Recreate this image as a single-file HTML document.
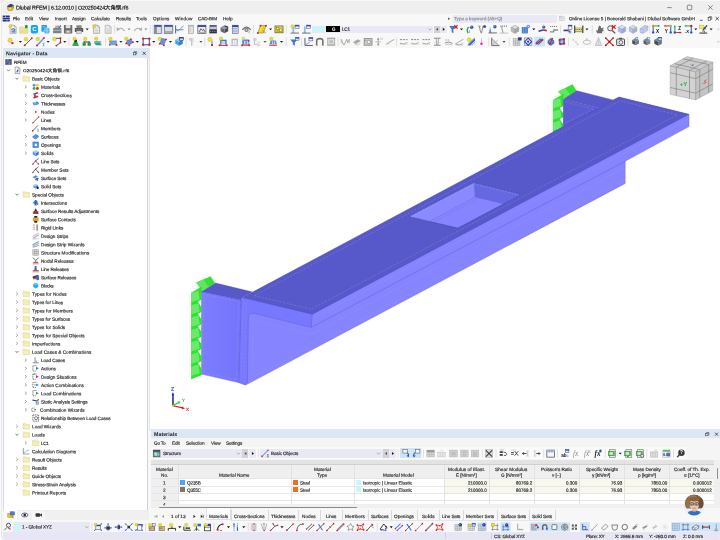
<!DOCTYPE html>
<html><head><meta charset="utf-8"><title>Dlubal RFEM</title>
<style>
html,body{margin:0;padding:0;}
body{width:720px;height:540px;overflow:hidden;position:relative;background:#fcfcfc;font-family:"Liberation Sans","Noto Sans CJK SC",sans-serif;color:#2a2a2a;}
.t{position:absolute;white-space:nowrap;line-height:6px;height:6px;-webkit-text-stroke:0.16px currentColor;}
.b{position:absolute;}
svg{position:absolute;left:0;top:0;}
svg text{font-family:"Liberation Sans","Noto Sans CJK SC",sans-serif;}
</style></head><body>
<div id="tx" style="position:absolute;left:0;top:0;width:720px;height:540px;will-change:transform;">
<div class="b" style="left:2.3px;top:0.3px;width:717.7px;height:538.6px;background:#f8f8f8;border-radius:3.5px 0 0 3.5px;box-shadow:0 0 1.5px #9a9a9a;"></div>
<div class="b" style="left:2.6px;top:0.5px;width:717.4px;height:13.2px;background:#efefef;border-radius:3.5px 0 0 0;"></div>
<span class="t" style="left:16.00px;top:4.10px;font-size:5.4px;letter-spacing:-0.111px;color:#111;transform:translateY(0.54px) rotate(0.03deg);">Dlubal RFEM | 6.12.0010 | O20250424大角钢.rf6</span>
<span class="t" style="left:12.50px;top:15.60px;font-size:4.7px;letter-spacing:-0.268px;transform:translateY(0.30px) rotate(0.03deg);">File</span>
<span class="t" style="left:25.00px;top:15.60px;font-size:4.7px;letter-spacing:-0.025px;transform:translateY(0.30px) rotate(0.03deg);">Edit</span>
<span class="t" style="left:39.00px;top:15.60px;font-size:4.7px;letter-spacing:-0.109px;transform:translateY(0.30px) rotate(0.03deg);">View</span>
<span class="t" style="left:54.50px;top:15.60px;font-size:4.7px;letter-spacing:-0.001px;transform:translateY(0.30px) rotate(0.03deg);">Insert</span>
<span class="t" style="left:72.00px;top:15.60px;font-size:4.7px;letter-spacing:-0.101px;transform:translateY(0.30px) rotate(0.03deg);">Assign</span>
<span class="t" style="left:91.25px;top:15.60px;font-size:4.7px;letter-spacing:-0.094px;transform:translateY(0.30px) rotate(0.03deg);">Calculate</span>
<span class="t" style="left:115.50px;top:15.60px;font-size:4.7px;letter-spacing:-0.096px;transform:translateY(0.30px) rotate(0.03deg);">Results</span>
<span class="t" style="left:136.25px;top:15.60px;font-size:4.7px;letter-spacing:-0.049px;transform:translateY(0.30px) rotate(0.03deg);">Tools</span>
<span class="t" style="left:153.00px;top:15.60px;font-size:4.7px;letter-spacing:0.043px;transform:translateY(0.30px) rotate(0.03deg);">Options</span>
<span class="t" style="left:175.00px;top:15.60px;font-size:4.7px;letter-spacing:0.131px;transform:translateY(0.30px) rotate(0.03deg);">Window</span>
<span class="t" style="left:198.00px;top:15.60px;font-size:4.7px;letter-spacing:-0.121px;transform:translateY(0.30px) rotate(0.03deg);">CAD-BIM</span>
<span class="t" style="left:223.00px;top:15.60px;font-size:4.7px;letter-spacing:-0.042px;transform:translateY(0.30px) rotate(0.03deg);">Help</span>
<div class="b" style="left:452.5px;top:14.6px;width:104px;height:8.2px;background:#e9e9f6;"></div>
<span class="t" style="left:453.80px;top:15.60px;font-size:4.7px;letter-spacing:-0.036px;color:#8a8a98;transform:translateY(0.30px) rotate(0.03deg);">Type a keyword (Alt+Q)</span>
<span class="t" style="left:568.80px;top:15.60px;font-size:4.7px;letter-spacing:-0.033px;transform:translateY(0.30px) rotate(0.03deg);">Online License 5 | Benerald Shabani | Dlubal Software GmbH</span>
<div class="b" style="left:312.3px;top:25.6px;width:121px;height:7.0px;background:#e9e9f6;"></div>
<div class="b" style="left:312.6px;top:26.3px;width:5.9px;height:5.7px;background:#c6f7fb;"></div>
<div class="b" style="left:319.2px;top:26.3px;width:5.9px;height:5.7px;background:#c6f7fb;"></div>
<div class="b" style="left:326.4px;top:26.0px;width:13.5px;height:6.2px;background:#000;"></div>
<span class="t" style="left:332.09px;top:25.60px;font-size:4.4px;color:#fff;transform:translateY(0.80px) rotate(0.03deg);">G</span>
<span class="t" style="left:342.00px;top:25.60px;font-size:4.6px;letter-spacing:-0.213px;transform:translateY(0.86px) rotate(0.03deg);">LC1</span>
<div class="b" style="left:434px;top:25.6px;width:5.8px;height:7.0px;background:#d2d2d6;"></div>
<div class="b" style="left:440.2px;top:25.6px;width:7.3px;height:7.0px;background:#e9e9f6;"></div>
<div class="b" style="left:3px;top:48px;width:145.6px;height:10px;background:#dbe7f5;"></div>
<span class="t" style="left:5.50px;top:50.10px;font-size:5.3px;letter-spacing:0.054px;color:#1a1a1a;font-weight:bold;-webkit-text-stroke:0;transform:translateY(0.20px) rotate(0.03deg);">Navigator - Data</span>
<div class="b" style="left:3px;top:58px;width:145.2px;height:452px;background:#fff;border-left:0.6px solid #d9d9ea;border-right:0.6px solid #d0d0e0;box-sizing:border-box;"></div>
<div class="b" style="left:3px;top:510px;width:145.6px;height:10.3px;background:#f0f0f0;"></div>
<div class="b" style="left:3.5px;top:510px;width:13.6px;height:9.6px;background:#fff;"></div>
<div class="b" style="left:18.2px;top:510.6px;width:12.2px;height:9.2px;background:#f6f6f6;"></div>
<div class="b" style="left:32px;top:510.6px;width:12.6px;height:9.2px;background:#f6f6f6;"></div>
<div class="b" style="left:13px;top:522.2px;width:77px;height:9.4px;background:#e9e9f6;"></div>
<div class="b" style="left:14.5px;top:524.4px;width:5.6px;height:5.4px;background:#c6f7fb;"></div>
<span class="t" style="left:22.30px;top:523.60px;font-size:4.7px;letter-spacing:-0.059px;transform:translateY(0.60px) rotate(0.03deg);">1 - Global XYZ</span>
<div class="b" style="left:148.6px;top:47.8px;width:1.6px;height:381px;background:#e4e4f2;"></div>
<div class="b" style="left:150.2px;top:47.8px;width:569.8px;height:380.8px;background:#fff;"></div>
<div class="b" style="left:148.6px;top:428.6px;width:571.4px;height:1.6px;background:#e6e6f3;"></div>
<div class="b" style="left:2.6px;top:532.2px;width:717.4px;height:6.6px;background:#e6e6f4;border-radius:0 0 0 3.5px;"></div>
<div class="b" style="left:444.7px;top:532.6px;width:0.5px;height:6px;background:#cfcfe0;"></div>
<div class="b" style="left:491.2px;top:532.6px;width:0.5px;height:6px;background:#cfcfe0;"></div>
<span class="t" style="left:493.50px;top:532.60px;font-size:4.7px;letter-spacing:-0.162px;transform:translateY(0.90px) rotate(0.03deg);">CS: Global XYZ</span>
<span class="t" style="left:586.00px;top:532.60px;font-size:4.7px;letter-spacing:-0.278px;transform:translateY(0.90px) rotate(0.03deg);">Plane: XY</span>
<span class="t" style="left:615.00px;top:532.60px;font-size:4.7px;letter-spacing:-0.097px;transform:translateY(0.90px) rotate(0.03deg);">X: 2968.8 mm</span>
<span class="t" style="left:648.70px;top:532.60px;font-size:4.7px;letter-spacing:-0.117px;transform:translateY(0.90px) rotate(0.03deg);">Y: -280.0 mm</span>
<span class="t" style="left:682.80px;top:532.60px;font-size:4.7px;letter-spacing:-0.128px;transform:translateY(0.90px) rotate(0.03deg);">Z: 0.0 mm</span>
<span class="t" style="left:171.11px;top:385.10px;font-size:5.2px;color:#3a3aa0;transform:translateY(0.67px) rotate(0.03deg);">Z</span>
<span class="t" style="left:186.45px;top:405.10px;font-size:5.8px;color:#e02020;transform:translateY(0.97px) rotate(0.03deg);">x</span>
<span class="t" style="left:181.50px;top:396.60px;font-size:4.2px;color:#20b820;transform:translateY(0.63px) rotate(0.03deg);">Y</span>
<span class="t" style="left:13.75px;top:58.60px;font-size:4.7px;letter-spacing:-0.216px;transform:translateY(1.00px) rotate(0.03deg);">RFEM</span>
<span class="t" style="left:23.00px;top:67.60px;font-size:4.7px;letter-spacing:0.032px;color:#111;font-weight:bold;-webkit-text-stroke:0;transform:translateY(0.28px) rotate(0.03deg);">O20250424大角钢.rf6</span>
<span class="t" style="left:32.00px;top:75.60px;font-size:4.7px;letter-spacing:-0.095px;transform:translateY(0.56px) rotate(0.03deg);">Basic Objects</span>
<span class="t" style="left:41.25px;top:83.60px;font-size:4.7px;letter-spacing:0.020px;transform:translateY(0.84px) rotate(0.03deg);">Materials</span>
<span class="t" style="left:41.25px;top:92.60px;font-size:4.7px;letter-spacing:-0.080px;transform:translateY(0.12px) rotate(0.03deg);">Cross-Sections</span>
<span class="t" style="left:41.25px;top:100.60px;font-size:4.7px;letter-spacing:-0.170px;transform:translateY(0.40px) rotate(0.03deg);">Thicknesses</span>
<span class="t" style="left:41.25px;top:108.60px;font-size:4.7px;letter-spacing:0.033px;transform:translateY(0.68px) rotate(0.03deg);">Nodes</span>
<span class="t" style="left:41.25px;top:116.60px;font-size:4.7px;letter-spacing:-0.197px;transform:translateY(0.96px) rotate(0.03deg);">Lines</span>
<span class="t" style="left:41.25px;top:125.60px;font-size:4.7px;letter-spacing:0.023px;transform:translateY(0.24px) rotate(0.03deg);">Members</span>
<span class="t" style="left:41.25px;top:133.60px;font-size:4.7px;letter-spacing:-0.131px;transform:translateY(0.52px) rotate(0.03deg);">Surfaces</span>
<span class="t" style="left:41.25px;top:141.60px;font-size:4.7px;letter-spacing:-0.046px;transform:translateY(0.80px) rotate(0.03deg);">Openings</span>
<span class="t" style="left:41.25px;top:150.60px;font-size:4.7px;letter-spacing:-0.050px;transform:translateY(0.08px) rotate(0.03deg);">Solids</span>
<span class="t" style="left:41.25px;top:158.60px;font-size:4.7px;letter-spacing:-0.150px;transform:translateY(0.36px) rotate(0.03deg);">Line Sets</span>
<span class="t" style="left:41.25px;top:166.60px;font-size:4.7px;letter-spacing:-0.018px;transform:translateY(0.64px) rotate(0.03deg);">Member Sets</span>
<span class="t" style="left:41.25px;top:174.60px;font-size:4.7px;letter-spacing:-0.138px;transform:translateY(0.92px) rotate(0.03deg);">Surface Sets</span>
<span class="t" style="left:41.25px;top:183.60px;font-size:4.7px;letter-spacing:-0.091px;transform:translateY(0.20px) rotate(0.03deg);">Solid Sets</span>
<span class="t" style="left:32.00px;top:191.60px;font-size:4.7px;letter-spacing:-0.044px;transform:translateY(0.48px) rotate(0.03deg);">Special Objects</span>
<span class="t" style="left:41.25px;top:199.60px;font-size:4.7px;letter-spacing:-0.050px;transform:translateY(0.76px) rotate(0.03deg);">Intersections</span>
<span class="t" style="left:41.25px;top:208.60px;font-size:4.7px;letter-spacing:-0.059px;transform:translateY(0.04px) rotate(0.03deg);">Surface Results Adjustments</span>
<span class="t" style="left:41.25px;top:216.60px;font-size:4.7px;letter-spacing:-0.081px;transform:translateY(0.32px) rotate(0.03deg);">Surface Contacts</span>
<span class="t" style="left:41.25px;top:224.60px;font-size:4.7px;letter-spacing:-0.067px;transform:translateY(0.60px) rotate(0.03deg);">Rigid Links</span>
<span class="t" style="left:41.25px;top:232.60px;font-size:4.7px;letter-spacing:-0.035px;transform:translateY(0.88px) rotate(0.03deg);">Design Strips</span>
<span class="t" style="left:41.25px;top:241.60px;font-size:4.7px;letter-spacing:-0.006px;transform:translateY(0.16px) rotate(0.03deg);">Design Strip Wizards</span>
<span class="t" style="left:41.25px;top:249.60px;font-size:4.7px;letter-spacing:0.030px;transform:translateY(0.44px) rotate(0.03deg);">Structure Modifications</span>
<span class="t" style="left:41.25px;top:257.60px;font-size:4.7px;letter-spacing:-0.031px;transform:translateY(0.72px) rotate(0.03deg);">Nodal Releases</span>
<span class="t" style="left:41.25px;top:265.60px;font-size:4.7px;letter-spacing:-0.157px;transform:translateY(1.00px) rotate(0.03deg);">Line Releases</span>
<span class="t" style="left:41.25px;top:274.60px;font-size:4.7px;letter-spacing:-0.115px;transform:translateY(0.28px) rotate(0.03deg);">Surface Releases</span>
<span class="t" style="left:41.25px;top:282.60px;font-size:4.7px;letter-spacing:-0.224px;transform:translateY(0.56px) rotate(0.03deg);">Blocks</span>
<span class="t" style="left:32.00px;top:290.60px;font-size:4.7px;letter-spacing:0.035px;transform:translateY(0.84px) rotate(0.03deg);">Types for Nodes</span>
<span class="t" style="left:32.00px;top:299.60px;font-size:4.7px;letter-spacing:-0.042px;transform:translateY(0.12px) rotate(0.03deg);">Types for Lines</span>
<span class="t" style="left:32.00px;top:307.60px;font-size:4.7px;letter-spacing:0.045px;transform:translateY(0.40px) rotate(0.03deg);">Types for Members</span>
<span class="t" style="left:32.00px;top:315.60px;font-size:4.7px;letter-spacing:-0.052px;transform:translateY(0.68px) rotate(0.03deg);">Types for Surfaces</span>
<span class="t" style="left:32.00px;top:323.60px;font-size:4.7px;letter-spacing:-0.012px;transform:translateY(0.96px) rotate(0.03deg);">Types for Solids</span>
<span class="t" style="left:32.00px;top:332.60px;font-size:4.7px;letter-spacing:-0.022px;transform:translateY(0.24px) rotate(0.03deg);">Types for Special Objects</span>
<span class="t" style="left:32.00px;top:340.60px;font-size:4.7px;letter-spacing:0.022px;transform:translateY(0.52px) rotate(0.03deg);">Imperfections</span>
<span class="t" style="left:32.00px;top:348.60px;font-size:4.7px;letter-spacing:-0.003px;transform:translateY(0.80px) rotate(0.03deg);">Load Cases &amp; Combinations</span>
<span class="t" style="left:41.25px;top:357.60px;font-size:4.7px;letter-spacing:-0.108px;transform:translateY(0.08px) rotate(0.03deg);">Load Cases</span>
<span class="t" style="left:41.25px;top:365.60px;font-size:4.7px;letter-spacing:-0.095px;transform:translateY(0.36px) rotate(0.03deg);">Actions</span>
<span class="t" style="left:41.25px;top:373.60px;font-size:4.7px;letter-spacing:-0.049px;transform:translateY(0.64px) rotate(0.03deg);">Design Situations</span>
<span class="t" style="left:41.25px;top:381.60px;font-size:4.7px;letter-spacing:-0.006px;transform:translateY(0.92px) rotate(0.03deg);">Action Combinations</span>
<span class="t" style="left:41.25px;top:390.60px;font-size:4.7px;letter-spacing:0.000px;transform:translateY(0.20px) rotate(0.03deg);">Load Combinations</span>
<span class="t" style="left:41.25px;top:398.60px;font-size:4.7px;letter-spacing:-0.077px;transform:translateY(0.48px) rotate(0.03deg);">Static Analysis Settings</span>
<span class="t" style="left:40.00px;top:406.60px;font-size:4.7px;letter-spacing:0.004px;transform:translateY(0.76px) rotate(0.03deg);">Combination Wizards</span>
<span class="t" style="left:41.25px;top:415.60px;font-size:4.7px;letter-spacing:-0.068px;transform:translateY(0.04px) rotate(0.03deg);">Relationship Between Load Cases</span>
<span class="t" style="left:32.00px;top:423.60px;font-size:4.7px;letter-spacing:0.022px;transform:translateY(0.32px) rotate(0.03deg);">Load Wizards</span>
<span class="t" style="left:32.00px;top:431.60px;font-size:4.7px;letter-spacing:-0.011px;transform:translateY(0.60px) rotate(0.03deg);">Loads</span>
<span class="t" style="left:41.25px;top:439.60px;font-size:4.7px;letter-spacing:-0.350px;transform:translateY(0.88px) rotate(0.03deg);">LC1</span>
<span class="t" style="left:32.00px;top:448.60px;font-size:4.7px;letter-spacing:-0.021px;transform:translateY(0.16px) rotate(0.03deg);">Calculation Diagrams</span>
<span class="t" style="left:32.00px;top:456.60px;font-size:4.7px;letter-spacing:-0.040px;transform:translateY(0.44px) rotate(0.03deg);">Result Objects</span>
<span class="t" style="left:32.00px;top:464.60px;font-size:4.7px;letter-spacing:-0.132px;transform:translateY(0.72px) rotate(0.03deg);">Results</span>
<span class="t" style="left:32.00px;top:472.60px;font-size:4.7px;letter-spacing:-0.041px;transform:translateY(1.00px) rotate(0.03deg);">Guide Objects</span>
<span class="t" style="left:32.00px;top:481.60px;font-size:4.7px;letter-spacing:-0.078px;transform:translateY(0.28px) rotate(0.03deg);">Stress-Strain Analysis</span>
<span class="t" style="left:32.00px;top:489.60px;font-size:4.7px;letter-spacing:0.018px;transform:translateY(0.56px) rotate(0.03deg);">Printout Reports</span>
<div class="b" style="left:150.6px;top:430.2px;width:569.4px;height:8.1px;background:#dbe7f5;"></div>
<span class="t" style="left:153.80px;top:431.10px;font-size:5.3px;letter-spacing:0.014px;color:#1a1a1a;font-weight:bold;-webkit-text-stroke:0;transform:translateY(0.10px) rotate(0.03deg);">Materials</span>
<div class="b" style="left:150.6px;top:438.3px;width:569.4px;height:21.5px;background:#f5f5f5;"></div>
<div class="b" style="left:150.6px;top:447.0px;width:536.1px;height:12.2px;background:#fafafa;"></div>
<span class="t" style="left:154.25px;top:439.60px;font-size:4.7px;letter-spacing:-0.202px;transform:translateY(0.80px) rotate(0.03deg);">Go To</span>
<span class="t" style="left:172.30px;top:439.60px;font-size:4.7px;letter-spacing:-0.100px;transform:translateY(0.80px) rotate(0.03deg);">Edit</span>
<span class="t" style="left:186.20px;top:439.60px;font-size:4.7px;letter-spacing:-0.093px;transform:translateY(0.80px) rotate(0.03deg);">Selection</span>
<span class="t" style="left:210.50px;top:439.60px;font-size:4.7px;letter-spacing:-0.172px;transform:translateY(0.80px) rotate(0.03deg);">View</span>
<span class="t" style="left:226.00px;top:439.60px;font-size:4.7px;letter-spacing:-0.098px;transform:translateY(0.80px) rotate(0.03deg);">Settings</span>
<div class="b" style="left:152.9px;top:449.0px;width:88.7px;height:8.6px;background:#e9e9f6;"></div>
<div class="b" style="left:242.3px;top:449.0px;width:6.2px;height:8.6px;background:#d2d2d6;"></div>
<div class="b" style="left:248.5px;top:449.0px;width:7.5px;height:8.6px;background:#e9e9f6;"></div>
<div class="b" style="left:260.0px;top:449.0px;width:122.6px;height:8.6px;background:#e9e9f6;"></div>
<div class="b" style="left:382.8px;top:449.0px;width:6.0px;height:8.6px;background:#d2d2d6;"></div>
<div class="b" style="left:388.8px;top:449.0px;width:7.5px;height:8.6px;background:#e9e9f6;"></div>
<span class="t" style="left:162.60px;top:449.60px;font-size:4.7px;letter-spacing:-0.119px;transform:translateY(1.00px) rotate(0.03deg);">Structure</span>
<span class="t" style="left:271.00px;top:449.60px;font-size:4.7px;letter-spacing:-0.114px;transform:translateY(1.00px) rotate(0.03deg);">Basic Objects</span>
<div class="b" style="left:150.6px;top:459.7px;width:569.4px;height:45px;background:#fff;"></div>
<div class="b" style="left:150.6px;top:459.7px;width:563.6px;height:4.400000000000034px;background:#e3e3e3;"></div>
<div class="b" style="left:150.6px;top:464.1px;width:563.6px;height:14.5px;background:#efefef;"></div>
<div class="b" style="left:150.6px;top:478.6px;width:27.200000000000017px;height:25.8px;background:#efefef;"></div>
<div class="b" style="left:444px;top:478.6px;width:270px;height:7.25px;background:#f8f8ef;"></div>
<div class="b" style="left:444px;top:485.85px;width:270px;height:7.25px;background:#f8f8ef;"></div>
<div class="b" style="left:177.55px;top:459.7px;width:0.5px;height:45px;background:#e2e2e2;"></div>
<div class="b" style="left:290.75px;top:459.7px;width:0.5px;height:45px;background:#e2e2e2;"></div>
<div class="b" style="left:353.55px;top:459.7px;width:0.5px;height:45px;background:#e2e2e2;"></div>
<div class="b" style="left:443.75px;top:459.7px;width:0.5px;height:45px;background:#e2e2e2;"></div>
<div class="b" style="left:488.75px;top:459.7px;width:0.5px;height:45px;background:#e2e2e2;"></div>
<div class="b" style="left:533.75px;top:459.7px;width:0.5px;height:45px;background:#e2e2e2;"></div>
<div class="b" style="left:578.75px;top:459.7px;width:0.5px;height:45px;background:#e2e2e2;"></div>
<div class="b" style="left:623.75px;top:459.7px;width:0.5px;height:45px;background:#e2e2e2;"></div>
<div class="b" style="left:668.75px;top:459.7px;width:0.5px;height:45px;background:#e2e2e2;"></div>
<div class="b" style="left:713.75px;top:459.7px;width:0.5px;height:45px;background:#e2e2e2;"></div>
<div class="b" style="left:150.6px;top:478.35px;width:563.6px;height:0.5px;background:#e6e6e6;"></div>
<div class="b" style="left:150.6px;top:485.6px;width:563.6px;height:0.5px;background:#e6e6e6;"></div>
<div class="b" style="left:150.6px;top:492.85px;width:563.6px;height:0.5px;background:#e6e6e6;"></div>
<div class="b" style="left:150.6px;top:500.1px;width:563.6px;height:0.5px;background:#e6e6e6;"></div>
<div class="b" style="left:150.6px;top:463.90000000000003px;width:563.6px;height:0.4px;background:#d0d0d0;"></div>
<div class="b" style="left:714.3px;top:459.7px;width:5.7px;height:45px;background:#f0f0f0;"></div>
<div class="b" style="left:717.2px;top:467.6px;width:1.3px;height:11px;background:#8e8e8e;border-radius:0.6px;"></div>
<div class="b" style="left:150.6px;top:504.4px;width:569.4px;height:3.8px;background:#f0f0f0;"></div>
<div class="b" style="left:158.9px;top:506.8px;width:198.6px;height:0.9px;background:#8a8a8a;border-radius:0.4px;"></div>
<span class="t" style="left:156.04px;top:465.60px;font-size:4.7px;transform:translateY(0.90px) rotate(0.03deg);">Material</span>
<span class="t" style="left:160.74px;top:471.60px;font-size:4.7px;transform:translateY(0.80px) rotate(0.03deg);">No.</span>
<span class="t" style="left:219.12px;top:471.60px;font-size:4.7px;transform:translateY(0.80px) rotate(0.03deg);">Material Name</span>
<span class="t" style="left:314.04px;top:465.60px;font-size:4.7px;transform:translateY(0.90px) rotate(0.03deg);">Material</span>
<span class="t" style="left:317.18px;top:471.60px;font-size:4.7px;transform:translateY(0.80px) rotate(0.03deg);">Type</span>
<span class="t" style="left:383.49px;top:471.60px;font-size:4.7px;transform:translateY(0.80px) rotate(0.03deg);">Material Model</span>
<span class="t" style="left:447.85px;top:465.60px;font-size:4.7px;letter-spacing:0.073px;transform:translateY(0.90px) rotate(0.03deg);">Modulus of Elast.</span>
<span class="t" style="left:456.15px;top:471.60px;font-size:4.6px;transform:translateY(0.76px) rotate(0.03deg);">E [N/mm²]</span>
<span class="t" style="left:495.25px;top:465.60px;font-size:4.7px;letter-spacing:0.068px;transform:translateY(0.90px) rotate(0.03deg);">Shear Modulus</span>
<span class="t" style="left:500.90px;top:471.60px;font-size:4.6px;transform:translateY(0.76px) rotate(0.03deg);">G [N/mm²]</span>
<span class="t" style="left:540.90px;top:465.60px;font-size:4.7px;letter-spacing:-0.070px;transform:translateY(0.90px) rotate(0.03deg);">Poisson's Ratio</span>
<span class="t" style="left:552.15px;top:471.60px;font-size:4.6px;transform:translateY(0.76px) rotate(0.03deg);">ν [–]</span>
<span class="t" style="left:585.50px;top:465.60px;font-size:4.7px;letter-spacing:-0.026px;transform:translateY(0.90px) rotate(0.03deg);">Specific Weight</span>
<span class="t" style="left:592.30px;top:471.60px;font-size:4.6px;transform:translateY(0.76px) rotate(0.03deg);">γ [kN/m³]</span>
<span class="t" style="left:632.50px;top:465.60px;font-size:4.7px;letter-spacing:-0.017px;transform:translateY(0.90px) rotate(0.03deg);">Mass Density</span>
<span class="t" style="left:637.52px;top:471.60px;font-size:4.6px;transform:translateY(0.76px) rotate(0.03deg);">ρ [kg/m³]</span>
<span class="t" style="left:673.50px;top:465.60px;font-size:4.7px;letter-spacing:-0.032px;transform:translateY(0.90px) rotate(0.03deg);">Coeff. of Th. Exp.</span>
<span class="t" style="left:683.75px;top:471.60px;font-size:4.6px;transform:translateY(0.76px) rotate(0.03deg);">α [1/°C]</span>
<span class="t" style="left:163.09px;top:479.60px;font-size:4.7px;transform:translateY(0.50px) rotate(0.03deg);">1</span>
<div class="b" style="left:180.1px;top:480.20000000000005px;width:4.9px;height:4.8px;background:#4aa5ff;"></div>
<span class="t" style="left:187.00px;top:479.60px;font-size:4.7px;letter-spacing:-0.166px;transform:translateY(0.50px) rotate(0.03deg);">Q235B</span>
<div class="b" style="left:292.9px;top:480.20000000000005px;width:4.7px;height:4.8px;background:#ee6f1f;"></div>
<span class="t" style="left:300.00px;top:479.60px;font-size:4.7px;letter-spacing:-0.143px;transform:translateY(0.50px) rotate(0.03deg);">Steel</span>
<div class="b" style="left:356.4px;top:480.20000000000005px;width:4.7px;height:4.8px;background:#c6f7fb;"></div>
<span class="t" style="left:362.70px;top:479.60px;font-size:4.7px;letter-spacing:-0.020px;transform:translateY(0.50px) rotate(0.03deg);">Isotropic | Linear Elastic</span>
<span class="t" style="left:468.33px;top:479.60px;font-size:4.5px;transform:translateY(0.43px) rotate(0.03deg);">210000.0</span>
<span class="t" style="left:515.83px;top:479.60px;font-size:4.5px;transform:translateY(0.43px) rotate(0.03deg);">80769.2</span>
<span class="t" style="left:565.84px;top:479.60px;font-size:4.5px;transform:translateY(0.43px) rotate(0.03deg);">0.300</span>
<span class="t" style="left:610.84px;top:479.60px;font-size:4.5px;transform:translateY(0.43px) rotate(0.03deg);">76.93</span>
<span class="t" style="left:650.83px;top:479.60px;font-size:4.5px;transform:translateY(0.43px) rotate(0.03deg);">7850.00</span>
<span class="t" style="left:693.33px;top:479.60px;font-size:4.5px;transform:translateY(0.43px) rotate(0.03deg);">0.000012</span>
<span class="t" style="left:163.09px;top:486.60px;font-size:4.7px;transform:translateY(0.75px) rotate(0.03deg);">2</span>
<div class="b" style="left:180.1px;top:487.45000000000005px;width:4.9px;height:4.8px;background:#8a7358;"></div>
<span class="t" style="left:187.00px;top:486.60px;font-size:4.7px;letter-spacing:-0.218px;transform:translateY(0.75px) rotate(0.03deg);">Q355C</span>
<div class="b" style="left:292.9px;top:487.45000000000005px;width:4.7px;height:4.8px;background:#ee6f1f;"></div>
<span class="t" style="left:300.00px;top:486.60px;font-size:4.7px;letter-spacing:-0.143px;transform:translateY(0.75px) rotate(0.03deg);">Steel</span>
<div class="b" style="left:356.4px;top:487.45000000000005px;width:4.7px;height:4.8px;background:#c6f7fb;"></div>
<span class="t" style="left:362.70px;top:486.60px;font-size:4.7px;letter-spacing:-0.020px;transform:translateY(0.75px) rotate(0.03deg);">Isotropic | Linear Elastic</span>
<span class="t" style="left:468.33px;top:486.60px;font-size:4.5px;transform:translateY(0.68px) rotate(0.03deg);">210000.0</span>
<span class="t" style="left:515.83px;top:486.60px;font-size:4.5px;transform:translateY(0.68px) rotate(0.03deg);">80769.2</span>
<span class="t" style="left:565.84px;top:486.60px;font-size:4.5px;transform:translateY(0.68px) rotate(0.03deg);">0.300</span>
<span class="t" style="left:610.84px;top:486.60px;font-size:4.5px;transform:translateY(0.68px) rotate(0.03deg);">76.93</span>
<span class="t" style="left:650.83px;top:486.60px;font-size:4.5px;transform:translateY(0.68px) rotate(0.03deg);">7850.00</span>
<span class="t" style="left:693.33px;top:486.60px;font-size:4.5px;transform:translateY(0.68px) rotate(0.03deg);">0.000012</span>
<span class="t" style="left:163.09px;top:493.60px;font-size:4.7px;transform:translateY(1.00px) rotate(0.03deg);">3</span>
<span class="t" style="left:163.09px;top:501.60px;font-size:4.7px;transform:translateY(0.25px) rotate(0.03deg);clip-path:inset(0 0 2.9px 0);">4</span>
<div class="b" style="left:150.6px;top:508.2px;width:569.4px;height:12.6px;background:#f7f7f7;"></div>
<div class="b" style="left:206.3px;top:508.2px;width:24.9px;height:12.2px;background:#fff;border:0.4px solid #e0e0e0;border-top:none;box-sizing:border-box;"></div>
<span class="t" style="left:170.60px;top:512.60px;font-size:4.7px;letter-spacing:0.047px;transform:translateY(1.00px) rotate(0.03deg);">1 of 13</span>
<span class="t" style="left:209.00px;top:512.60px;font-size:4.7px;letter-spacing:0.004px;transform:translateY(1.00px) rotate(0.03deg);">Materials</span>
<span class="t" style="left:234.40px;top:512.60px;font-size:4.7px;letter-spacing:-0.090px;transform:translateY(1.00px) rotate(0.03deg);">Cross-Sections</span>
<span class="t" style="left:271.00px;top:512.60px;font-size:4.7px;letter-spacing:-0.170px;transform:translateY(1.00px) rotate(0.03deg);">Thicknesses</span>
<span class="t" style="left:302.25px;top:512.60px;font-size:4.7px;letter-spacing:0.033px;transform:translateY(1.00px) rotate(0.03deg);">Nodes</span>
<span class="t" style="left:326.00px;top:512.60px;font-size:4.7px;letter-spacing:-0.197px;transform:translateY(1.00px) rotate(0.03deg);">Lines</span>
<span class="t" style="left:345.00px;top:512.60px;font-size:4.7px;letter-spacing:0.059px;transform:translateY(1.00px) rotate(0.03deg);">Members</span>
<span class="t" style="left:371.25px;top:512.60px;font-size:4.7px;letter-spacing:-0.131px;transform:translateY(1.00px) rotate(0.03deg);">Surfaces</span>
<span class="t" style="left:394.40px;top:512.60px;font-size:4.7px;letter-spacing:-0.015px;transform:translateY(1.00px) rotate(0.03deg);">Openings</span>
<span class="t" style="left:422.25px;top:512.60px;font-size:4.7px;letter-spacing:-0.050px;transform:translateY(1.00px) rotate(0.03deg);">Solids</span>
<span class="t" style="left:441.90px;top:512.60px;font-size:4.7px;letter-spacing:-0.138px;transform:translateY(1.00px) rotate(0.03deg);">Line Sets</span>
<span class="t" style="left:466.25px;top:512.60px;font-size:4.7px;letter-spacing:0.018px;transform:translateY(1.00px) rotate(0.03deg);">Member Sets</span>
<span class="t" style="left:500.60px;top:512.60px;font-size:4.7px;letter-spacing:-0.159px;transform:translateY(1.00px) rotate(0.03deg);">Surface Sets</span>
<span class="t" style="left:531.90px;top:512.60px;font-size:4.7px;letter-spacing:-0.116px;transform:translateY(1.00px) rotate(0.03deg);">Solid Sets</span>
<div class="b" style="left:231.0px;top:509.6px;width:0.4px;height:10.2px;background:#d9d9e4;"></div>
<div class="b" style="left:267.8px;top:509.6px;width:0.4px;height:10.2px;background:#d9d9e4;"></div>
<div class="b" style="left:298.3px;top:509.6px;width:0.4px;height:10.2px;background:#d9d9e4;"></div>
<div class="b" style="left:319.8px;top:509.6px;width:0.4px;height:10.2px;background:#d9d9e4;"></div>
<div class="b" style="left:341.8px;top:509.6px;width:0.4px;height:10.2px;background:#d9d9e4;"></div>
<div class="b" style="left:368.3px;top:509.6px;width:0.4px;height:10.2px;background:#d9d9e4;"></div>
<div class="b" style="left:391.05px;top:509.6px;width:0.4px;height:10.2px;background:#d9d9e4;"></div>
<div class="b" style="left:417.3px;top:509.6px;width:0.4px;height:10.2px;background:#d9d9e4;"></div>
<div class="b" style="left:438.8px;top:509.6px;width:0.4px;height:10.2px;background:#d9d9e4;"></div>
<div class="b" style="left:462.90000000000003px;top:509.6px;width:0.4px;height:10.2px;background:#d9d9e4;"></div>
<div class="b" style="left:497.3px;top:509.6px;width:0.4px;height:10.2px;background:#d9d9e4;"></div>
<div class="b" style="left:528.55px;top:509.6px;width:0.4px;height:10.2px;background:#d9d9e4;"></div>
<div class="b" style="left:554.8px;top:509.6px;width:0.4px;height:10.2px;background:#d9d9e4;"></div>
<div class="b" style="left:231.4px;top:519.6px;width:323.6px;height:0.4px;background:#e4e4ec;"></div>
</div>
<svg width="720" height="540" viewBox="0 0 720 540">
<line x1="667.2" y1="7.6" x2="671.7" y2="7.6" stroke="#222" stroke-width="0.5" />
<rect x="687.3" y="5.2" width="4.5" height="4.5" fill="none" stroke="#222" stroke-width="0.5" rx="0.9"/>
<line x1="708.1" y1="5.2" x2="712.6" y2="9.8" stroke="#222" stroke-width="0.5" /><line x1="712.6" y1="5.2" x2="708.1" y2="9.8" stroke="#222" stroke-width="0.5" />
<polygon points="448.3,17.5 448.3,19.9 449.9,18.7" fill="#222" />
<line x1="699.9" y1="20.3" x2="702.7" y2="20.3" stroke="#222" stroke-width="0.7" />
<line x1="715.6" y1="17.0" x2="718.8" y2="20.2" stroke="#111" stroke-width="0.7" /><line x1="718.8" y1="17.0" x2="715.6" y2="20.2" stroke="#111" stroke-width="0.7" />
<line x1="142.7" y1="51.8" x2="145.7" y2="54.8" stroke="#111" stroke-width="0.65" /><line x1="145.7" y1="51.8" x2="142.7" y2="54.8" stroke="#111" stroke-width="0.65" />
<polygon points="558,91.5 572.6,84.3 576.6,90.9 564.3,98.6" fill="#35e135" />
<polygon points="558,91.5 565.3,87.9 570.45,94.75 564.3,98.6" fill="#5fe85f" />
<polygon points="552.9,100.0 563.6,93.8 563.6,129.9 552.9,134.20000000000002" fill="#2fe02f" />
<polygon points="552.9,100.3 560.3000000000001,98.2 561.4,105.8 552.9,108.5" fill="#6be96b" />
<polygon points="552.9,111.5 560.3000000000001,109.4 561.4,117.0 552.9,119.7" fill="#6be96b" />
<polygon points="559.7,107.8 563.3000000000001,106.0 562.9,112.9" fill="#fff" />
<polygon points="552.9,122.7 560.3000000000001,120.60000000000001 561.4,128.20000000000002 552.9,130.9" fill="#6be96b" />
<polygon points="559.7,119.0 563.3000000000001,117.2 562.9,124.10000000000001" fill="#fff" />
<polygon points="196.2,282.6 210.6,276.2 215.2,283.2 201.9,290.8" fill="#35e135" />
<polygon points="196.2,282.6 203.39999999999998,279.4 208.55,287.0 201.9,290.8" fill="#5fe85f" />
<polygon points="191.1,292.7 201.8,286.5 201.8,375.0 191.1,379.3" fill="#2fe02f" />
<polygon points="191.1,293.0 198.5,290.9 199.60000000000002,299.5857142857143 191.1,302.2857142857143" fill="#6be96b" />
<polygon points="191.1,305.2857142857143 198.5,303.18571428571425 199.60000000000002,311.87142857142857 191.1,314.57142857142856" fill="#6be96b" />
<polygon points="197.9,301.5857142857143 201.5,299.7857142857143 201.10000000000002,306.68571428571425" fill="#fff" />
<polygon points="191.1,317.57142857142856 198.5,315.47142857142853 199.60000000000002,324.15714285714284 191.1,326.85714285714283" fill="#6be96b" />
<polygon points="197.9,313.87142857142857 201.5,312.07142857142856 201.10000000000002,318.97142857142853" fill="#fff" />
<polygon points="191.1,329.8571428571429 198.5,327.75714285714287 199.60000000000002,336.4428571428572 191.1,339.14285714285717" fill="#6be96b" />
<polygon points="197.9,326.1571428571429 201.5,324.3571428571429 201.10000000000002,331.25714285714287" fill="#fff" />
<polygon points="191.1,342.14285714285717 198.5,340.04285714285714 199.60000000000002,348.72857142857146 191.1,351.42857142857144" fill="#6be96b" />
<polygon points="197.9,338.4428571428572 201.5,336.64285714285717 201.10000000000002,343.54285714285714" fill="#fff" />
<polygon points="191.1,354.42857142857144 198.5,352.3285714285714 199.60000000000002,361.01428571428573 191.1,363.7142857142857" fill="#6be96b" />
<polygon points="197.9,350.72857142857146 201.5,348.92857142857144 201.10000000000002,355.8285714285714" fill="#fff" />
<polygon points="191.1,366.7142857142857 198.5,364.6142857142857 199.60000000000002,373.3 191.1,376.0" fill="#6be96b" />
<polygon points="197.9,363.01428571428573 201.5,361.2142857142857 201.10000000000002,368.1142857142857" fill="#fff" />
<polygon points="241,300 238.6,382.6 245.5,385.1 625.2,183.4 625.2,161.2 689,126.5 689,114.3 619,97 300,270" fill="#8685ff" />
<path d="M241.2,300 L242.3,297.6 L312.3,314.2 L311.2,327.4 L254,313.3 Q248.6,312.4 248.4,318.5 L247.4,383 L245.5,385.1 L238.6,382.6 Z" fill="#7778ff" stroke="none" stroke-width="0.7" />
<defs><linearGradient id="gf" x1="0" x2="1" y1="0" y2="0"><stop offset="0" stop-color="#7c7dff"/><stop offset="1" stop-color="#7374fb"/></linearGradient></defs>
<polygon points="201.4,291.7 241.2,300 238.6,382.6 201.6,374.1" fill="url(#gf)" />
<polygon points="563.3,99.3 576.8,90.8 612.9,99.9 606,108 598.3,107.7" fill="#5758ca" />
<polygon points="563.3,99.3 598.3,107.7 603,112 563.3,130" fill="#5b5cd0" />
<polygon points="201.4,291.7 215.7,283.1 252.6,292 242.3,297.6 241.2,300" fill="#5758ca" />
<polygon points="242.3,297.6 613,100.1 619,97 689,114.3 312.3,314.2" fill="#5758ca" />
<polygon points="409,216.6 474,182.6 521.3,194.4 457.8,228.1" fill="#8685ff" />
<polygon points="474,182.6 521.3,194.4 504.3,203.9 474.9,197.1" fill="#6667e2" />
<polygon points="409,216.6 474,182.6 474.9,197.1 429.8,221.4" fill="#8a89ff" />
<polyline points="429.8,221.4 474.9,197.1 504.3,203.9" fill="none" stroke="#6a6ad0" stroke-width="0.4" />
<polyline points="433.5,222.3 477.5,198.6" fill="none" stroke="#7272d8" stroke-width="0.35" />
<polyline points="474,182.6 474.9,197.1" fill="none" stroke="#6a6ad0" stroke-width="0.4" />
<polyline points="409,216.6 474,182.6 521.3,194.4 457.8,228.1 409,216.6" fill="none" stroke="#2c4a9c" stroke-width="0.6" stroke-dasharray="1.3 0.6"/>
<polyline points="411.5,216.5 474.2,183.9 518.6,194.9" fill="none" stroke="#b4b4ea" stroke-width="0.35" stroke-dasharray="2 1.2"/>
<polyline points="201.4,291.7 241.2,300 238.6,382.6" fill="none" stroke="#4b4cba" stroke-width="0.45" />
<polyline points="201.4,291.7 215.7,283.1 252.6,292" fill="none" stroke="#4b4cba" stroke-width="0.4" />
<polyline points="242.3,297.6 312.3,314.2 689,114.3 619,97 613,100.1 242.3,297.6" fill="none" stroke="#4b4cba" stroke-width="0.4" />
<polyline points="312.3,314.2 311.2,327.4 625.2,161.2" fill="none" stroke="#5f60d2" stroke-width="0.5" />
<polyline points="689,114.3 689,126.5 625.2,161.2 625.2,183.4" fill="none" stroke="#6a6be0" stroke-width="0.45" />
<polyline points="311.2,327.4 254,313.3" fill="none" stroke="#6061d8" stroke-width="0.45" />
<path d="M254,313.3 Q248.6,312.4 248.4,318.5 L247.4,383" fill="none" stroke="#6061d8" stroke-width="0.45" />
<polyline points="245.5,385.1 625.2,183.4" fill="none" stroke="#6a6be0" stroke-width="0.5" />
<polyline points="201.6,374.1 238.6,382.6 245.5,385.1" fill="none" stroke="#6a6be0" stroke-width="0.5" />
<polyline points="563.3,99.3 576.8,90.8 612.9,99.9" fill="none" stroke="#4b4cba" stroke-width="0.4" />
<polyline points="563.3,99.3 598.3,107.7" fill="none" stroke="#4b4cba" stroke-width="0.4" />
<polyline points="563.3,99.3 563.3,125.8" fill="none" stroke="#4b4cba" stroke-width="0.4" />
<path d="M256,323 Q253,322.5 252.8,326 L252.2,377.5 L625,179.5" fill="none" stroke="#a9a9dc" stroke-width="0.4" stroke-dasharray="2.4 1.3" stroke-opacity="0.62"/>
<polyline points="258,321 311,334.5 624,168.5" fill="none" stroke="#a9a9dc" stroke-width="0.4" stroke-dasharray="2.4 1.3" stroke-opacity="0.62"/>
<polyline points="314.5,317.6 687.5,119.6" fill="none" stroke="#a9a9dc" stroke-width="0.4" stroke-dasharray="2.4 1.3" stroke-opacity="0.62"/>
<polyline points="254.3,295.6 311.2,309.1 677.2,114.9 620.2,100.8 254.3,295.6" fill="none" stroke="#a9a9dc" stroke-width="0.45" stroke-dasharray="2.4 1.3" stroke-opacity="0.62"/>
<polyline points="203.5,294.2 238.8,301.8 236.6,380 203.6,372.4 203.5,294.2" fill="none" stroke="#a9a9dc" stroke-width="0.45" stroke-dasharray="2.4 1.3" stroke-opacity="0.62"/>
<polyline points="243.2,301 241,381.5" fill="none" stroke="#a9a9dc" stroke-width="0.4" stroke-dasharray="2.4 1.3" stroke-opacity="0.62"/>
<polyline points="246,302 244.2,382.5" fill="none" stroke="#a9a9dc" stroke-width="0.4" stroke-dasharray="2.4 1.3" stroke-opacity="0.62"/>
<polyline points="565.3,102 594,109 565.3,123" fill="none" stroke="#a9a9dc" stroke-width="0.4" stroke-dasharray="2.4 1.3" stroke-opacity="0.62"/>
<line x1="172.96" y1="405.8" x2="172.96" y2="394.6" stroke="#20209a" stroke-width="1.5" />
<polygon points="171.6,395.2 174.3,395.2 172.96,392.2" fill="#20209a" />
<line x1="172.96" y1="405.8" x2="182.8" y2="407.9" stroke="#e01515" stroke-width="1.1" />
<polygon points="182.2,406.5 185.0,408.5 181.8,409.3" fill="#e01515" />
<line x1="172.96" y1="405.8" x2="178.6" y2="402.6" stroke="#18c818" stroke-width="1.1" />
<polygon points="177.8,401.5 180.6,401.5 179.0,403.9" fill="#18c818" />
<circle cx="172.96" cy="405.8" r="0.95" fill="#e0d020" />
<polygon points="670.2,65.8 695.6,71.9 695.6,99.9 670.2,94.3" fill="#d2d2d2" />
<polygon points="695.6,71.9 713,62.2 712.7,90.7 695.6,99.9" fill="#c4c4c4" />
<polygon points="670.2,65.8 687,56.6 713,62.2 695.6,71.9" fill="#cbcbcb" />
<polyline points="676.296,67.264 676.296,95.644" fill="none" stroke="#787878" stroke-width="0.6" />
<polyline points="670.2,72.64 695.6,78.62" fill="none" stroke="#787878" stroke-width="0.6" />
<polyline points="689.504,70.436 689.504,98.556" fill="none" stroke="#787878" stroke-width="0.6" />
<polyline points="670.2,87.46 695.6,93.18" fill="none" stroke="#787878" stroke-width="0.6" />
<polyline points="670.2,65.8 695.6,71.9 695.6,99.9 670.2,94.3 670.2,65.8" fill="none" stroke="#9a9a9a" stroke-width="0.45" />
<polyline points="699.7760000000001,69.572 699.7040000000001,97.69200000000001" fill="none" stroke="#787878" stroke-width="0.6" />
<polyline points="695.6,78.62 712.928,69.04" fill="none" stroke="#787878" stroke-width="0.6" />
<polyline points="708.824,64.528 708.596,92.908" fill="none" stroke="#787878" stroke-width="0.6" />
<polyline points="695.6,93.18 712.772,83.86" fill="none" stroke="#787878" stroke-width="0.6" />
<polyline points="695.6,71.9 713,62.2 712.7,90.7 695.6,99.9 695.6,71.9" fill="none" stroke="#9a9a9a" stroke-width="0.45" />
<polyline points="674.2320000000001,63.592 699.7760000000001,69.572" fill="none" stroke="#787878" stroke-width="0.6" />
<polyline points="676.296,67.264 693.24,57.944" fill="none" stroke="#787878" stroke-width="0.6" />
<polyline points="682.968,58.808 708.824,64.528" fill="none" stroke="#787878" stroke-width="0.6" />
<polyline points="689.504,70.436 706.76,60.856" fill="none" stroke="#787878" stroke-width="0.6" />
<polyline points="670.2,65.8 687,56.6 713,62.2 695.6,71.9 670.2,65.8" fill="none" stroke="#9a9a9a" stroke-width="0.45" />
<text x="683.6" y="85.8" font-size="6.2" font-weight="bold" fill="#22b14c" text-anchor="middle">+Y</text>
<text x="0" y="0" font-size="5.6" font-weight="bold" fill="#e04848" text-anchor="middle" transform="translate(704.5,84.0) skewY(-29) scale(0.8,1)">-X</text>
<text x="0" y="0" font-size="4.2" font-weight="bold" fill="#4a4aa8" text-anchor="middle" transform="translate(691.8,65.8) rotate(14) scale(1,0.55)">-Z</text>
<g transform="translate(13.1,29.3) scale(1.4)" ><polygon points="-2.1,-2.9 0.9,-2.9 2.2,-1.6 2.2,2.9 -2.1,2.9" fill="#fbfbfb" stroke="#8c8c8c" stroke-width="0.45"/><polyline points="0.9,-2.9 0.9,-1.6 2.2,-1.6" fill="none" stroke="#8c8c8c" stroke-width="0.35" /><line x1="-1.2" y1="-0.3" x2="1.4" y2="-0.3" stroke="#9ab" stroke-width="0.4" /><path d="M-1.2,0.6 Q0,-1.2 1.3,0.4 Q0,2.2 -1.0,1.2" fill="none" stroke="#3f74c8" stroke-width="0.8" /><rect x="-0.9" y="1.0" width="2.6" height="1.4" fill="#6d8fc8" /><polygon points="-1.90,-3.60 -1.63,-2.85 -0.91,-3.19 -1.25,-2.47 -0.50,-2.20 -1.25,-1.93 -0.91,-1.21 -1.63,-1.55 -1.90,-0.80 -2.17,-1.55 -2.89,-1.21 -2.55,-1.93 -3.30,-2.20 -2.55,-2.47 -2.89,-3.19 -2.17,-2.85" fill="#f6ea1e" stroke="#b8a820" stroke-width="0.25"/></g>
<g transform="translate(23.75,29.3) scale(1.4)" ><polygon points="-2.9,-1.6 -0.6,-1.6 0,-0.9 2.9,-0.9 2.9,2.8 -2.9,2.8" fill="#eee6a6" stroke="#cfc47a" stroke-width="0.4"/><polygon points="-2.9,0.2 2.9,0.2 2.9,2.8 -2.9,2.8" fill="#e9dd8e" /><rect x="0.9" y="-3.0" width="1.9" height="2.2" fill="#16a04c" rx="0.5"/></g>
<g transform="translate(34.4,29.3) scale(1.4)" ><rect x="-2.6" y="-3" width="5.2" height="6" fill="#1aa5e6" rx="1.3"/><text x="0" y="1.55" font-size="4.4" font-weight="bold" fill="#fff" text-anchor="middle">C</text></g>
<g transform="translate(45.6,29.3) scale(1.4)" ><rect x="-3" y="-3" width="4" height="4.8" fill="#1e9ee2" rx="0.7"/><circle cx="0.9" cy="1.0" r="2.2" fill="#3bb0ea" /><circle cx="0.9" cy="1.0" r="2.2" fill="none" stroke="#d8f0ff" stroke-width="0.3"/><line x1="-1.2" y1="1" x2="3" y2="1" stroke="#d8f0ff" stroke-width="0.3" /><path d="M0.9,-1.2 Q-0.4,1 0.9,3.2 Q2.2,1 0.9,-1.2" fill="none" stroke="#d8f0ff" stroke-width="0.3" /><line x1="-2.2" y1="-1.8" x2="-0.2" y2="-1.8" stroke="#d8f0ff" stroke-width="0.4" /></g>
<g transform="translate(57.25,29.3) scale(1.4)" ><rect x="-3" y="-1.0" width="6" height="3.9" fill="#78838e" rx="0.4"/><rect x="-3" y="0.4" width="6" height="0.5" fill="#c8ccd2" /><polygon points="-1.8,-1 -1.2,-2.6 1.4,-2.9 2.2,-1" fill="#c9a47e" /><polygon points="0.8,-1.2 2.4,-3 2.9,-2.2 1.8,-1" fill="#3a74c8" /></g>
<g transform="translate(68.1,29.3) scale(1.4)" ><rect x="-3" y="-3" width="6" height="6" fill="#6b6b6b" rx="0.5"/><rect x="-1.7" y="-3" width="3.4" height="2.2" fill="#e2e2e2" /><rect x="-1.9" y="0.5" width="3.8" height="2.5" fill="#9e9e9e" /><rect x="-0.9" y="1.3" width="1.8" height="0.9" fill="#e8e8e8" /></g>
<g transform="translate(79,29.3) scale(1.4)" ><rect x="-1.9" y="-2.9" width="3.8" height="2.2" fill="#8a8a8a" /><rect x="-3" y="-1.0" width="6" height="3.0" fill="#555" rx="0.5"/><rect x="-1.9" y="1.1" width="3.8" height="1.9" fill="#dadada" stroke="#777" stroke-width="0.3"/><rect x="-2.4" y="-0.3" width="4.8" height="0.5" fill="#888" /></g>
<g transform="translate(87.2,29.3) scale(1.15)" ><polygon points="-1.35,-0.7 1.35,-0.7 0,0.9" fill="#1a1a1a" /></g>
<g transform="translate(96.5,29.3) scale(1.4)" ><polygon points="-2.1,-2.9 0.9,-2.9 2.2,-1.6 2.2,2.9 -2.1,2.9" fill="#f3f3f3" stroke="#8c8c8c" stroke-width="0.45"/><polyline points="0.9,-2.9 0.9,-1.6 2.2,-1.6" fill="none" stroke="#8c8c8c" stroke-width="0.35" /><line x1="-1.2" y1="-0.2" x2="1.4" y2="-0.2" stroke="#aaa" stroke-width="0.35" /><line x1="-1.2" y1="0.9" x2="1.4" y2="0.9" stroke="#aaa" stroke-width="0.35" /><line x1="-1.2" y1="2.0" x2="1.4" y2="2.0" stroke="#aaa" stroke-width="0.35" /><polygon points="-1.60,-3.70 -1.31,-2.89 -0.54,-3.26 -0.91,-2.49 -0.10,-2.20 -0.91,-1.91 -0.54,-1.14 -1.31,-1.51 -1.60,-0.70 -1.89,-1.51 -2.66,-1.14 -2.29,-1.91 -3.10,-2.20 -2.29,-2.49 -2.66,-3.26 -1.89,-2.89" fill="#f6ea1e" stroke="#b8a820" stroke-width="0.25"/></g>
<g transform="translate(108.1,29.3) scale(1.4)" ><polygon points="-2.1,-2.9 0.9,-2.9 2.2,-1.6 2.2,2.9 -2.1,2.9" fill="#e9e9e9" stroke="#a9a9a9" stroke-width="0.45"/><polyline points="0.9,-2.9 0.9,-1.6 2.2,-1.6" fill="none" stroke="#a9a9a9" stroke-width="0.35" /><line x1="-1.2" y1="-0.2" x2="1.4" y2="-0.2" stroke="#bbb" stroke-width="0.35" /><line x1="-1.2" y1="0.9" x2="1.4" y2="0.9" stroke="#bbb" stroke-width="0.35" /><line x1="-1.2" y1="2.0" x2="1.4" y2="2.0" stroke="#bbb" stroke-width="0.35" /></g>
<line x1="114.6" y1="25.1" x2="114.6" y2="33.5" stroke="#c9c9c9" stroke-width="0.55" />
<g transform="translate(120.9,29.3) scale(1.4)" ><path d="M-2.3,0.2 Q0.2,-2.2 2.6,1.2" fill="none" stroke="#a9a9a9" stroke-width="0.8" /><polygon points="-3,-1.4 -2.9,1.2 -0.8,0.3" fill="#a9a9a9" /></g>
<g transform="translate(129,29.3) scale(1.15)" ><polygon points="-1.35,-0.7 1.35,-0.7 0,0.9" fill="#8a8a8a" /></g>
<g transform="translate(137.75,29.3) scale(1.4)" ><path d="M2.3,0.2 Q-0.2,-2.2 -2.6,1.2" fill="none" stroke="#a9a9a9" stroke-width="0.8" /><polygon points="3,-1.4 2.9,1.2 0.8,0.3" fill="#a9a9a9" /></g>
<g transform="translate(145.9,29.3) scale(1.15)" ><polygon points="-1.35,-0.7 1.35,-0.7 0,0.9" fill="#8a8a8a" /></g>
<line x1="150.25" y1="25.1" x2="150.25" y2="33.5" stroke="#c9c9c9" stroke-width="0.55" />
<rect x="152.5" y="24.4" width="10.599999999999994" height="9.8" fill="#cce4fa" rx="0.8"/>
<rect x="163.5" y="24.4" width="10.5" height="9.8" fill="#cce4fa" rx="0.8"/>
<g transform="translate(157.9,29.3) scale(1.4)" ><rect x="-2.4" y="-2.9" width="4.8" height="5.8" fill="#dedede" stroke="#666" stroke-width="0.45"/><rect x="-2.4" y="-2.9" width="4.8" height="1.1" fill="#2d3f9e" /><rect x="-2.2" y="-1.7" width="1.5" height="4.4" fill="#8e8e8e" /></g>
<g transform="translate(168.5,29.3) scale(1.4)" ><rect x="-2.9" y="-2.9" width="5.8" height="5.8" fill="#dedede" stroke="#666" stroke-width="0.45"/><rect x="-2.9" y="-2.9" width="5.8" height="1.1" fill="#2d3f9e" /><rect x="-2.7" y="1.2" width="5.4" height="1.4" fill="#aaa" /></g>
<g transform="translate(179.4,29.3) scale(1.4)" ><line x1="-2.7" y1="-2.9" x2="-2.7" y2="2.9" stroke="#444" stroke-width="0.6" /><line x1="-2.7" y1="0.3" x2="2.9" y2="0.3" stroke="#555" stroke-width="0.5" /><polyline points="-2.7,0.3 -0.8,1.2 0.9,-0.6 2.9,-2.4" fill="none" stroke="#4a90e2" stroke-width="0.6" /></g>
<g transform="translate(191,29.3) scale(1.4)" ><rect x="-1.9" y="-2.9" width="3.8" height="5.8" fill="#e4e4e4" stroke="#9c9c9c" stroke-width="0.45"/><rect x="-1.9" y="-2.9" width="3.8" height="1" fill="#b4b4b4" /><rect x="-1.3" y="-1.2" width="1.2" height="3.4" fill="#cfcfcf" /></g>
<g transform="translate(201.9,29.3) scale(1.4)" ><rect x="-2.9" y="-2.9" width="5.8" height="5.8" fill="#ececec" stroke="#555" stroke-width="0.5"/><rect x="-2.9" y="-2.9" width="5.8" height="1.2" fill="#2d3f9e" /><polyline points="-2,1.8 -0.6,-0.4 0.4,0.8 1.2,0 2.2,1.8" fill="none" stroke="#444" stroke-width="0.6" /><line x1="-2" y1="2.2" x2="2.2" y2="2.2" stroke="#666" stroke-width="0.4" /></g>
<g transform="translate(213.1,29.3) scale(1.4)" ><rect x="-2.3" y="-2.9" width="4.6" height="3" fill="#c2c6d6" stroke="#667" stroke-width="0.35"/><rect x="-2.3" y="-2.9" width="4.6" height="1.0" fill="#2d3f9e" /><rect x="-2.7" y="0.1" width="5.4" height="2.8" fill="#333" /><line x1="-2.2" y1="1.5" x2="2.2" y2="1.5" stroke="#ccc" stroke-width="0.4" stroke-dasharray="0.8 0.5"/></g>
<g transform="translate(224.4,29.3) scale(1.4)" ><polygon points="0,-2.9 2.7,-1.4 0,0.1 -2.7,-1.4" fill="#9a9a9a" /><polygon points="-2.7,-1.4 0,0.1 0,2.9 -2.7,1.4" fill="#666" /><polygon points="0,0.1 2.7,-1.4 2.7,1.4 0,2.9" fill="#4e4e4e" /><polygon points="0.2,-2.9 2.7,-2.0 2.7,-1.0 0.2,-1.9" fill="#2d3f9e" /></g>
<g transform="translate(235.25,29.3) scale(1.4)" ><rect x="-2.1" y="-2.9" width="4.2" height="5.8" fill="#e8ecf4" stroke="#666" stroke-width="0.45"/><rect x="-2.1" y="-2.9" width="4.2" height="1.3" fill="#2d3f9e" /><line x1="-1.6" y1="-0.6" x2="1.6" y2="-0.6" stroke="#5a8edc" stroke-width="0.5" /><line x1="-1.6" y1="0.6" x2="1.6" y2="0.6" stroke="#5a8edc" stroke-width="0.5" /><line x1="-1.6" y1="1.8" x2="1.6" y2="1.8" stroke="#5a8edc" stroke-width="0.5" /></g>
<g transform="translate(246.5,29.3) scale(1.4)" ><path d="M-3,0.4 Q0,-3.6 3,0.4" fill="none" stroke="#6e6e6e" stroke-width="0.9" /><circle cx="0" cy="0.5" r="1.5" fill="#7a7a7a" /><circle cx="0" cy="0.5" r="0.6" fill="#eee" /><polygon points="0.6,1.6 2.4,1.2 1.8,2.9" fill="#fff" stroke="#888" stroke-width="0.3"/></g>
<line x1="253.6" y1="25.1" x2="253.6" y2="33.5" stroke="#c9c9c9" stroke-width="0.55" />
<g transform="translate(261.9,29.3) scale(1.4)" ><polygon points="-1.0,-2.6 2.9,-2.6 1.0,2.6 -2.9,2.6" fill="#f4e41a" stroke="#666" stroke-width="0.4"/><line x1="-0.4" y1="2.4" x2="1.6" y2="-2.4" stroke="#c8b810" stroke-width="0.5" /><circle cx="-1.0" cy="-2.6" r="0.7" fill="#e21d1d" /><circle cx="2.9" cy="-2.6" r="0.7" fill="#e21d1d" /><circle cx="-2.9" cy="2.6" r="0.7" fill="#e21d1d" /><polygon points="1.2,0.8 2.6,2.4 1.2,2.6" fill="#fff" stroke="#555" stroke-width="0.3"/></g>
<g transform="translate(270.6,29.3) scale(1.15)" ><polygon points="-1.35,-0.7 1.35,-0.7 0,0.9" fill="#1a1a1a" /></g>
<g transform="translate(279,29.3) scale(1.4)" ><rect x="-2.9" y="-2.4" width="5.8" height="4.9" fill="#ead924" stroke="#5a5a30" stroke-width="0.5"/><rect x="-1.9" y="-1.3" width="1.8" height="1.3" fill="#fff7a0" stroke="#555" stroke-width="0.3"/><rect x="0.5" y="-0.3" width="1.6" height="1.7" fill="#fff7a0" stroke="#555" stroke-width="0.3"/><line x1="-1.9" y1="1.2" x2="0" y2="1.2" stroke="#555" stroke-width="0.4" /></g>
<line x1="286.25" y1="25.1" x2="286.25" y2="33.5" stroke="#c9c9c9" stroke-width="0.55" />
<g transform="translate(294.75,29.3) scale(1.4)" ><rect x="-1.7" y="-1.6" width="1.3" height="4.2" fill="#8ebcf2" /><line x1="-3" y1="2.7" x2="3" y2="2.7" stroke="#555" stroke-width="0.6" /><rect x="0.2" y="-3" width="2.9" height="2.4" fill="#eef0f8" stroke="#3a4a8a" stroke-width="0.35"/><rect x="0.2" y="-3" width="2.9" height="0.9" fill="#2d3f9e" /><polygon points="-1.40,-3.50 -1.11,-2.69 -0.34,-3.06 -0.71,-2.29 0.10,-2.00 -0.71,-1.71 -0.34,-0.94 -1.11,-1.31 -1.40,-0.50 -1.69,-1.31 -2.46,-0.94 -2.09,-1.71 -2.90,-2.00 -2.09,-2.29 -2.46,-3.06 -1.69,-2.69" fill="#f6ea1e" stroke="#b8a820" stroke-width="0.25"/></g>
<g transform="translate(306.25,29.3) scale(1.4)" ><rect x="-1.7" y="-1.6" width="1.3" height="4.2" fill="#8ebcf2" /><polygon points="-1.7,-1.6 -1.0,-2.6 -0.4,-1.6" fill="#8ebcf2" /><line x1="-3" y1="2.7" x2="3" y2="2.7" stroke="#555" stroke-width="0.6" /><rect x="0.2" y="-3" width="2.9" height="2.4" fill="#eef0f8" stroke="#3a4a8a" stroke-width="0.35"/><rect x="0.2" y="-3" width="2.9" height="0.9" fill="#2d3f9e" /></g>
<g transform="translate(429.8,29.3) scale(1.1)" ><polyline points="-1.3,-0.6 0,0.7 1.3,-0.6" fill="none" stroke="#666" stroke-width="0.45" /></g>
<g transform="translate(437,29.3) scale(1.35)" ><polygon points="0.7,-1.1 0.7,1.1 -0.7,0" fill="#444" /></g>
<g transform="translate(443.75,29.3) scale(1.35)" ><polygon points="-0.7,-1.2 -0.7,1.2 0.8,0" fill="#111" /></g>
<g transform="translate(453.5,29.3) scale(1.4)" ><polygon points="-3,-2.3 1.7,-2.3 -0.1,0.1 -0.1,2.9 -1.3,2.1 -1.3,0.1" fill="#3b78d2" /><line x1="0.6" y1="-2.9" x2="2.9" y2="-0.5" stroke="#e21d1d" stroke-width="0.9" /><line x1="2.9" y1="-2.9" x2="0.6" y2="-0.5" stroke="#e21d1d" stroke-width="0.9" /></g>
<g transform="translate(461.5,29.3) scale(1.15)" ><polygon points="-1.35,-0.7 1.35,-0.7 0,0.9" fill="#1a1a1a" /></g>
<g transform="translate(470.25,29.3) scale(1.4)" ><path d="M-1.4,2.8 Q-3,0.4 -1.2,-1.6" fill="none" stroke="#2aa464" stroke-width="1.0" /><line x1="-0.6" y1="0.6" x2="-0.6" y2="2.6" stroke="#888" stroke-width="0.5" /><circle cx="1.0" cy="-1.5" r="1.3" fill="#4556a4" /><circle cx="0.6" cy="-1.9" r="0.5" fill="#8fa0e0" /></g>
<g transform="translate(481.9,29.3) scale(1.4)" ><line x1="-2.8" y1="-2.3" x2="-0.4" y2="-2.3" stroke="#666" stroke-width="0.5" stroke-dasharray="0.7 0.5"/><path d="M-1.8,-2.3 Q-1.4,1.2 -0.4,2.8" fill="none" stroke="#777" stroke-width="0.6" /><path d="M0.8,-2.3 Q0.2,1.2 -0.4,2.8" fill="none" stroke="#777" stroke-width="0.6" /><circle cx="1.9" cy="-2.0" r="1.15" fill="#4556a4" /></g>
<g transform="translate(492.75,29.3) scale(1.4)" ><polygon points="-2.6,2.4 -1.9,-1.8 -1.0,2.4" fill="#4b92e4" /><line x1="-3" y1="2.6" x2="3" y2="2.6" stroke="#555" stroke-width="0.6" /><circle cx="1.5" cy="-1.8" r="1.25" fill="#4556a4" /><circle cx="1.1" cy="-2.2" r="0.5" fill="#8fa0e0" /></g>
<g transform="translate(504,29.3) scale(1.4)" ><line x1="-2.8" y1="-2.3" x2="2.8" y2="-2.3" stroke="#555" stroke-width="0.6" stroke-dasharray="0.8 0.6"/><path d="M-1.6,-2.3 Q-1.4,1 -0.6,2.6" fill="none" stroke="#888" stroke-width="0.6" /><line x1="-3" y1="2.7" x2="3" y2="2.7" stroke="#aaa" stroke-width="0.5" /></g>
<g transform="translate(515,29.3) scale(1.4)" ><polygon points="0,-2.9 2.7,-1.4 0,0.1 -2.7,-1.4" fill="#dedede" stroke="#8c8c8c" stroke-width="0.3"/><polygon points="-2.7,-1.4 0,0.1 0,2.9 -2.7,1.4" fill="#c0c0c0" stroke="#8c8c8c" stroke-width="0.3"/><polygon points="0,0.1 2.7,-1.4 2.7,1.4 0,2.9" fill="#a8a8a8" stroke="#8c8c8c" stroke-width="0.3"/><line x1="-1.2" y1="-0.6" x2="-1.2" y2="2.2" stroke="#999" stroke-width="0.3" /></g>
<g transform="translate(525.6,29.3) scale(1.4)" ><rect x="-2.7" y="-1.6" width="4.4" height="4.5" fill="#3d78c6" /><line x1="-1.6" y1="-1.6" x2="-1.6" y2="2.9" stroke="#7fb0ee" stroke-width="0.5" /><line x1="-0.3" y1="-1.6" x2="-0.3" y2="2.9" stroke="#7fb0ee" stroke-width="0.5" /><line x1="0.9" y1="-1.6" x2="0.9" y2="2.9" stroke="#7fb0ee" stroke-width="0.5" /><circle cx="1.9" cy="-2.0" r="1.3" fill="#5f93e4" /><circle cx="1.9" cy="-2.0" r="0.5" fill="#dfe9fb" /></g>
<g transform="translate(533.75,29.3) scale(1.15)" ><polygon points="-1.35,-0.7 1.35,-0.7 0,0.9" fill="#1a1a1a" /></g>
<g transform="translate(542.75,29.3) scale(1.4)" ><line x1="-3" y1="1.4" x2="0.2" y2="0.5" stroke="#2849a8" stroke-width="1.2" /><line x1="0.2" y1="0.5" x2="2.9" y2="1.0" stroke="#d42020" stroke-width="1.2" /><circle cx="0.7" cy="-1.6" r="1.2" fill="#4556a4" /><circle cx="0.3" cy="-2.0" r="0.45" fill="#8fa0e0" /></g>
<g transform="translate(554,29.3) scale(1.4)" ><line x1="-2.8" y1="-2.0" x2="2.8" y2="-2.0" stroke="#666" stroke-width="0.6" stroke-dasharray="0.8 0.6"/><polyline points="-2.9,1.8 -0.2,1.8 -0.2,0.5 2.9,0.5" fill="none" stroke="#8a8a8a" stroke-width="0.9" /></g>
<line x1="560.6" y1="25.1" x2="560.6" y2="33.5" stroke="#c9c9c9" stroke-width="0.55" />
<g transform="translate(567.75,29.3) scale(1.4)" ><line x1="-3" y1="0.8" x2="0.6" y2="0.8" stroke="#2849a8" stroke-width="1.2" /><rect x="0.3" y="-3" width="2.7" height="3.0" fill="#eef0f8" stroke="#3a4a8a" stroke-width="0.35"/><rect x="0.3" y="-3" width="2.7" height="0.9" fill="#2d3f9e" /><circle cx="1.6" cy="1.9" r="1.1" fill="#79a3ec" /><circle cx="1.0" cy="1.3" r="0.6" fill="#e21d1d" /></g>
<g transform="translate(578.75,29.3) scale(1.4)" ><rect x="-2.7" y="-1.6" width="5.4" height="3.2" fill="#eadb5a" /><line x1="-2.9" y1="-2.7" x2="-2.9" y2="2.7" stroke="#333" stroke-width="0.8" /><line x1="2.9" y1="-2.7" x2="2.9" y2="2.7" stroke="#333" stroke-width="0.8" /><line x1="-2.4" y1="0" x2="2.4" y2="0" stroke="#3a60c0" stroke-width="0.7" stroke-dasharray="0.8 0.5"/><line x1="-2.9" y1="1.7" x2="2.9" y2="1.7" stroke="#555" stroke-width="0.4" /></g>
<g transform="translate(586.9,29.3) scale(1.15)" ><polygon points="-1.35,-0.7 1.35,-0.7 0,0.9" fill="#1a1a1a" /></g>
<line x1="592.25" y1="25.1" x2="592.25" y2="33.5" stroke="#c9c9c9" stroke-width="0.55" />
<g transform="translate(600,29.3) scale(1.4)" ><polygon points="-0.6,-2.8 0.4,-2.4 1.0,-0.6 2.6,-1.4 2.2,0.4 2.8,1.2 1.4,1.6 1.6,2.9 -2.0,2.8 -2.9,0.6 -1.6,0.8 -1.2,-1.2" fill="#6d6d6d" /></g>
<g transform="translate(611.5,29.3) scale(1.4)" ><circle cx="-0.9" cy="-0.7" r="1.8" fill="#f4f4f4" stroke="#555" stroke-width="0.7"/><line x1="0.5" y1="0.8" x2="2.7" y2="2.9" stroke="#555" stroke-width="0.9" /><line x1="0.2" y1="-2.9" x2="2.9" y2="-0.4" stroke="#e21d1d" stroke-width="0.9" /><line x1="2.9" y1="-2.9" x2="0.2" y2="-0.4" stroke="#e21d1d" stroke-width="0.9" /></g>
<g transform="translate(621.9,29.3) scale(1.4)" ><polygon points="0,-2.9 2.7,-1.4 0,0.1 -2.7,-1.4" fill="#d6dcf6" stroke="#8896cc" stroke-width="0.3"/><polygon points="-2.7,-1.4 0,0.1 0,2.9 -2.7,1.4" fill="#b6c2ee" stroke="#8896cc" stroke-width="0.3"/><polygon points="0,0.1 2.7,-1.4 2.7,1.4 0,2.9" fill="#9eaee6" stroke="#8896cc" stroke-width="0.3"/><line x1="-1.3" y1="-0.6" x2="-1.3" y2="2.2" stroke="#8896cc" stroke-width="0.3" /><line x1="1.3" y1="-0.6" x2="1.3" y2="2.2" stroke="#8896cc" stroke-width="0.3" /></g>
<g transform="translate(633.1,29.3) scale(1.4)" ><polygon points="0,-2.9 2.7,-1.4 0,0.1 -2.7,-1.4" fill="#d6dcf6" stroke="#8896cc" stroke-width="0.3"/><polygon points="-2.7,-1.4 0,0.1 0,2.9 -2.7,1.4" fill="#b6c2ee" stroke="#8896cc" stroke-width="0.3"/><polygon points="0,0.1 2.7,-1.4 2.7,1.4 0,2.9" fill="#9eaee6" stroke="#8896cc" stroke-width="0.3"/><polygon points="0.2,-1.2 1.6,-2.4 2.2,-1.6 0.8,-0.2" fill="#f0d040" /></g>
<g transform="translate(644,29.3) scale(1.4)" ><polygon points="-2.9,-0.4 0.6,-2.8 2.9,-2.2 2.6,0.8 -0.8,2.9 -2.8,2.2" fill="#c4cdf0" stroke="#8896cc" stroke-width="0.35"/><polyline points="-2.9,-0.4 -0.6,0.2 2.9,-2.2" fill="none" stroke="#8896cc" stroke-width="0.3" /><line x1="-0.6" y1="0.2" x2="-0.8" y2="2.9" stroke="#8896cc" stroke-width="0.3" /></g>
<line x1="649.8" y1="25.1" x2="649.8" y2="33.5" stroke="#c9c9c9" stroke-width="0.55" />
<g transform="translate(656.1,29.3) scale(1.4)" ><line x1="-1.4" y1="-2.4" x2="1.8" y2="-2.4" stroke="#16a83a" stroke-width="0.7" /><polygon points="1.4,-3.2 2.9,-2.4 1.4,-1.6" fill="#16a83a" /><line x1="-2.1" y1="-1.6" x2="-2.1" y2="1.8" stroke="#1f4fe0" stroke-width="0.7" /><circle cx="-2.1" cy="2.2" r="0.85" fill="#1f4fe0" /><circle cx="-2.1" cy="-2.4" r="0.9" fill="#f08a1c" /><text x="1.0" y="2.6" font-size="3.3" font-weight="bold" fill="#111" text-anchor="middle">X</text></g>
<g transform="translate(667.8,29.3) scale(1.4)" ><line x1="-1.8" y1="-2.4" x2="1.4" y2="-2.4" stroke="#e21d1d" stroke-width="0.7" /><polygon points="-1.6,-3.2 -3.0,-2.4 -1.6,-1.6" fill="#e21d1d" /><line x1="2.1" y1="-1.6" x2="2.1" y2="1.8" stroke="#1f4fe0" stroke-width="0.7" /><circle cx="2.1" cy="2.2" r="0.85" fill="#1f4fe0" /><circle cx="2.1" cy="-2.4" r="0.9" fill="#8bc34a" /><text x="-1.0" y="2.6" font-size="3.3" font-weight="bold" fill="#111" text-anchor="middle">Y</text></g>
<g transform="translate(677.8,29.3) scale(1.4)" ><line x1="-2.1" y1="-1.6" x2="-2.1" y2="1.6" stroke="#16a83a" stroke-width="0.7" /><polygon points="-2.9,-1.4 -2.1,-3.0 -1.3,-1.4" fill="#16a83a" /><line x1="-1.2" y1="2.3" x2="1.8" y2="2.3" stroke="#e21d1d" stroke-width="0.7" /><polygon points="1.4,1.5 2.9,2.3 1.4,3.1" fill="#e21d1d" /><circle cx="-2.1" cy="2.3" r="0.9" fill="#1f4fe0" /><text x="1.4" y="0.2" font-size="3.3" font-weight="bold" fill="#111" text-anchor="middle">Z</text></g>
<g transform="translate(688.3,29.3) scale(1.4)" ><line x1="-1.4" y1="-2.4" x2="1.4" y2="-2.4" stroke="#16a83a" stroke-width="0.7" /><polygon points="-1.4,-3.2 -2.9,-2.4 -1.4,-1.6" fill="#16a83a" /><line x1="2.1" y1="-1.6" x2="2.1" y2="1.8" stroke="#1f4fe0" stroke-width="0.7" /><circle cx="2.1" cy="2.2" r="0.85" fill="#1f4fe0" /><circle cx="2.1" cy="-2.4" r="0.9" fill="#e21d1d" /><text x="-1.0" y="2.6" font-size="3.0" font-weight="bold" fill="#111" text-anchor="middle">-X</text></g>
<g transform="translate(695.8,29.3) scale(1.15)" ><polygon points="-1.35,-0.7 1.35,-0.7 0,0.9" fill="#1a1a1a" /></g>
<g transform="translate(703.3,29.3) scale(1.4)" ><rect x="-2.9" y="-3" width="3.4" height="2.6" fill="#f2ec66" stroke="#a8a860" stroke-width="0.3"/><line x1="2.7" y1="-2.8" x2="-0.2" y2="0.6" stroke="#444" stroke-width="1.0" /><line x1="0.4" y1="-1.6" x2="1.8" y2="0.2" stroke="#444" stroke-width="0.6" /><polyline points="-0.8,1.2 0.8,1.2 0.8,2.4" fill="none" stroke="#555" stroke-width="0.6" /><line x1="-2.8" y1="2.7" x2="2.8" y2="2.7" stroke="#444" stroke-width="0.8" /></g>
<g transform="translate(711.1,29.3) scale(1.15)" ><polygon points="-1.35,-0.7 1.35,-0.7 0,0.9" fill="#1a1a1a" /></g>
<g transform="translate(718.4,29.3) scale(1.0)" ><line x1="-1.2" y1="-0.6" x2="1.2" y2="-0.6" stroke="#b4b4b4" stroke-width="0.4" /><line x1="-1.2" y1="0.4" x2="1.2" y2="0.4" stroke="#b4b4b4" stroke-width="0.4" /></g>
<g transform="translate(718.4,41.900000000000006) scale(1.0)" ><line x1="-1.2" y1="-0.6" x2="1.2" y2="-0.6" stroke="#b4b4b4" stroke-width="0.4" /><line x1="-1.2" y1="0.4" x2="1.2" y2="0.4" stroke="#b4b4b4" stroke-width="0.4" /></g>
<g transform="translate(562,18.6) scale(1.0)" ><rect x="-2.4" y="-1.8" width="4.8" height="3.6" fill="#ededed" stroke="#a8a8a8" stroke-width="0.4"/><line x1="-1.4" y1="-0.6" x2="1.4" y2="-0.6" stroke="#aaa" stroke-width="0.4" /><line x1="-1.4" y1="0.6" x2="0.6" y2="0.6" stroke="#aaa" stroke-width="0.4" /><rect x="-2.9" y="-2.6" width="2" height="1.6" fill="#ddd" stroke="#aaa" stroke-width="0.3"/></g>
<g transform="translate(709.8,18.6) scale(1.0)" ><rect x="-1.7" y="-0.9" width="2.6" height="2.6" fill="none" stroke="#222" stroke-width="0.55"/><polyline points="-0.7,-0.9 -0.7,-1.9 1.9,-1.9 1.9,0.7 0.9,0.7" fill="none" stroke="#222" stroke-width="0.55" /></g>
<g transform="translate(135,53.3) scale(1.0)" ><rect x="-1.6" y="-0.8" width="2.4" height="2.4" fill="none" stroke="#333" stroke-width="0.5"/><polyline points="-0.7,-0.8 -0.7,-1.7 1.7,-1.7 1.7,0.7 0.8,0.7" fill="none" stroke="#333" stroke-width="0.5" /></g>
<g transform="translate(10.3,7.4) scale(1.15)" ><circle cx="0" cy="0.2" r="2.9" fill="#d9a520" /><polygon points="-3,-0.8 0.4,-3.2 3.2,-1.8 0,0.4" fill="#2c3f86" /><circle cx="-0.2" cy="1.0" r="1.2" fill="#f3d66a" /><line x1="2.6" y1="-1.6" x2="2.8" y2="0.8" stroke="#2c3f86" stroke-width="0.4" /></g>
<g transform="translate(6.2,18.5) scale(1.1)" ><rect x="-3.2" y="-2.7" width="6.4" height="5.4" fill="#20307e" /><line x1="-3.2" y1="-0.9" x2="3.2" y2="-0.9" stroke="#fff" stroke-width="0.45" /><line x1="-3.2" y1="0.9" x2="3.2" y2="0.9" stroke="#fff" stroke-width="0.45" /><line x1="-0.6" y1="-2.7" x2="-0.6" y2="-0.9" stroke="#fff" stroke-width="0.45" /><line x1="0.8" y1="0.9" x2="0.8" y2="2.7" stroke="#fff" stroke-width="0.45" /></g>
<g transform="translate(11,41.7) scale(1.4)" ><polygon points="-0.70,-2.90 -0.34,-1.88 0.64,-2.34 0.18,-1.36 1.20,-1.00 0.18,-0.64 0.64,0.34 -0.34,-0.12 -0.70,0.90 -1.06,-0.12 -2.04,0.34 -1.58,-0.64 -2.60,-1.00 -1.58,-1.36 -2.04,-2.34 -1.06,-1.88" fill="#f6ea1e" stroke="#b8a820" stroke-width="0.25"/><circle cx="1.0" cy="1.1" r="0.8" fill="#e21d1d" /></g>
<g transform="translate(20.4,41.7) scale(1.15)" ><polygon points="-1.35,-0.7 1.35,-0.7 0,0.9" fill="#1a1a1a" /></g>
<g transform="translate(28.1,41.7) scale(1.4)" ><line x1="-2.4" y1="2.6" x2="2.6" y2="-2.4" stroke="#333" stroke-width="0.6" /><circle cx="-2.4" cy="2.6" r="0.7" fill="#e21d1d" /><circle cx="2.6" cy="-2.4" r="0.7" fill="#e21d1d" /><polygon points="-1.50,-3.40 -1.19,-2.54 -0.37,-2.93 -0.76,-2.11 0.10,-1.80 -0.76,-1.49 -0.37,-0.67 -1.19,-1.06 -1.50,-0.20 -1.81,-1.06 -2.63,-0.67 -2.24,-1.49 -3.10,-1.80 -2.24,-2.11 -2.63,-2.93 -1.81,-2.54" fill="#f6ea1e" stroke="#b8a820" stroke-width="0.25"/></g>
<g transform="translate(40.6,41.7) scale(1.4)" ><line x1="-2.6" y1="2.8" x2="2.2" y2="-2.4" stroke="#6a9fe8" stroke-width="1.1" /><circle cx="-2.6" cy="2.8" r="0.7" fill="#e21d1d" /><circle cx="2.4" cy="-2.6" r="0.7" fill="#e21d1d" /><polygon points="-2.00,-3.50 -1.69,-2.64 -0.87,-3.03 -1.26,-2.21 -0.40,-1.90 -1.26,-1.59 -0.87,-0.77 -1.69,-1.16 -2.00,-0.30 -2.31,-1.16 -3.13,-0.77 -2.74,-1.59 -3.60,-1.90 -2.74,-2.21 -3.13,-3.03 -2.31,-2.64" fill="#f6ea1e" stroke="#b8a820" stroke-width="0.25"/><line x1="1.4" y1="1.2" x2="2.8" y2="1.2" stroke="#3b78d2" stroke-width="0.4" /><line x1="2.1" y1="1.2" x2="2.1" y2="2.9" stroke="#3b78d2" stroke-width="0.4" /><line x1="1.4" y1="2.9" x2="2.8" y2="2.9" stroke="#3b78d2" stroke-width="0.4" /></g>
<g transform="translate(48.1,41.7) scale(1.15)" ><polygon points="-1.35,-0.7 1.35,-0.7 0,0.9" fill="#1a1a1a" /></g>
<g transform="translate(57.25,41.7) scale(1.4)" ><polyline points="-1.0,-2.4 2.3,-2.4 2.3,0.6 -0.6,2.8" fill="none" stroke="#333" stroke-width="0.6" /><circle cx="2.3" cy="-2.4" r="0.7" fill="#e21d1d" /><circle cx="2.3" cy="0.6" r="0.7" fill="#e21d1d" /><circle cx="-0.6" cy="2.8" r="0.7" fill="#e21d1d" /><polygon points="-2.00,-3.50 -1.69,-2.64 -0.87,-3.03 -1.26,-2.21 -0.40,-1.90 -1.26,-1.59 -0.87,-0.77 -1.69,-1.16 -2.00,-0.30 -2.31,-1.16 -3.13,-0.77 -2.74,-1.59 -3.60,-1.90 -2.74,-2.21 -3.13,-3.03 -2.31,-2.64" fill="#f6ea1e" stroke="#b8a820" stroke-width="0.25"/></g>
<g transform="translate(64.75,41.7) scale(1.15)" ><polygon points="-1.35,-0.7 1.35,-0.7 0,0.9" fill="#1a1a1a" /></g>
<line x1="69" y1="37.5" x2="69" y2="45.900000000000006" stroke="#c9c9c9" stroke-width="0.55" />
<g transform="translate(75.6,41.7) scale(1.4)" ><polygon points="-1.0,-0.4 1.0,-0.4 1.9,2.0 -1.9,2.0" fill="#1f9e40" /><rect x="-2.2" y="2.0" width="4.4" height="0.9" fill="#1a7a34" /><circle cx="0" cy="-0.6" r="1.0" fill="#222" /><polygon points="-0.80,-3.50 -0.53,-2.75 0.19,-3.09 -0.15,-2.37 0.60,-2.10 -0.15,-1.83 0.19,-1.11 -0.53,-1.45 -0.80,-0.70 -1.07,-1.45 -1.79,-1.11 -1.45,-1.83 -2.20,-2.10 -1.45,-2.37 -1.79,-3.09 -1.07,-2.75" fill="#f6ea1e" stroke="#b8a820" stroke-width="0.25"/></g>
<g transform="translate(86.6,41.7) scale(1.4)" ><rect x="-2.9" y="0.6" width="2.3" height="2.3" fill="#1f9e40" /><rect x="0.7" y="0.6" width="2.3" height="2.3" fill="#1f9e40" /><line x1="-1.8" y1="0.2" x2="1.9" y2="0.2" stroke="#222" stroke-width="0.6" /><line x1="-1.8" y1="-0.4" x2="-1.8" y2="0.8" stroke="#222" stroke-width="0.5" /><line x1="1.9" y1="-0.4" x2="1.9" y2="0.8" stroke="#222" stroke-width="0.5" /><polygon points="-0.90,-3.50 -0.61,-2.69 0.16,-3.06 -0.21,-2.29 0.60,-2.00 -0.21,-1.71 0.16,-0.94 -0.61,-1.31 -0.90,-0.50 -1.19,-1.31 -1.96,-0.94 -1.59,-1.71 -2.40,-2.00 -1.59,-2.29 -1.96,-3.06 -1.19,-2.69" fill="#f6ea1e" stroke="#b8a820" stroke-width="0.25"/></g>
<g transform="translate(97.9,41.7) scale(1.4)" ><polygon points="-2.9,0.6 1.4,0.6 2.9,2.6 -1.4,2.6" fill="#2ea860" /><polygon points="-2.3,-0.5 2.0,-0.5 2.6,0.7 -2.9,0.7" fill="#6ea4e4" /><polygon points="-1.20,-3.60 -0.91,-2.79 -0.14,-3.16 -0.51,-2.39 0.30,-2.10 -0.51,-1.81 -0.14,-1.04 -0.91,-1.41 -1.20,-0.60 -1.49,-1.41 -2.26,-1.04 -1.89,-1.81 -2.70,-2.10 -1.89,-2.39 -2.26,-3.16 -1.49,-2.79" fill="#f6ea1e" stroke="#b8a820" stroke-width="0.25"/></g>
<line x1="105.6" y1="37.5" x2="105.6" y2="45.900000000000006" stroke="#c9c9c9" stroke-width="0.55" />
<g transform="translate(112.75,41.7) scale(1.4)" ><polygon points="-2.2,-0.6 2.7,-0.6 2.7,2.2 -2.2,2.2" fill="#6ea4e4" stroke="#3b6ab8" stroke-width="0.3"/><circle cx="2.7" cy="2.4" r="0.7" fill="#e21d1d" /><circle cx="-2.2" cy="2.4" r="0.55" fill="#e21d1d" /><polygon points="-1.70,-3.50 -1.39,-2.64 -0.57,-3.03 -0.96,-2.21 -0.10,-1.90 -0.96,-1.59 -0.57,-0.77 -1.39,-1.16 -1.70,-0.30 -2.01,-1.16 -2.83,-0.77 -2.44,-1.59 -3.30,-1.90 -2.44,-2.21 -2.83,-3.03 -2.01,-2.64" fill="#f6ea1e" stroke="#b8a820" stroke-width="0.25"/></g>
<g transform="translate(120.9,41.7) scale(1.15)" ><polygon points="-1.35,-0.7 1.35,-0.7 0,0.9" fill="#1a1a1a" /></g>
<g transform="translate(129,41.7) scale(1.4)" ><polygon points="-1.4,-1.0 1.4,-1.8 2.8,0.4 0.2,2.6 -2.0,1.2" fill="#5d93dc" stroke="#3b6ab8" stroke-width="0.3"/><circle cx="1.4" cy="-1.8" r="0.65" fill="#e21d1d" /><circle cx="2.8" cy="0.4" r="0.65" fill="#e21d1d" /><circle cx="0.2" cy="2.6" r="0.65" fill="#e21d1d" /><circle cx="-2.0" cy="1.2" r="0.65" fill="#e21d1d" /><polygon points="-2.00,-3.60 -1.71,-2.79 -0.94,-3.16 -1.31,-2.39 -0.50,-2.10 -1.31,-1.81 -0.94,-1.04 -1.71,-1.41 -2.00,-0.60 -2.29,-1.41 -3.06,-1.04 -2.69,-1.81 -3.50,-2.10 -2.69,-2.39 -3.06,-3.16 -2.29,-2.79" fill="#f6ea1e" stroke="#b8a820" stroke-width="0.25"/></g>
<g transform="translate(137.25,41.7) scale(1.15)" ><polygon points="-1.35,-0.7 1.35,-0.7 0,0.9" fill="#1a1a1a" /></g>
<g transform="translate(146.25,41.7) scale(1.4)" ><rect x="-2.2" y="-2.2" width="4.4" height="4.4" fill="#fff" stroke="#3b6ab8" stroke-width="0.8"/><circle cx="-2.2" cy="-2.2" r="0.85" fill="#e21d1d" /><circle cx="2.2" cy="-2.2" r="0.85" fill="#e21d1d" /><circle cx="-2.2" cy="2.2" r="0.85" fill="#e21d1d" /><circle cx="2.2" cy="2.2" r="0.85" fill="#e21d1d" /></g>
<g transform="translate(153.75,41.7) scale(1.15)" ><polygon points="-1.35,-0.7 1.35,-0.7 0,0.9" fill="#1a1a1a" /></g>
<g transform="translate(162.25,41.7) scale(1.4)" ><polygon points="-0.4,-2.6 2.7,-1.6 1.2,2.6 -1.8,1.4" fill="#5d93dc" stroke="#3b6ab8" stroke-width="0.3"/><circle cx="2.7" cy="-1.6" r="0.65" fill="#e21d1d" /><circle cx="1.2" cy="2.6" r="0.65" fill="#e21d1d" /><circle cx="-1.8" cy="1.4" r="0.65" fill="#e21d1d" /><polygon points="-1.90,-3.50 -1.61,-2.69 -0.84,-3.06 -1.21,-2.29 -0.40,-2.00 -1.21,-1.71 -0.84,-0.94 -1.61,-1.31 -1.90,-0.50 -2.19,-1.31 -2.96,-0.94 -2.59,-1.71 -3.40,-2.00 -2.59,-2.29 -2.96,-3.06 -2.19,-2.69" fill="#f6ea1e" stroke="#b8a820" stroke-width="0.25"/></g>
<g transform="translate(170.5,41.7) scale(1.15)" ><polygon points="-1.35,-0.7 1.35,-0.7 0,0.9" fill="#1a1a1a" /></g>
<g transform="translate(179,41.7) scale(1.4)" ><polygon points="0,-2.9 2.7,-1.4 0,0.1 -2.7,-1.4" fill="#8cc8f6" /><polygon points="-2.7,-1.4 0,0.1 0,2.9 -2.7,1.4" fill="#4aa2ea" /><polygon points="0,0.1 2.7,-1.4 2.7,1.4 0,2.9" fill="#2c84d4" /><rect x="0.4" y="-3.1" width="2.7" height="2.0" fill="#f4f4fa" stroke="#223" stroke-width="0.4"/><rect x="0.4" y="-3.1" width="2.7" height="0.8" fill="#1d2a6e" /></g>
<line x1="186" y1="37.5" x2="186" y2="45.900000000000006" stroke="#c9c9c9" stroke-width="0.55" />
<g transform="translate(191.9,41.7) scale(1.4)" ><line x1="-0.1" y1="-2.7" x2="-0.1" y2="2.9" stroke="#b9b9b9" stroke-width="0.8" /><circle cx="-1.0" cy="-1.7" r="1.1" fill="#cdcdcd" /><line x1="0.9" y1="-2.7" x2="0.9" y2="0.4" stroke="#d0d0d0" stroke-width="0.5" /></g>
<g transform="translate(200.9,41.7) scale(1.15)" ><polygon points="-1.35,-0.7 1.35,-0.7 0,0.9" fill="#4a4a4a" /></g>
<line x1="204.75" y1="37.5" x2="204.75" y2="45.900000000000006" stroke="#c9c9c9" stroke-width="0.55" />
<g transform="translate(210.6,41.7) scale(1.4)" ><line x1="1.0" y1="-0.6" x2="1.0" y2="2.0" stroke="#5d93e4" stroke-width="0.8" /><rect x="0.3" y="1.7" width="1.4" height="1.4" fill="#e21d1d" /><polygon points="-0.50,-3.50 -0.14,-2.48 0.84,-2.94 0.38,-1.96 1.40,-1.60 0.38,-1.24 0.84,-0.26 -0.14,-0.72 -0.50,0.30 -0.86,-0.72 -1.84,-0.26 -1.38,-1.24 -2.40,-1.60 -1.38,-1.96 -1.84,-2.94 -0.86,-2.48" fill="#f6ea1e" stroke="#b8a820" stroke-width="0.25"/></g>
<g transform="translate(223.1,41.7) scale(1.4)" ><polyline points="-1.6,2.0 -1.6,-0.9 2.0,-0.9 2.0,2.0" fill="none" stroke="#3a78d2" stroke-width="1.0" /><rect x="-0.9" y="-0.3" width="2.2" height="2.0" fill="#b9d4f6" /><line x1="-2.9" y1="2.6" x2="2.9" y2="2.6" stroke="#e21d1d" stroke-width="0.7" /><circle cx="-2.5" cy="2.6" r="0.7" fill="#e21d1d" /><circle cx="2.6" cy="2.6" r="0.7" fill="#e21d1d" /><polygon points="-1.50,-3.60 -1.21,-2.79 -0.44,-3.16 -0.81,-2.39 0.00,-2.10 -0.81,-1.81 -0.44,-1.04 -1.21,-1.41 -1.50,-0.60 -1.79,-1.41 -2.56,-1.04 -2.19,-1.81 -3.00,-2.10 -2.19,-2.39 -2.56,-3.16 -1.79,-2.79" fill="#f6ea1e" stroke="#b8a820" stroke-width="0.25"/></g>
<g transform="translate(234.4,41.7) scale(1.4)" ><polyline points="-1.6,2.0 -1.6,-1.6 2.0,-1.6 2.0,2.0" fill="none" stroke="#b4b4b4" stroke-width="0.9" /><line x1="0.2" y1="-1.6" x2="0.2" y2="2.0" stroke="#c8c8c8" stroke-width="0.6" /><line x1="-2.9" y1="2.6" x2="2.9" y2="2.6" stroke="#b0b0b0" stroke-width="0.7" /></g>
<g transform="translate(245.6,41.7) scale(1.4)" ><rect x="-2.4" y="-1.6" width="5.0" height="3.6" fill="#4a8ada" /><rect x="-1.2" y="-0.6" width="1.2" height="2.6" fill="#bcd6f6" /><rect x="0.8" y="-0.6" width="1.2" height="2.6" fill="#bcd6f6" /><line x1="-2.9" y1="2.5" x2="2.9" y2="2.5" stroke="#e21d1d" stroke-width="0.7" /><circle cx="-2.4" cy="2.5" r="0.7" fill="#e21d1d" /><circle cx="2.6" cy="2.5" r="0.7" fill="#e21d1d" /><circle cx="2.2" cy="-0.6" r="0.6" fill="#e21d1d" /><polygon points="-1.60,-3.50 -1.35,-2.80 -0.68,-3.12 -1.00,-2.45 -0.30,-2.20 -1.00,-1.95 -0.68,-1.28 -1.35,-1.60 -1.60,-0.90 -1.85,-1.60 -2.52,-1.28 -2.20,-1.95 -2.90,-2.20 -2.20,-2.45 -2.52,-3.12 -1.85,-2.80" fill="#e8e8a0" stroke="#b0b080" stroke-width="0.25"/></g>
<g transform="translate(256.6,41.7) scale(1.4)" ><polyline points="-1.6,-2.6 -1.6,1.8 0.4,1.8" fill="none" stroke="#b4b4b4" stroke-width="0.7" /><circle cx="-1.2" cy="-1.6" r="1.3" fill="#d0d0d0" /><line x1="0.6" y1="0.4" x2="2.2" y2="0.4" stroke="#b4b4b4" stroke-width="0.5" /><line x1="0.6" y1="1.8" x2="2.2" y2="1.8" stroke="#b4b4b4" stroke-width="0.5" /><line x1="0.6" y1="2.8" x2="2.2" y2="2.8" stroke="#b4b4b4" stroke-width="0.5" /></g>
<g transform="translate(265,41.7) scale(1.15)" ><polygon points="-1.35,-0.7 1.35,-0.7 0,0.9" fill="#555" /></g>
<g transform="translate(273.1,41.7) scale(1.4)" ><polygon points="-1.7,-0.9 1.9,-0.9 2.7,1.7 -2.5,1.7" fill="#4a8ada" /><rect x="-0.9" y="-0.2" width="0.9" height="1.9" fill="#bcd6f6" /><rect x="0.6" y="-0.2" width="0.9" height="1.9" fill="#bcd6f6" /><line x1="-2.7" y1="2.5" x2="2.7" y2="2.5" stroke="#e21d1d" stroke-width="0.8" /><polygon points="-1.30,-3.50 -1.01,-2.69 -0.24,-3.06 -0.61,-2.29 0.20,-2.00 -0.61,-1.71 -0.24,-0.94 -1.01,-1.31 -1.30,-0.50 -1.59,-1.31 -2.36,-0.94 -1.99,-1.71 -2.80,-2.00 -1.99,-2.29 -2.36,-3.06 -1.59,-2.69" fill="#f6ea1e" stroke="#b8a820" stroke-width="0.25"/></g>
<g transform="translate(281.5,41.7) scale(1.15)" ><polygon points="-1.35,-0.7 1.35,-0.7 0,0.9" fill="#1a1a1a" /></g>
<line x1="286.25" y1="37.5" x2="286.25" y2="45.900000000000006" stroke="#c9c9c9" stroke-width="0.55" />
<g transform="translate(294.4,41.7) scale(1.4)" ><polygon points="-3,-1.6 2.2,-1.6 0.3,0.6 0.3,2.9 -1.1,2.0 -1.1,0.6" fill="#3b78d2" /><rect x="0.8" y="-3.1" width="2.5" height="2.0" fill="#eef0f8" stroke="#3a4a8a" stroke-width="0.35"/><rect x="0.8" y="-3.1" width="2.5" height="0.9" fill="#2d3f9e" /></g>
<line x1="301.5" y1="37.5" x2="301.5" y2="45.900000000000006" stroke="#c9c9c9" stroke-width="0.55" />
<g transform="translate(308.75,41.7) scale(1.4)" ><line x1="-2.7" y1="-2.7" x2="-2.7" y2="2.7" stroke="#444" stroke-width="0.6" /><line x1="-2.7" y1="2.7" x2="2.9" y2="2.7" stroke="#444" stroke-width="0.6" /><line x1="-2.7" y1="2.7" x2="0.8" y2="0.2" stroke="#5d93e4" stroke-width="0.6" /><line x1="-1.4" y1="0.8" x2="-1.4" y2="2.7" stroke="#9bbcf0" stroke-width="0.4" /><rect x="0.1" y="-3" width="2.8" height="2.4" fill="#eef0f8" stroke="#3a4a8a" stroke-width="0.35"/><rect x="0.1" y="-3" width="2.8" height="0.9" fill="#2d3f9e" /></g>
<g transform="translate(319.75,41.7) scale(1.4)" ><path d="M-2.2,2.4 L-2.2,-0.6 Q-2.2,-2.2 0,-2.2 Q2.2,-2.2 2.2,-0.6 L2.2,2.4" fill="none" stroke="#6e6e6e" stroke-width="1.1" /><line x1="-2.9" y1="2.6" x2="-1.4" y2="2.6" stroke="#888" stroke-width="0.5" /><line x1="1.4" y1="2.6" x2="2.9" y2="2.6" stroke="#888" stroke-width="0.5" /></g>
<g transform="translate(331.25,41.7) scale(1.4)" ><rect x="-2.5" y="-2.3" width="5.0" height="4.6" fill="#dcdcdc" stroke="#a0a0a0" stroke-width="0.5"/><rect x="-1.2" y="-1.0" width="2.4" height="2.0" fill="#bdbdbd" /><line x1="-2.9" y1="-2.6" x2="2.9" y2="-2.6" stroke="#999" stroke-width="0.5" /><line x1="-2.9" y1="2.6" x2="2.9" y2="2.6" stroke="#999" stroke-width="0.5" /></g>
<line x1="338" y1="37.5" x2="338" y2="45.900000000000006" stroke="#c9c9c9" stroke-width="0.55" />
<g transform="translate(345.25,41.7) scale(1.4)" ><polyline points="-2.9,-1.8 -2.0,0.6 -0.9,2.4 0.2,0.4 1.0,-1.8 1.9,0.8 2.9,-1.8" fill="none" stroke="#9a9a9a" stroke-width="0.6" /><line x1="-2.9" y1="-1.8" x2="-2.9" y2="1.2" stroke="#aaa" stroke-width="0.4" /><line x1="2.9" y1="-1.8" x2="2.9" y2="1.2" stroke="#aaa" stroke-width="0.4" /></g>
<g transform="translate(356.9,41.7) scale(1.4)" ><polygon points="-2.9,0.4 0.6,-1.7 2.9,-0.5 -0.6,1.7" fill="#a9a9a9" /><polyline points="-2.0,1.4 0.6,2.4 2.6,1.0" fill="none" stroke="#bbb" stroke-width="0.5" /></g>
<g transform="translate(368.1,41.7) scale(1.4)" ><rect x="-2.8" y="-2.2" width="5.6" height="4.7" fill="#cfcfcf" stroke="#858585" stroke-width="0.6"/><circle cx="0.5" cy="0.2" r="1.3" fill="#f0f0f0" stroke="#8a8a8a" stroke-width="0.5"/><line x1="-2.8" y1="-0.9" x2="-1.2" y2="-0.9" stroke="#858585" stroke-width="0.4" /></g>
<g transform="translate(378.75,41.7) scale(1.4)" ><line x1="-0.4" y1="-2.8" x2="-0.4" y2="2.9" stroke="#9a9a9a" stroke-width="0.6" /><polygon points="-1.3,-1.2 -0.4,-2.9 0.5,-1.2" fill="#9a9a9a" /><polygon points="-1.3,1.4 -0.4,2.9 0.5,1.4" fill="#9a9a9a" /><line x1="-2.4" y1="0.1" x2="1.6" y2="0.1" stroke="#aaa" stroke-width="0.5" /><line x1="1.2" y1="-2.4" x2="2.8" y2="-2.4" stroke="#aaa" stroke-width="0.4" /><line x1="1.2" y1="-1.6" x2="2.8" y2="-1.6" stroke="#bbb" stroke-width="0.4" /></g>
<g transform="translate(390.25,41.7) scale(1.4)" ><line x1="-2.9" y1="1.7" x2="2.9" y2="-1.7" stroke="#a4a4a4" stroke-width="0.7" /><line x1="-2.9" y1="2.4" x2="0" y2="0.8" stroke="#c4c4c4" stroke-width="0.4" /></g>
<line x1="396.5" y1="37.5" x2="396.5" y2="45.900000000000006" stroke="#c9c9c9" stroke-width="0.55" />
<g transform="translate(403.75,41.7) scale(1.4)" ><line x1="-2.7" y1="-1.5" x2="2.7" y2="-1.5" stroke="#858585" stroke-width="0.7" stroke-dasharray="1.4 0.7"/><path d="M-2.7,1.0 Q0,2.6 2.7,0.6" fill="none" stroke="#9a9a9a" stroke-width="0.6" /><line x1="-2.7" y1="1.9" x2="2.7" y2="1.9" stroke="#bbb" stroke-width="0.4" stroke-dasharray="1 0.6"/></g>
<g transform="translate(415,41.7) scale(1.4)" ><line x1="-2.7" y1="-1.5" x2="2.7" y2="-1.5" stroke="#858585" stroke-width="0.7" stroke-dasharray="1.4 0.7"/><path d="M-2.7,1.0 Q0,2.6 2.7,0.6" fill="none" stroke="#9a9a9a" stroke-width="0.6" /><line x1="-2.7" y1="1.9" x2="2.7" y2="1.9" stroke="#bbb" stroke-width="0.4" stroke-dasharray="1 0.6"/></g>
<g transform="translate(426.25,41.7) scale(1.4)" ><line x1="-2.7" y1="-1.5" x2="2.7" y2="-1.5" stroke="#858585" stroke-width="0.7" stroke-dasharray="1.4 0.7"/><path d="M-2.7,1.0 Q0,2.6 2.7,0.6" fill="none" stroke="#9a9a9a" stroke-width="0.6" /><line x1="-2.7" y1="1.9" x2="2.7" y2="1.9" stroke="#bbb" stroke-width="0.4" stroke-dasharray="1 0.6"/></g>
<g transform="translate(437.25,41.7) scale(1.4)" ><line x1="-2.4" y1="-2.5" x2="2.4" y2="-2.5" stroke="#858585" stroke-width="0.7" /><line x1="-2.4" y1="2.5" x2="2.4" y2="2.5" stroke="#858585" stroke-width="0.7" /><line x1="-0.8" y1="-2.5" x2="-0.4" y2="2.5" stroke="#999" stroke-width="0.6" /><line x1="0.9" y1="-2.5" x2="0.5" y2="2.5" stroke="#999" stroke-width="0.6" /><line x1="-2.2" y1="0.6" x2="2.2" y2="0.6" stroke="#aaa" stroke-width="0.4" stroke-dasharray="0.8 0.5"/></g>
<g transform="translate(448.75,41.7) scale(1.4)" ><line x1="-2.4" y1="-1.2" x2="1.0" y2="-1.2" stroke="#999" stroke-width="0.6" stroke-dasharray="1 0.6"/><path d="M-2.8,0.9 Q0,-0.6 2.8,1.2" fill="none" stroke="#8f8f8f" stroke-width="0.7" /><path d="M-2.4,2.2 Q0,1.0 2.6,2.4" fill="none" stroke="#aaa" stroke-width="0.5" /></g>
<g transform="translate(459.4,41.7) scale(1.4)" ><line x1="-2.8" y1="1.6" x2="2.8" y2="-1.8" stroke="#9a9a9a" stroke-width="0.6" /><path d="M-2.8,1.6 Q0,2.8 2.6,1.4" fill="none" stroke="#9a9a9a" stroke-width="0.6" /><line x1="-2.6" y1="2.6" x2="2.4" y2="2.4" stroke="#bbb" stroke-width="0.4" /></g>
<g transform="translate(471,41.7) scale(1.4)" ><polygon points="-2.7,2.6 2.8,-2.6 2.9,-0.8 -0.4,2.8" fill="#3a68da" /><path d="M-2.0,1.0 Q1.0,-1.2 2.6,-2.6" fill="none" stroke="#8a8a8a" stroke-width="0.5" /><path d="M0.6,2.4 Q2.4,1.6 2.8,0" fill="none" stroke="#8a8a8a" stroke-width="0.5" /><circle cx="-1.3" cy="-1.5" r="1.35" fill="#f2e820" stroke="#b0a820" stroke-width="0.3"/></g>
<g transform="translate(481.5,41.7) scale(1.1)" ><line x1="0" y1="-2.9" x2="0" y2="1.2" stroke="#f4a6a6" stroke-width="0.8" /><circle cx="0" cy="1.9" r="1.15" fill="#e11be1" /></g>
<line x1="488.75" y1="37.5" x2="488.75" y2="45.900000000000006" stroke="#c9c9c9" stroke-width="0.55" />
<g transform="translate(495.6,41.7) scale(1.4)" ><polygon points="-2.8,-2.4 2.4,2.8 -2.8,2.8" fill="#dadada" /><line x1="-2.8" y1="-2.9" x2="-2.8" y2="2.8" stroke="#6e6e6e" stroke-width="0.7" /><line x1="-2.8" y1="2.8" x2="2.9" y2="2.8" stroke="#6e6e6e" stroke-width="0.7" /><line x1="-2.8" y1="-2.4" x2="2.4" y2="2.8" stroke="#8a8a8a" stroke-width="0.6" /><line x1="-2.8" y1="2.8" x2="1.8" y2="-1.4" stroke="#aaa" stroke-width="0.5" /></g>
<g transform="translate(504,41.7) scale(1.15)" ><polygon points="-1.35,-0.7 1.35,-0.7 0,0.9" fill="#444" /></g>
<line x1="509.4" y1="37.5" x2="509.4" y2="45.900000000000006" stroke="#c9c9c9" stroke-width="0.55" />
<g transform="translate(517.25,41.7) scale(1.4)" ><rect x="-2.9" y="-2.2" width="4.8" height="5.0" fill="#dadada" stroke="#a0a0a0" stroke-width="0.4"/><line x1="-2.9" y1="-0.5" x2="1.9" y2="-0.5" stroke="#a0a0a0" stroke-width="0.35" /><line x1="-2.9" y1="1.1" x2="1.9" y2="1.1" stroke="#a0a0a0" stroke-width="0.35" /><line x1="-1.2" y1="-2.2" x2="-1.2" y2="2.8" stroke="#a0a0a0" stroke-width="0.35" /><line x1="0.4" y1="-2.2" x2="0.4" y2="2.8" stroke="#a0a0a0" stroke-width="0.35" /><rect x="0.6" y="-3.1" width="2.5" height="2.2" fill="#26368c" /></g>
<g transform="translate(528.1,41.7) scale(1.4)" ><rect x="-2.7" y="-2.7" width="5.4" height="5.4" fill="#e4e8f6" stroke="#8a8a9a" stroke-width="0.5"/><polygon points="0,-2.5 2.5,0 0,2.5 -2.5,0" fill="#f6f8ff" stroke="#2a3ab4" stroke-width="0.8"/><circle cx="0" cy="0" r="0.8" fill="#2a3ab4" /></g>
<rect x="534" y="36.800000000000004" width="11" height="9.8" fill="#cce4fa" rx="0.8"/>
<g transform="translate(539.4,41.7) scale(1.4)" ><polygon points="-2.9,0.6 0.6,-2.5 2.9,-1.0 -0.6,2.3" fill="#3e7ad4" /><polygon points="-1.6,0.4 0.4,-1.3 1.6,-0.5 -0.4,1.2" fill="#9cc0f0" /><line x1="-2.7" y1="1.8" x2="2.7" y2="-1.6" stroke="#d82020" stroke-width="1.0" /></g>
<g transform="translate(550.9,41.7) scale(1.4)" ><polygon points="-2.4,-0.6 0,-2.9 2.4,-0.6 2.4,1.2 0,2.9 -2.4,1.2" fill="#3e7ad4" /><polygon points="-1.2,-0.2 0,-1.4 1.2,-0.2 0,1.2" fill="#9cc0f0" /><line x1="-1.0" y1="2.4" x2="1.2" y2="-2.6" stroke="#d82020" stroke-width="1.0" /></g>
<g transform="translate(561.9,41.7) scale(1.4)" ><rect x="-2.2" y="-2.2" width="4.4" height="4.4" fill="#3e7ad4" rx="0.8"/><rect x="-1.0" y="-1.0" width="2.0" height="2.0" fill="#9cc0f0" /><circle cx="-1.6" cy="-1.2" r="0.8" fill="#e21d1d" /><circle cx="1.4" cy="-1.8" r="0.8" fill="#e21d1d" /><circle cx="1.6" cy="1.2" r="0.8" fill="#e21d1d" /><circle cx="-1.0" cy="1.8" r="0.8" fill="#e21d1d" /></g>
<line x1="568.5" y1="37.5" x2="568.5" y2="45.900000000000006" stroke="#c9c9c9" stroke-width="0.55" />
<g transform="translate(575.6,41.7) scale(1.4)" ><circle cx="-1.6" cy="-1.4" r="0.7" fill="#cfcfcf" /><circle cx="0.2" cy="0.2" r="0.7" fill="#cfcfcf" /><circle cx="1.4" cy="1.8" r="0.7" fill="#cfcfcf" /><polyline points="-1.6,-1.4 0.2,0.2 1.4,1.8" fill="none" stroke="#d8d8d8" stroke-width="0.4" /></g>
<g transform="translate(586.9,41.7) scale(1.4)" ><ellipse cx="0" cy="0.4" rx="2.7" ry="1.5" fill="none" stroke="#b6b6b6" stroke-width="0.6"/><polygon points="-0.6,-2.8 1.0,-1.4 -0.8,-0.9" fill="#c4c4c4" /></g>
<g transform="translate(598.5,41.7) scale(1.4)" ><polygon points="0,-2.9 2.3,2.7 -2.3,2.7" fill="#e0e0e0" stroke="#b6b6b6" stroke-width="0.5"/><line x1="0" y1="-2.9" x2="0" y2="2.7" stroke="#c4c4c4" stroke-width="0.4" /></g>
<g transform="translate(609.4,41.7) scale(1.4)" ><line x1="-2.6" y1="-2.6" x2="2.6" y2="2.6" stroke="#d82020" stroke-width="0.8" /><line x1="2.6" y1="-2.6" x2="-2.6" y2="2.6" stroke="#d82020" stroke-width="0.8" /><circle cx="-2.6" cy="-2.6" r="0.6" fill="#a01818" /><circle cx="2.6" cy="-2.6" r="0.6" fill="#a01818" /><circle cx="-2.6" cy="2.6" r="0.6" fill="#a01818" /><circle cx="2.6" cy="2.6" r="0.6" fill="#a01818" /><circle cx="0" cy="0" r="0.7" fill="#a01818" /></g>
<g transform="translate(620.6,41.7) scale(1.4)" ><rect x="-2.8" y="-1.9" width="5.6" height="4.6" fill="#ededed" stroke="#4a4a4a" stroke-width="0.7" rx="0.5"/><rect x="-1.0" y="-2.8" width="2.0" height="1.0" fill="#4a4a4a" /><circle cx="0.2" cy="0.5" r="1.3" fill="#fff" stroke="#4a4a4a" stroke-width="0.6"/></g>
<line x1="627.75" y1="37.5" x2="627.75" y2="45.900000000000006" stroke="#c9c9c9" stroke-width="0.55" />
<g transform="translate(635.6,41.7) scale(1.4)" ><polygon points="0,-2.61 2.43,-1.26 0,0.09000000000000001 -2.43,-1.26" fill="#5a8cd6" /><polygon points="-2.43,-1.26 0,0.09000000000000001 0,2.61 -2.43,1.26" fill="#4c4c4c" /><polygon points="0,0.09000000000000001 2.43,-1.26 2.43,1.26 0,2.61" fill="#777" /><rect x="0.2" y="-3.0" width="1.4" height="1.4" fill="#f2f2f2" stroke="#555" stroke-width="0.3"/></g>
<g transform="translate(646.9,41.7) scale(1.4)" ><polygon points="0,-2.61 2.43,-1.26 0,0.09000000000000001 -2.43,-1.26" fill="#5a8cd6" /><polygon points="-2.43,-1.26 0,0.09000000000000001 0,2.61 -2.43,1.26" fill="#5c5c5c" /><polygon points="0,0.09000000000000001 2.43,-1.26 2.43,1.26 0,2.61" fill="#858585" /><rect x="0.4" y="-3.1" width="1.6" height="1.6" fill="#f6f6f6" stroke="#555" stroke-width="0.3"/></g>
<g transform="translate(658.1,41.7) scale(1.4)" ><polygon points="0,-2.9 2.7,-1.4 0,0.1 -2.7,-1.4" fill="#5a8cd6" /><polygon points="-2.7,-1.4 0,0.1 0,2.9 -2.7,1.4" fill="#4c4c4c" /><polygon points="0,0.1 2.7,-1.4 2.7,1.4 0,2.9" fill="#777" /><rect x="0.0" y="-3.2" width="2.6" height="2.0" fill="#f6f6f6" stroke="#334" stroke-width="0.3"/><rect x="0.0" y="-3.2" width="2.6" height="0.8" fill="#2d3f9e" /></g>
<g transform="translate(8.5,62.0) scale(1.0)" ><rect x="-3.2" y="-2.7" width="6.4" height="5.4" fill="#20307e" /><line x1="-3.2" y1="-0.9" x2="3.2" y2="-0.9" stroke="#fff" stroke-width="0.45" /><line x1="-3.2" y1="0.9" x2="3.2" y2="0.9" stroke="#fff" stroke-width="0.45" /><line x1="-0.6" y1="-2.7" x2="-0.6" y2="-0.9" stroke="#fff" stroke-width="0.45" /><line x1="0.8" y1="0.9" x2="0.8" y2="2.7" stroke="#fff" stroke-width="0.45" /></g>
<g transform="translate(8.5,70.28) scale(1.0)" ><polyline points="-1.5,-0.8 0,0.8 1.5,-0.8" fill="none" stroke="#3c3c3c" stroke-width="0.65" /></g>
<g transform="translate(17.5,70.28) scale(1.0)" ><polygon points="-2.4,-3.2 0.9,-3.2 2.4,-1.7 2.4,3.2 -2.4,3.2" fill="#fff" stroke="#555" stroke-width="0.5"/><polyline points="0.9,-3.2 0.9,-1.7 2.4,-1.7" fill="none" stroke="#555" stroke-width="0.4" /><polygon points="-1.4,1.6 0,-0.6 1.4,0.2 0,2.2" fill="#4a78c8" /><circle cx="0.2" cy="-0.2" r="0.6" fill="#333" /></g>
<g transform="translate(17,78.56) scale(1.0)" ><polyline points="-1.5,-0.8 0,0.8 1.5,-0.8" fill="none" stroke="#3c3c3c" stroke-width="0.65" /></g>
<g transform="translate(26.25,78.46000000000001) scale(1.0)" ><polygon points="-3.2,-2.6 -0.8,-2.6 -0.1,-1.8 3.2,-1.8 3.2,2.8 -3.2,2.8" fill="#f6f0b4" stroke="#d9cd86" stroke-width="0.45"/><line x1="-3.2" y1="-1.0" x2="3.2" y2="-1.0" stroke="#e6dc98" stroke-width="0.4" /></g>
<g transform="translate(25.75,86.84) scale(1.0)" ><polyline points="-0.8,-1.5 0.8,0 -0.8,1.5" fill="none" stroke="#666" stroke-width="0.6" /></g>
<g transform="translate(35.75,86.84) scale(1.1)" ><circle cx="-1.5" cy="-1.5" r="1.35" fill="#5a9cf0" /><circle cx="1.5" cy="-1.5" r="1.35" fill="#f0d820" /><circle cx="-1.5" cy="1.5" r="1.35" fill="#30b848" /><circle cx="1.5" cy="1.5" r="1.35" fill="#e03030" /></g>
<g transform="translate(25.75,95.12) scale(1.0)" ><polyline points="-0.8,-1.5 0.8,0 -0.8,1.5" fill="none" stroke="#666" stroke-width="0.6" /></g>
<g transform="translate(35.75,95.12) scale(1.1)" ><polygon points="-2.6,-1.2 1.6,-2.8 2.6,-1.6 -1.6,0" fill="#d82828" /><polygon points="-1.8,0 0.2,-0.8 0.6,1.4 -1.4,2.2" fill="#4a78d0" /><polygon points="-2.6,2.0 1.6,0.4 2.6,1.6 -1.6,3.0" fill="#d82828" /></g>
<g transform="translate(25.75,103.4) scale(1.0)" ><polyline points="-0.8,-1.5 0.8,0 -0.8,1.5" fill="none" stroke="#666" stroke-width="0.6" /></g>
<g transform="translate(35.75,103.4) scale(1.1)" ><polygon points="-2.8,-0.8 1.0,-1.8 2.8,-0.8 2.8,0.8 -1.0,1.8 -2.8,0.8" fill="#5d9ae4" /><polygon points="-2.8,-0.8 1.0,-1.8 2.8,-0.8 -1.0,0.2" fill="#9cc4f4" /><circle cx="1.2" cy="-0.8" r="0.5" fill="#223" /></g>
<g transform="translate(25.75,111.67999999999999) scale(1.0)" ><polyline points="-0.8,-1.5 0.8,0 -0.8,1.5" fill="none" stroke="#666" stroke-width="0.6" /></g>
<g transform="translate(35.75,111.67999999999999) scale(1.1)" ><circle cx="0" cy="0.2" r="0.85" fill="#e02020" /></g>
<g transform="translate(25.75,119.96) scale(1.0)" ><polyline points="-0.8,-1.5 0.8,0 -0.8,1.5" fill="none" stroke="#666" stroke-width="0.6" /></g>
<g transform="translate(35.75,119.96) scale(1.1)" ><line x1="-2.6" y1="2.6" x2="2.6" y2="-2.6" stroke="#222" stroke-width="0.6" /><circle cx="-2.6" cy="2.6" r="0.7" fill="#e21d1d" /><circle cx="2.6" cy="-2.6" r="0.7" fill="#e21d1d" /></g>
<g transform="translate(35.75,128.24) scale(1.1)" ><line x1="-2.8" y1="2.4" x2="2.0" y2="-2.6" stroke="#222" stroke-width="0.6" /><circle cx="-2.8" cy="2.4" r="0.7" fill="#e21d1d" /><line x1="1.2" y1="0.8" x2="2.8" y2="0.8" stroke="#3b78d2" stroke-width="0.45" /><line x1="2.0" y1="0.8" x2="2.0" y2="2.8" stroke="#3b78d2" stroke-width="0.45" /><line x1="1.2" y1="2.8" x2="2.8" y2="2.8" stroke="#3b78d2" stroke-width="0.45" /></g>
<g transform="translate(25.75,136.51999999999998) scale(1.0)" ><polyline points="-0.8,-1.5 0.8,0 -0.8,1.5" fill="none" stroke="#666" stroke-width="0.6" /></g>
<g transform="translate(35.75,136.51999999999998) scale(1.1)" ><polygon points="-3,0 0,-2.2 3,-0.4 0,1.9" fill="#4f8ede" /><polygon points="-3,0 0,1.9 0,2.6 -3,0.7" fill="#2f68b8" /><polygon points="0,1.9 3,-0.4 3,0.3 0,2.6" fill="#3b78cc" /></g>
<g transform="translate(25.75,144.8) scale(1.0)" ><polyline points="-0.8,-1.5 0.8,0 -0.8,1.5" fill="none" stroke="#666" stroke-width="0.6" /></g>
<g transform="translate(35.75,144.8) scale(1.1)" ><rect x="-2.6" y="-2.6" width="5.2" height="5.2" fill="#4f8ede" stroke="#2f68b8" stroke-width="0.4"/><rect x="-1.0" y="-1.0" width="2.2" height="2.2" fill="#fff" /></g>
<g transform="translate(25.75,153.07999999999998) scale(1.0)" ><polyline points="-0.8,-1.5 0.8,0 -0.8,1.5" fill="none" stroke="#666" stroke-width="0.6" /></g>
<g transform="translate(35.75,153.07999999999998) scale(1.1)" ><polygon points="0,-2.9 2.7,-1.4 0,0.1 -2.7,-1.4" fill="#a8d0f8" /><polygon points="-2.7,-1.4 0,0.1 0,2.9 -2.7,1.4" fill="#5d9ae4" /><polygon points="0,0.1 2.7,-1.4 2.7,1.4 0,2.9" fill="#3b78cc" /></g>
<g transform="translate(35.75,161.35999999999999) scale(1.1)" ><polyline points="-2.6,2.6 -0.2,-0.4 2.6,-2.6" fill="none" stroke="#222" stroke-width="0.6" /><line x1="-0.2" y1="-0.4" x2="2.4" y2="2.4" stroke="#222" stroke-width="0.6" /><circle cx="-2.6" cy="2.6" r="0.65" fill="#e21d1d" /><circle cx="2.4" cy="2.4" r="0.65" fill="#e21d1d" /><circle cx="-0.2" cy="-0.4" r="0.65" fill="#e21d1d" /></g>
<g transform="translate(35.75,169.64) scale(1.1)" ><polyline points="-2.6,2.6 -0.2,-0.4 2.6,-2.6" fill="none" stroke="#222" stroke-width="0.6" /><line x1="-0.2" y1="-0.4" x2="2.4" y2="2.4" stroke="#222" stroke-width="0.6" /><circle cx="-2.6" cy="2.6" r="0.65" fill="#e21d1d" /><circle cx="2.4" cy="2.4" r="0.65" fill="#e21d1d" /><circle cx="-0.2" cy="-0.4" r="0.65" fill="#e21d1d" /></g>
<g transform="translate(35.75,177.92) scale(1.1)" ><polygon points="-3,-0.6 0,-2.4 2.0,-1.2 -1.0,0.6" fill="#4f8ede" /><polygon points="-1.0,1.2 1.6,-0.4 3,0.6 0.4,2.4" fill="#2f68b8" /><circle cx="1.6" cy="2.0" r="0.6" fill="#222" /></g>
<g transform="translate(35.75,186.2) scale(1.1)" ><polygon points="0,-2.32 2.16,-1.1199999999999999 0,0.08000000000000002 -2.16,-1.1199999999999999" fill="#a8d0f8" /><polygon points="-2.16,-1.1199999999999999 0,0.08000000000000002 0,2.32 -2.16,1.1199999999999999" fill="#5d9ae4" /><polygon points="0,0.08000000000000002 2.16,-1.1199999999999999 2.16,1.1199999999999999 0,2.32" fill="#3b78cc" /><rect x="1.0" y="0.6" width="1.6" height="2.0" fill="#222" /></g>
<g transform="translate(17,194.48) scale(1.0)" ><polyline points="-1.5,-0.8 0,0.8 1.5,-0.8" fill="none" stroke="#3c3c3c" stroke-width="0.65" /></g>
<g transform="translate(26.25,194.38) scale(1.0)" ><polygon points="-3.2,-2.6 -0.8,-2.6 -0.1,-1.8 3.2,-1.8 3.2,2.8 -3.2,2.8" fill="#f6f0b4" stroke="#d9cd86" stroke-width="0.45"/><line x1="-3.2" y1="-1.0" x2="3.2" y2="-1.0" stroke="#e6dc98" stroke-width="0.4" /></g>
<g transform="translate(35.75,202.76) scale(1.1)" ><polygon points="-3,0 -0.4,-2.2 2.4,-0.6 -0.2,1.6" fill="#4f8ede" /><polygon points="-0.8,-2.6 1.2,-2.0 0.6,2.8 -1.2,2.2" fill="#2f68b8" /><circle cx="1.8" cy="1.2" r="0.7" fill="#333" /></g>
<g transform="translate(35.75,211.04) scale(1.1)" ><polygon points="-2.8,2.4 0,-2.6 2.8,2.4" fill="#334" /><line x1="-2.8" y1="0.8" x2="2.8" y2="0.8" stroke="#e03030" stroke-width="0.6" /><circle cx="0" cy="0.6" r="0.9" fill="#e03030" /></g>
<g transform="translate(35.75,219.32) scale(1.1)" ><rect x="-2.6" y="-1.6" width="5.2" height="3.2" fill="#f59a1e" /><rect x="-1.4" y="-3" width="2.8" height="1.5" fill="#222" /><rect x="-1.4" y="1.5" width="2.8" height="1.5" fill="#222" /></g>
<g transform="translate(35.75,227.6) scale(1.1)" ><line x1="-1.6" y1="-2.9" x2="-1.6" y2="2.9" stroke="#e02020" stroke-width="0.7" stroke-dasharray="1.2 0.7"/><line x1="1.2" y1="-2.9" x2="1.2" y2="2.9" stroke="#222" stroke-width="0.7" /></g>
<g transform="translate(35.75,235.88) scale(1.1)" ><polygon points="-3,1.6 2.6,-1.8 3,-0.4 -1.6,2.6" fill="#b8bcc4" /><line x1="-3" y1="0.4" x2="2.6" y2="-2.6" stroke="#667" stroke-width="0.4" /><line x1="-3" y1="2.8" x2="3" y2="2.6" stroke="#889" stroke-width="0.4" /></g>
<g transform="translate(35.75,244.16) scale(1.1)" ><line x1="-3" y1="0.6" x2="2.8" y2="-2.4" stroke="#3b6ac8" stroke-width="0.7" /><line x1="-3" y1="1.9" x2="2.8" y2="-0.8" stroke="#667" stroke-width="0.6" /><line x1="-2.6" y1="2.9" x2="3" y2="1.0" stroke="#3b6ac8" stroke-width="0.6" /></g>
<g transform="translate(35.75,252.44) scale(1.1)" ><rect x="-2.7" y="-2.7" width="5.4" height="5.4" fill="#ddd" stroke="#999" stroke-width="0.4"/><line x1="-2.7" y1="-0.9" x2="2.7" y2="-0.9" stroke="#888" stroke-width="0.4" /><line x1="-2.7" y1="0.9" x2="2.7" y2="0.9" stroke="#888" stroke-width="0.4" /><line x1="-0.9" y1="-2.7" x2="-0.9" y2="2.7" stroke="#888" stroke-width="0.4" /><line x1="0.9" y1="-2.7" x2="0.9" y2="2.7" stroke="#888" stroke-width="0.4" /></g>
<g transform="translate(35.75,260.71999999999997) scale(1.1)" ><line x1="-2.6" y1="-2.8" x2="0" y2="-0.2" stroke="#222" stroke-width="0.6" /><line x1="2.6" y1="-2.8" x2="0" y2="-0.2" stroke="#222" stroke-width="0.6" /><line x1="0" y1="-0.2" x2="0" y2="1.0" stroke="#222" stroke-width="0.6" /><rect x="-2.2" y="1.0" width="4.4" height="1.0" fill="#e03030" /><line x1="-2.8" y1="2.8" x2="2.8" y2="2.8" stroke="#555" stroke-width="0.5" /></g>
<g transform="translate(35.75,269.0) scale(1.1)" ><polygon points="-0.8,-2.8 0.6,-2.8 1.0,1.0 -1.4,1.0" fill="#3b6ac8" /><rect x="-2.6" y="1.0" width="5.2" height="1.0" fill="#e03030" /><line x1="-3" y1="2.6" x2="3" y2="2.6" stroke="#667" stroke-width="0.5" /></g>
<g transform="translate(35.75,277.28) scale(1.1)" ><polygon points="-3,-0.6 2.0,-2.4 2.6,0 -2.4,1.4" fill="#445" /><rect x="-2.4" y="0.8" width="4.8" height="1.0" fill="#e03030" /><polygon points="0.4,-1.2 3,-1.6 3,2.4 0.8,2.6" fill="#3b6ac8" /></g>
<g transform="translate(35.75,285.55999999999995) scale(1.1)" ><polygon points="0,-2.6 2.3,-1.3 2.3,1.3 0,2.6 -2.3,1.3 -2.3,-1.3" fill="#22aef0" /><polygon points="0,-2.6 2.3,-1.3 0,0 -2.3,-1.3" fill="#58c8f8" /></g>
<g transform="translate(17,293.84) scale(1.0)" ><polyline points="-0.8,-1.5 0.8,0 -0.8,1.5" fill="none" stroke="#666" stroke-width="0.6" /></g>
<g transform="translate(26.25,293.73999999999995) scale(1.0)" ><polygon points="-3.2,-2.6 -0.8,-2.6 -0.1,-1.8 3.2,-1.8 3.2,2.8 -3.2,2.8" fill="#f6f0b4" stroke="#d9cd86" stroke-width="0.45"/><line x1="-3.2" y1="-1.0" x2="3.2" y2="-1.0" stroke="#e6dc98" stroke-width="0.4" /></g>
<g transform="translate(17,302.12) scale(1.0)" ><polyline points="-0.8,-1.5 0.8,0 -0.8,1.5" fill="none" stroke="#666" stroke-width="0.6" /></g>
<g transform="translate(26.25,302.02) scale(1.0)" ><polygon points="-3.2,-2.6 -0.8,-2.6 -0.1,-1.8 3.2,-1.8 3.2,2.8 -3.2,2.8" fill="#f6f0b4" stroke="#d9cd86" stroke-width="0.45"/><line x1="-3.2" y1="-1.0" x2="3.2" y2="-1.0" stroke="#e6dc98" stroke-width="0.4" /></g>
<g transform="translate(17,310.4) scale(1.0)" ><polyline points="-0.8,-1.5 0.8,0 -0.8,1.5" fill="none" stroke="#666" stroke-width="0.6" /></g>
<g transform="translate(26.25,310.29999999999995) scale(1.0)" ><polygon points="-3.2,-2.6 -0.8,-2.6 -0.1,-1.8 3.2,-1.8 3.2,2.8 -3.2,2.8" fill="#f6f0b4" stroke="#d9cd86" stroke-width="0.45"/><line x1="-3.2" y1="-1.0" x2="3.2" y2="-1.0" stroke="#e6dc98" stroke-width="0.4" /></g>
<g transform="translate(17,318.68) scale(1.0)" ><polyline points="-0.8,-1.5 0.8,0 -0.8,1.5" fill="none" stroke="#666" stroke-width="0.6" /></g>
<g transform="translate(26.25,318.58) scale(1.0)" ><polygon points="-3.2,-2.6 -0.8,-2.6 -0.1,-1.8 3.2,-1.8 3.2,2.8 -3.2,2.8" fill="#f6f0b4" stroke="#d9cd86" stroke-width="0.45"/><line x1="-3.2" y1="-1.0" x2="3.2" y2="-1.0" stroke="#e6dc98" stroke-width="0.4" /></g>
<g transform="translate(17,326.96) scale(1.0)" ><polyline points="-0.8,-1.5 0.8,0 -0.8,1.5" fill="none" stroke="#666" stroke-width="0.6" /></g>
<g transform="translate(26.25,326.85999999999996) scale(1.0)" ><polygon points="-3.2,-2.6 -0.8,-2.6 -0.1,-1.8 3.2,-1.8 3.2,2.8 -3.2,2.8" fill="#f6f0b4" stroke="#d9cd86" stroke-width="0.45"/><line x1="-3.2" y1="-1.0" x2="3.2" y2="-1.0" stroke="#e6dc98" stroke-width="0.4" /></g>
<g transform="translate(17,335.23999999999995) scale(1.0)" ><polyline points="-0.8,-1.5 0.8,0 -0.8,1.5" fill="none" stroke="#666" stroke-width="0.6" /></g>
<g transform="translate(26.25,335.13999999999993) scale(1.0)" ><polygon points="-3.2,-2.6 -0.8,-2.6 -0.1,-1.8 3.2,-1.8 3.2,2.8 -3.2,2.8" fill="#f6f0b4" stroke="#d9cd86" stroke-width="0.45"/><line x1="-3.2" y1="-1.0" x2="3.2" y2="-1.0" stroke="#e6dc98" stroke-width="0.4" /></g>
<g transform="translate(17,343.52) scale(1.0)" ><polyline points="-0.8,-1.5 0.8,0 -0.8,1.5" fill="none" stroke="#666" stroke-width="0.6" /></g>
<g transform="translate(26.25,343.41999999999996) scale(1.0)" ><polygon points="-3.2,-2.6 -0.8,-2.6 -0.1,-1.8 3.2,-1.8 3.2,2.8 -3.2,2.8" fill="#f6f0b4" stroke="#d9cd86" stroke-width="0.45"/><line x1="-3.2" y1="-1.0" x2="3.2" y2="-1.0" stroke="#e6dc98" stroke-width="0.4" /></g>
<g transform="translate(17,351.79999999999995) scale(1.0)" ><polyline points="-1.5,-0.8 0,0.8 1.5,-0.8" fill="none" stroke="#3c3c3c" stroke-width="0.65" /></g>
<g transform="translate(26.25,351.69999999999993) scale(1.0)" ><polygon points="-3.2,-2.6 -0.8,-2.6 -0.1,-1.8 3.2,-1.8 3.2,2.8 -3.2,2.8" fill="#f6f0b4" stroke="#d9cd86" stroke-width="0.45"/><line x1="-3.2" y1="-1.0" x2="3.2" y2="-1.0" stroke="#e6dc98" stroke-width="0.4" /></g>
<g transform="translate(25.75,360.08) scale(1.0)" ><polyline points="-0.8,-1.5 0.8,0 -0.8,1.5" fill="none" stroke="#666" stroke-width="0.6" /></g>
<g transform="translate(35.75,360.08) scale(1.1)" ><line x1="-0.6" y1="-2.6" x2="-0.6" y2="2.2" stroke="#555" stroke-width="0.6" /><line x1="-2.8" y1="2.4" x2="2.8" y2="2.4" stroke="#555" stroke-width="0.6" /><rect x="-0.3" y="0.4" width="1.6" height="1.6" fill="#8ebcf2" /></g>
<g transform="translate(25.75,368.35999999999996) scale(1.0)" ><polyline points="-0.8,-1.5 0.8,0 -0.8,1.5" fill="none" stroke="#666" stroke-width="0.6" /></g>
<g transform="translate(35.75,368.35999999999996) scale(1.1)" ><polyline points="0.6,-2.4 -2.6,-2.4 -2.6,2.4 0.6,2.4" fill="none" stroke="#333" stroke-width="0.6" stroke-dasharray="1 0.6"/><polygon points="0.2,-1.4 2.8,0 0.2,1.4" fill="#3b78d8" /></g>
<g transform="translate(25.75,376.64) scale(1.0)" ><polyline points="-0.8,-1.5 0.8,0 -0.8,1.5" fill="none" stroke="#666" stroke-width="0.6" /></g>
<g transform="translate(35.75,376.64) scale(1.1)" ><polyline points="0.6,-2.4 -2.6,-2.4 -2.6,2.4 0.6,2.4" fill="none" stroke="#333" stroke-width="0.6" stroke-dasharray="1 0.6"/><polygon points="0.2,-1.4 2.8,0 0.2,1.4" fill="#d020d0" /><line x1="-2.6" y1="-2.4" x2="-0.6" y2="-2.4" stroke="#20a040" stroke-width="0.7" /></g>
<g transform="translate(25.75,384.91999999999996) scale(1.0)" ><polyline points="-0.8,-1.5 0.8,0 -0.8,1.5" fill="none" stroke="#666" stroke-width="0.6" /></g>
<g transform="translate(35.75,384.91999999999996) scale(1.1)" ><polyline points="0.6,-2.4 -2.6,-2.4 -2.6,2.4 0.6,2.4" fill="none" stroke="#333" stroke-width="0.6" stroke-dasharray="1 0.6"/><polygon points="0.4,-1.2 2.8,0 0.4,1.2" fill="#3b78d8" /><line x1="-1.6" y1="0" x2="0.6" y2="0" stroke="#3b78d8" stroke-width="0.6" /></g>
<g transform="translate(25.75,393.2) scale(1.0)" ><polyline points="-0.8,-1.5 0.8,0 -0.8,1.5" fill="none" stroke="#666" stroke-width="0.6" /></g>
<g transform="translate(35.75,393.2) scale(1.1)" ><polyline points="0.6,-2.4 -2.6,-2.4 -2.6,2.4 0.6,2.4" fill="none" stroke="#333" stroke-width="0.6" stroke-dasharray="1 0.6"/><polygon points="0.2,-1.4 2.8,0 0.2,1.4" fill="#22a040" /></g>
<g transform="translate(25.75,401.47999999999996) scale(1.0)" ><polyline points="-0.8,-1.5 0.8,0 -0.8,1.5" fill="none" stroke="#666" stroke-width="0.6" /></g>
<g transform="translate(35.75,401.47999999999996) scale(1.1)" ><line x1="-3" y1="-1.2" x2="0.6" y2="-0.6" stroke="#2849a8" stroke-width="1.0" /><line x1="0.6" y1="-0.6" x2="2.9" y2="-1.8" stroke="#d42020" stroke-width="1.0" /><rect x="0.2" y="0.2" width="2.4" height="2.6" fill="#8ebcf2" stroke="#3b6ac8" stroke-width="0.3"/></g>
<g transform="translate(25.75,409.76) scale(1.0)" ><polyline points="-0.8,-1.5 0.8,0 -0.8,1.5" fill="none" stroke="#666" stroke-width="0.6" /></g>
<g transform="translate(34.15,409.76) scale(1.0)" ><polyline points="0.4,-1.6 -2.4,-1.6 -2.4,1.6 0.4,1.6" fill="none" stroke="#333" stroke-width="0.6" stroke-dasharray="1 0.6"/><polygon points="0.4,-1.0 2.2,0 0.4,1.0" fill="#444" /></g>
<g transform="translate(35.75,418.03999999999996) scale(1.1)" ><rect x="-2.6" y="-2.8" width="5.2" height="5.6" fill="none" stroke="#222" stroke-width="0.6" stroke-dasharray="1.1 0.6"/><circle cx="0.3" cy="0.1" r="1.4" fill="none" stroke="#444" stroke-width="0.6"/></g>
<g transform="translate(17,426.32) scale(1.0)" ><polyline points="-0.8,-1.5 0.8,0 -0.8,1.5" fill="none" stroke="#666" stroke-width="0.6" /></g>
<g transform="translate(26.25,426.21999999999997) scale(1.0)" ><polygon points="-3.2,-2.6 -0.8,-2.6 -0.1,-1.8 3.2,-1.8 3.2,2.8 -3.2,2.8" fill="#f6f0b4" stroke="#d9cd86" stroke-width="0.45"/><line x1="-3.2" y1="-1.0" x2="3.2" y2="-1.0" stroke="#e6dc98" stroke-width="0.4" /></g>
<g transform="translate(17,434.59999999999997) scale(1.0)" ><polyline points="-1.5,-0.8 0,0.8 1.5,-0.8" fill="none" stroke="#3c3c3c" stroke-width="0.65" /></g>
<g transform="translate(26.25,434.49999999999994) scale(1.0)" ><polygon points="-3.2,-2.6 -0.8,-2.6 -0.1,-1.8 3.2,-1.8 3.2,2.8 -3.2,2.8" fill="#f6f0b4" stroke="#d9cd86" stroke-width="0.45"/><line x1="-3.2" y1="-1.0" x2="3.2" y2="-1.0" stroke="#e6dc98" stroke-width="0.4" /></g>
<g transform="translate(25.75,442.88) scale(1.0)" ><polyline points="-0.8,-1.5 0.8,0 -0.8,1.5" fill="none" stroke="#666" stroke-width="0.6" /></g>
<g transform="translate(35.75,442.78) scale(1.0)" ><polygon points="-3.2,-2.6 -0.8,-2.6 -0.1,-1.8 3.2,-1.8 3.2,2.8 -3.2,2.8" fill="#f6f0b4" stroke="#d9cd86" stroke-width="0.45"/><line x1="-3.2" y1="-1.0" x2="3.2" y2="-1.0" stroke="#e6dc98" stroke-width="0.4" /></g>
<g transform="translate(26.25,451.15999999999997) scale(1.1)" ><line x1="-2.6" y1="-2.8" x2="-2.6" y2="2.6" stroke="#555" stroke-width="0.5" /><line x1="-2.6" y1="2.6" x2="2.9" y2="2.6" stroke="#555" stroke-width="0.5" /><polyline points="-2.6,1.6 -0.6,0.6 0.8,-0.6 2.6,-1.0" fill="none" stroke="#5d93e4" stroke-width="0.55" /></g>
<g transform="translate(17,459.43999999999994) scale(1.0)" ><polyline points="-0.8,-1.5 0.8,0 -0.8,1.5" fill="none" stroke="#666" stroke-width="0.6" /></g>
<g transform="translate(26.25,459.3399999999999) scale(1.0)" ><polygon points="-3.2,-2.6 -0.8,-2.6 -0.1,-1.8 3.2,-1.8 3.2,2.8 -3.2,2.8" fill="#f6f0b4" stroke="#d9cd86" stroke-width="0.45"/><line x1="-3.2" y1="-1.0" x2="3.2" y2="-1.0" stroke="#e6dc98" stroke-width="0.4" /></g>
<g transform="translate(17,467.71999999999997) scale(1.0)" ><polyline points="-0.8,-1.5 0.8,0 -0.8,1.5" fill="none" stroke="#666" stroke-width="0.6" /></g>
<g transform="translate(26.25,467.61999999999995) scale(1.0)" ><polygon points="-3.2,-2.6 -0.8,-2.6 -0.1,-1.8 3.2,-1.8 3.2,2.8 -3.2,2.8" fill="#f6f0b4" stroke="#d9cd86" stroke-width="0.45"/><line x1="-3.2" y1="-1.0" x2="3.2" y2="-1.0" stroke="#e6dc98" stroke-width="0.4" /></g>
<g transform="translate(17,475.99999999999994) scale(1.0)" ><polyline points="-0.8,-1.5 0.8,0 -0.8,1.5" fill="none" stroke="#666" stroke-width="0.6" /></g>
<g transform="translate(26.25,475.8999999999999) scale(1.0)" ><polygon points="-3.2,-2.6 -0.8,-2.6 -0.1,-1.8 3.2,-1.8 3.2,2.8 -3.2,2.8" fill="#f6f0b4" stroke="#d9cd86" stroke-width="0.45"/><line x1="-3.2" y1="-1.0" x2="3.2" y2="-1.0" stroke="#e6dc98" stroke-width="0.4" /></g>
<g transform="translate(17,484.28) scale(1.0)" ><polyline points="-0.8,-1.5 0.8,0 -0.8,1.5" fill="none" stroke="#666" stroke-width="0.6" /></g>
<g transform="translate(26.25,484.17999999999995) scale(1.0)" ><polygon points="-3.2,-2.6 -0.8,-2.6 -0.1,-1.8 3.2,-1.8 3.2,2.8 -3.2,2.8" fill="#f6f0b4" stroke="#d9cd86" stroke-width="0.45"/><line x1="-3.2" y1="-1.0" x2="3.2" y2="-1.0" stroke="#e6dc98" stroke-width="0.4" /></g>
<g transform="translate(26.25,492.4599999999999) scale(1.0)" ><polygon points="-3.2,-2.6 -0.8,-2.6 -0.1,-1.8 3.2,-1.8 3.2,2.8 -3.2,2.8" fill="#f6f0b4" stroke="#d9cd86" stroke-width="0.45"/><line x1="-3.2" y1="-1.0" x2="3.2" y2="-1.0" stroke="#e6dc98" stroke-width="0.4" /></g>
<g transform="translate(11,515) scale(1.15)" ><rect x="-2.8" y="-1.6" width="4.6" height="3.6" fill="#f0c030" stroke="#a08020" stroke-width="0.4"/><rect x="-0.6" y="-2.8" width="3.6" height="2.8" fill="#4a80d8" stroke="#2a50a0" stroke-width="0.4"/><line x1="0.4" y1="1.0" x2="2.4" y2="2.6" stroke="#c03030" stroke-width="0.6" /></g>
<g transform="translate(24.75,515) scale(1.1)" ><ellipse cx="0" cy="0" rx="2.9" ry="1.8" fill="#fff" stroke="#333" stroke-width="0.6"/><circle cx="0" cy="0" r="1.3" fill="#2d3f9e" /><circle cx="0" cy="0" r="0.5" fill="#111" /></g>
<g transform="translate(38.75,515) scale(1.1)" ><rect x="-2.9" y="-1.6" width="4.0" height="3.2" fill="#333" rx="0.4"/><polygon points="1.2,-0.4 2.9,-1.6 2.9,1.6 1.2,0.4" fill="#333" /></g>
<g transform="translate(7.75,527.0) scale(1.25)" ><circle cx="0.6" cy="-1.4" r="1.6" fill="#fff" stroke="#2849a8" stroke-width="0.8"/><line x1="-2.8" y1="2.6" x2="-0.6" y2="0.2" stroke="#20a040" stroke-width="0.8" /><line x1="-0.6" y1="0.2" x2="2.4" y2="1.8" stroke="#e02020" stroke-width="0.8" /><circle cx="-0.6" cy="0.2" r="0.7" fill="#e0c020" /></g>
<g transform="translate(86.9,527.0) scale(1.1)" ><polyline points="-1.4,-0.7 0,0.7 1.4,-0.7" fill="none" stroke="#666" stroke-width="0.45" /></g>
<g transform="translate(707.2,434.2) scale(1.0)" ><rect x="-1.6" y="-0.8" width="2.4" height="2.4" fill="none" stroke="#333" stroke-width="0.5"/><polyline points="-0.7,-0.8 -0.7,-1.7 1.7,-1.7 1.7,0.7 0.8,0.7" fill="none" stroke="#333" stroke-width="0.5" /></g>
<line x1="715.0" y1="432.7" x2="718.0" y2="435.7" stroke="#111" stroke-width="0.65" /><line x1="718.0" y1="432.7" x2="715.0" y2="435.7" stroke="#111" stroke-width="0.65" />
<g transform="translate(156.6,453.5) scale(1.2)" ><rect x="-2.8" y="-2.8" width="5.6" height="5.6" fill="#5aa85a" stroke="#445" stroke-width="0.5"/><rect x="-2.8" y="-2.8" width="5.6" height="1.2" fill="#2d3f9e" /><rect x="-1.8" y="-0.8" width="2.0" height="2.6" fill="#c8e8c8" /><rect x="0.6" y="-0.2" width="1.6" height="2.0" fill="#8ebcf2" /></g>
<g transform="translate(238.5,453.5) scale(1.1)" ><polyline points="-1.4,-0.7 0,0.7 1.4,-0.7" fill="none" stroke="#666" stroke-width="0.45" /></g>
<g transform="translate(245.4,453.5) scale(1.35)" ><polygon points="0.7,-1.1 0.7,1.1 -0.7,0" fill="#444" /></g>
<g transform="translate(252.9,453.5) scale(1.35)" ><polygon points="-0.7,-1.2 -0.7,1.2 0.8,0" fill="#111" /></g>
<line x1="258.25" y1="449.3" x2="258.25" y2="457.7" stroke="#c9c9c9" stroke-width="0.55" />
<g transform="translate(265.4,453.5) scale(1.2)" ><line x1="-2.8" y1="2.4" x2="2.0" y2="-2.6" stroke="#6a9fe8" stroke-width="0.9" /><circle cx="-2.8" cy="2.4" r="0.65" fill="#e21d1d" /><circle cx="2.2" cy="-2.7" r="0.65" fill="#e21d1d" /><line x1="1.2" y1="1.0" x2="2.8" y2="1.0" stroke="#333" stroke-width="0.4" /><line x1="2.0" y1="1.0" x2="2.0" y2="2.8" stroke="#333" stroke-width="0.4" /><line x1="1.2" y1="2.8" x2="2.8" y2="2.8" stroke="#333" stroke-width="0.4" /></g>
<g transform="translate(378.5,453.5) scale(1.1)" ><polyline points="-1.4,-0.7 0,0.7 1.4,-0.7" fill="none" stroke="#666" stroke-width="0.45" /></g>
<g transform="translate(386,453.5) scale(1.35)" ><polygon points="0.7,-1.1 0.7,1.1 -0.7,0" fill="#444" /></g>
<g transform="translate(392.9,453.5) scale(1.35)" ><polygon points="-0.7,-1.2 -0.7,1.2 0.8,0" fill="#111" /></g>
<line x1="398" y1="449.3" x2="398" y2="457.7" stroke="#c9c9c9" stroke-width="0.55" />
<rect x="400" y="447.9" width="21.5" height="10.2" fill="#cce4fa" rx="0.8"/>
<line x1="410.75" y1="448.2" x2="410.75" y2="457.8" stroke="#dcecfb" stroke-width="0.5" />
<g transform="translate(406.25,453.5) scale(1.3)" ><rect x="-2.6" y="-2.9" width="3.4" height="2.6" fill="#f2f2f6" stroke="#555" stroke-width="0.4"/><path d="M0.6,-0.6 Q2.6,0.4 1.2,2.4" fill="none" stroke="#2d55b8" stroke-width="0.8" /><polygon points="0.2,1.6 1.8,2.9 2.2,1.2" fill="#2d55b8" /></g>
<g transform="translate(416.25,453.5) scale(1.3)" ><rect x="-0.6" y="-2.9" width="3.4" height="2.6" fill="#f2f2f6" stroke="#555" stroke-width="0.4"/><path d="M-0.8,-0.6 Q-2.8,0.4 -1.4,2.4" fill="none" stroke="#2d55b8" stroke-width="0.8" /><polygon points="-2.4,1.2 -2.0,2.9 -0.4,1.8" fill="#2d55b8" /></g>
<line x1="423.5" y1="449.3" x2="423.5" y2="457.7" stroke="#c9c9c9" stroke-width="0.55" />
<g transform="translate(430.6,453.5) scale(1.3)" ><rect x="-2.9" y="-2.6" width="5.8" height="5.2" fill="#d6d6d6" stroke="#b0b0b0" stroke-width="0.4"/><line x1="-2.9" y1="-0.9" x2="2.9" y2="-0.9" stroke="#b0b0b0" stroke-width="0.35" /><line x1="-2.9" y1="0.8" x2="2.9" y2="0.8" stroke="#b0b0b0" stroke-width="0.35" /><line x1="-1.0" y1="-2.6" x2="-1.0" y2="2.6" stroke="#b0b0b0" stroke-width="0.35" /><line x1="1.0" y1="-2.6" x2="1.0" y2="2.6" stroke="#b0b0b0" stroke-width="0.35" /><rect x="-2.9" y="-2.6" width="5.8" height="1.6" fill="#9a9a9a" /></g>
<g transform="translate(441.5,453.5) scale(1.3)" ><rect x="-2.9" y="-0.8" width="5.8" height="3.4" fill="#e6e6e6" stroke="#c4c4c4" stroke-width="0.4"/><line x1="-1.0" y1="-0.8" x2="-1.0" y2="2.6" stroke="#c4c4c4" stroke-width="0.35" /><line x1="1.0" y1="-0.8" x2="1.0" y2="2.6" stroke="#c4c4c4" stroke-width="0.35" /><polyline points="-1.6,-1.4 0,-2.6 1.6,-1.4" fill="none" stroke="#c8c8c8" stroke-width="0.5" /></g>
<g transform="translate(453.5,453.5) scale(1.3)" ><rect x="-2.9" y="-2.6" width="5.8" height="5.2" fill="#d6d6d6" stroke="#b0b0b0" stroke-width="0.4"/><line x1="-2.9" y1="-0.9" x2="2.9" y2="-0.9" stroke="#b0b0b0" stroke-width="0.35" /><line x1="-2.9" y1="0.8" x2="2.9" y2="0.8" stroke="#b0b0b0" stroke-width="0.35" /><line x1="-1.0" y1="-2.6" x2="-1.0" y2="2.6" stroke="#b0b0b0" stroke-width="0.35" /><line x1="1.0" y1="-2.6" x2="1.0" y2="2.6" stroke="#b0b0b0" stroke-width="0.35" /><rect x="-1.0" y="-0.9" width="2.0" height="1.7" fill="#bdbdbd" /></g>
<g transform="translate(464.4,453.5) scale(1.3)" ><rect x="-2.9" y="-2.6" width="5.8" height="5.2" fill="#d6d6d6" stroke="#b0b0b0" stroke-width="0.4"/><line x1="-2.9" y1="-0.9" x2="2.9" y2="-0.9" stroke="#b0b0b0" stroke-width="0.35" /><line x1="-2.9" y1="0.8" x2="2.9" y2="0.8" stroke="#b0b0b0" stroke-width="0.35" /><line x1="-1.0" y1="-2.6" x2="-1.0" y2="2.6" stroke="#b0b0b0" stroke-width="0.35" /><line x1="1.0" y1="-2.6" x2="1.0" y2="2.6" stroke="#b0b0b0" stroke-width="0.35" /><rect x="-1.0" y="-2.6" width="2.0" height="5.2" fill="#c4c4c4" /></g>
<g transform="translate(475,453.5) scale(1.3)" ><rect x="-2.9" y="-2.6" width="5.8" height="5.2" fill="#d6d6d6" stroke="#b0b0b0" stroke-width="0.4"/><line x1="-2.9" y1="-0.9" x2="2.9" y2="-0.9" stroke="#b0b0b0" stroke-width="0.35" /><line x1="-2.9" y1="0.8" x2="2.9" y2="0.8" stroke="#b0b0b0" stroke-width="0.35" /><line x1="-1.0" y1="-2.6" x2="-1.0" y2="2.6" stroke="#b0b0b0" stroke-width="0.35" /><line x1="1.0" y1="-2.6" x2="1.0" y2="2.6" stroke="#b0b0b0" stroke-width="0.35" /><rect x="-1.0" y="-0.9" width="2.0" height="3.5" fill="#bdbdbd" /></g>
<line x1="482.25" y1="449.3" x2="482.25" y2="457.7" stroke="#c9c9c9" stroke-width="0.55" />
<g transform="translate(489,453.5) scale(1.3)" ><rect x="-2.9" y="-2.9" width="5.8" height="5.8" fill="#dcdcdc" stroke="#aaa" stroke-width="0.4"/><line x1="-2.4" y1="-2.4" x2="2.4" y2="2.4" stroke="#444" stroke-width="1.0" /><line x1="2.4" y1="-2.4" x2="-2.4" y2="2.4" stroke="#444" stroke-width="1.0" /></g>
<line x1="496" y1="449.3" x2="496" y2="457.7" stroke="#c9c9c9" stroke-width="0.55" />
<g transform="translate(503.1,453.5) scale(1.3)" ><rect x="-2.6" y="-1.8" width="2.4" height="1.4" fill="#444" /><rect x="-2.6" y="0.4" width="2.4" height="1.4" fill="#444" /><path d="M0.2,-1.1 Q2.8,-1.1 2.8,0.6 Q2.8,1.8 0.6,1.6" fill="none" stroke="#444" stroke-width="0.6" /><line x1="-2.6" y1="-2.8" x2="0.6" y2="-2.8" stroke="#888" stroke-width="0.4" /></g>
<g transform="translate(514.75,453.5) scale(1.3)" ><line x1="-2.9" y1="-0.8" x2="-0.6" y2="-0.8" stroke="#444" stroke-width="0.7" /><line x1="-2.9" y1="0.6" x2="-0.6" y2="0.6" stroke="#444" stroke-width="0.7" /><line x1="0" y1="-1.8" x2="2.6" y2="1.6" stroke="#444" stroke-width="0.7" /><line x1="2.6" y1="-1.8" x2="0" y2="1.6" stroke="#444" stroke-width="0.7" /><line x1="-2.6" y1="-2.6" x2="1.0" y2="-2.6" stroke="#aaa" stroke-width="0.4" /></g>
<g transform="translate(525.6,453.5) scale(1.3)" ><line x1="-2.6" y1="0" x2="0.8" y2="0" stroke="#444" stroke-width="0.7" /><polygon points="-2.9,0 -1.2,-1.2 -1.2,1.2" fill="#444" /><line x1="1.6" y1="-2.0" x2="1.6" y2="2.0" stroke="#999" stroke-width="0.4" /><line x1="0.4" y1="-2.0" x2="2.8" y2="-2.0" stroke="#bbb" stroke-width="0.4" /><line x1="0.4" y1="2.0" x2="2.8" y2="2.0" stroke="#bbb" stroke-width="0.4" /></g>
<g transform="translate(536.9,453.5) scale(1.3)" ><line x1="-0.6" y1="0" x2="2.6" y2="0" stroke="#444" stroke-width="0.7" /><polygon points="2.9,0 1.2,-1.2 1.2,1.2" fill="#444" /><line x1="-1.6" y1="-2.0" x2="-1.6" y2="2.0" stroke="#999" stroke-width="0.4" /><line x1="-2.8" y1="-2.0" x2="-0.4" y2="-2.0" stroke="#bbb" stroke-width="0.4" /><line x1="-2.8" y1="2.0" x2="-0.4" y2="2.0" stroke="#bbb" stroke-width="0.4" /></g>
<line x1="543.75" y1="449.3" x2="543.75" y2="457.7" stroke="#c9c9c9" stroke-width="0.55" />
<g transform="translate(550.6,453.5) scale(1.3)" ><rect x="-2.9" y="-2.6" width="5.8" height="5.4" fill="#f6f6f8" stroke="#445" stroke-width="0.55"/><rect x="-2.9" y="-2.6" width="5.8" height="1.7" fill="#aeb8e6" /><line x1="-1.0" y1="-2.6" x2="-1.0" y2="-0.9" stroke="#667" stroke-width="0.3" /><line x1="1.0" y1="-2.6" x2="1.0" y2="-0.9" stroke="#667" stroke-width="0.3" /></g>
<line x1="557.5" y1="449.3" x2="557.5" y2="457.7" stroke="#c9c9c9" stroke-width="0.55" />
<g transform="translate(565,453.5) scale(1.3)" ><text x="-2.9" y="2.4" font-size="3.6" font-weight="bold" fill="#222">ab</text><circle cx="2.2" cy="2.0" r="0.4" fill="#222" /><rect x="0.4" y="-3.0" width="2.6" height="2.2" fill="#e8ecf8" stroke="#2d3f9e" stroke-width="0.4"/><rect x="0.4" y="-3.0" width="2.6" height="0.9" fill="#2d55b8" /></g>
<g transform="translate(576.25,453.5) scale(1.3)" ><text x="-2.6" y="2.0" font-size="5.6" font-style="italic" fill="#8a8a8a" style="font-family:Liberation Serif,serif">fx</text></g>
<g transform="translate(587.25,453.5) scale(1.3)" ><text x="-2.6" y="2.0" font-size="5.6" font-style="italic" fill="#8a8a8a" style="font-family:Liberation Serif,serif">fx</text><line x1="0.2" y1="-2.6" x2="2.6" y2="-0.6" stroke="#999" stroke-width="0.5" /><line x1="2.6" y1="-2.6" x2="0.2" y2="-0.6" stroke="#999" stroke-width="0.5" /></g>
<g transform="translate(598.1,453.5) scale(1.3)" ><text x="-2.8" y="2.0" font-size="5.6" font-style="italic" font-weight="bold" fill="#222" style="font-family:Liberation Serif,serif">fx</text><circle cx="1.8" cy="-2.0" r="1.0" fill="#2d55b8" /></g>
<line x1="605.25" y1="449.3" x2="605.25" y2="457.7" stroke="#c9c9c9" stroke-width="0.55" />
<g transform="translate(612.25,453.5) scale(1.3)" ><rect x="-2.0" y="-2.9" width="4.6" height="5.8" fill="#eef6ee" stroke="#5a6a5a" stroke-width="0.45"/><rect x="-3.0" y="-1.8" width="4.6" height="3.6" fill="#5cb25c" stroke="#2c7a2c" stroke-width="0.3"/><rect x="-1.9" y="-0.9" width="2.4" height="1.8" fill="#d8f0d8" /><line x1="-2.2" y1="-0.6" x2="-0.2" y2="-0.6" stroke="#d8f0d8" stroke-width="0.4" /><line x1="-2.2" y1="0.6" x2="-0.2" y2="0.6" stroke="#d8f0d8" stroke-width="0.4" /><line x1="1.0" y1="-1.6" x2="2.2" y2="-1.6" stroke="#7a7" stroke-width="0.35" /><line x1="1.0" y1="-0.2" x2="2.2" y2="-0.2" stroke="#7a7" stroke-width="0.35" /><line x1="1.0" y1="1.2" x2="2.2" y2="1.2" stroke="#7a7" stroke-width="0.35" /></g>
<g transform="translate(620.25,453.5) scale(1.15)" ><polygon points="-1.35,-0.7 1.35,-0.7 0,0.9" fill="#1a1a1a" /></g>
<g transform="translate(628.4,453.5) scale(1.3)" ><rect x="-2.0" y="-2.9" width="4.6" height="5.8" fill="#eef6ee" stroke="#5a6a5a" stroke-width="0.45"/><rect x="-3.0" y="-1.8" width="4.6" height="3.6" fill="#5cb25c" stroke="#2c7a2c" stroke-width="0.3"/><rect x="-1.9" y="-0.9" width="2.4" height="1.8" fill="#d8f0d8" /><line x1="-2.2" y1="-0.6" x2="-0.2" y2="-0.6" stroke="#d8f0d8" stroke-width="0.4" /><line x1="-2.2" y1="0.6" x2="-0.2" y2="0.6" stroke="#d8f0d8" stroke-width="0.4" /><line x1="1.0" y1="-1.6" x2="2.2" y2="-1.6" stroke="#7a7" stroke-width="0.35" /><line x1="1.0" y1="-0.2" x2="2.2" y2="-0.2" stroke="#7a7" stroke-width="0.35" /><line x1="1.0" y1="1.2" x2="2.2" y2="1.2" stroke="#7a7" stroke-width="0.35" /><polygon points="-1.2,2.0 0.4,2.0 -0.4,3.1" fill="#2c7a2c" /></g>
<g transform="translate(640.1,453.5) scale(1.3)" ><rect x="-2.0" y="-2.9" width="4.6" height="5.8" fill="#eef6ee" stroke="#5a6a5a" stroke-width="0.45"/><rect x="-3.0" y="-1.8" width="4.6" height="3.6" fill="#5cb25c" stroke="#2c7a2c" stroke-width="0.3"/><rect x="-1.9" y="-0.9" width="2.4" height="1.8" fill="#d8f0d8" /><line x1="-2.2" y1="-0.6" x2="-0.2" y2="-0.6" stroke="#d8f0d8" stroke-width="0.4" /><line x1="-2.2" y1="0.6" x2="-0.2" y2="0.6" stroke="#d8f0d8" stroke-width="0.4" /><line x1="1.0" y1="-1.6" x2="2.2" y2="-1.6" stroke="#7a7" stroke-width="0.35" /><line x1="1.0" y1="-0.2" x2="2.2" y2="-0.2" stroke="#7a7" stroke-width="0.35" /><line x1="1.0" y1="1.2" x2="2.2" y2="1.2" stroke="#7a7" stroke-width="0.35" /><circle cx="1.6" cy="1.8" r="1.2" fill="#eee" stroke="#444" stroke-width="0.5"/></g>
<line x1="646.7" y1="449.3" x2="646.7" y2="457.7" stroke="#c9c9c9" stroke-width="0.55" />
<g transform="translate(654,453.5) scale(1.3)" ><rect x="-2.9" y="-1.2" width="5.8" height="4.0" fill="#dedede" stroke="#b4b4b4" stroke-width="0.4"/><line x1="-1.0" y1="-1.2" x2="-1.0" y2="2.8" stroke="#b4b4b4" stroke-width="0.35" /><line x1="1.0" y1="-1.2" x2="1.0" y2="2.8" stroke="#b4b4b4" stroke-width="0.35" /><polyline points="0.2,-1.6 1.4,-2.9 2.2,-1.6" fill="none" stroke="#b8b8b8" stroke-width="0.5" /></g>
<g transform="translate(666.5,453.5) scale(1.3)" ><rect x="-2.9" y="-2.9" width="5.8" height="1.6" fill="#62b862" /><rect x="-2.9" y="-1.3" width="5.8" height="4.2" fill="#e8eefa" stroke="#99a" stroke-width="0.3"/><rect x="0.2" y="-0.9" width="2.4" height="3.4" fill="#8cb4f4" /><text x="-2.8" y="2.0" font-size="2.9" font-weight="bold" fill="#223">0.00</text></g>
<line x1="673.5" y1="449.3" x2="673.5" y2="457.7" stroke="#c9c9c9" stroke-width="0.55" />
<g transform="translate(680.8,453.5) scale(1.25)" ><circle cx="0.5" cy="-0.6" r="2.6" fill="#3a3a3a" /><line x1="-1.2" y1="1.2" x2="-2.9" y2="2.9" stroke="#3a3a3a" stroke-width="1.1" /><text x="0.5" y="0.75" font-size="3.8" font-weight="bold" fill="#fff" text-anchor="middle">?</text></g>
<g transform="translate(156.2,516.4) scale(1.3)" ><polygon points="0.9,-1.1 0.9,1.1 -0.5,0" fill="#8a8a8a" /><line x1="-0.9" y1="-1.1" x2="-0.9" y2="1.1" stroke="#8a8a8a" stroke-width="0.4" /></g>
<g transform="translate(163,516.4) scale(1.3)" ><polygon points="0.7,-1.1 0.7,1.1 -0.7,0" fill="#8a8a8a" /></g>
<g transform="translate(194.4,516.4) scale(1.3)" ><polygon points="-0.7,-1.2 -0.7,1.2 0.8,0" fill="#222" /></g>
<g transform="translate(201.9,516.4) scale(1.3)" ><polygon points="-0.9,-1.2 -0.9,1.2 0.6,0" fill="#222" /><line x1="1.0" y1="-1.2" x2="1.0" y2="1.2" stroke="#222" stroke-width="0.5" /></g>
<circle cx="694.1" cy="505" r="10.6" fill="#ececfa" />
<clipPath id="av"><circle cx="694.1" cy="505" r="10.4"/></clipPath>
<g clip-path="url(#av)"><ellipse cx="694.3" cy="501.8" rx="8.9" ry="7.6" fill="#7b5b3d"/><ellipse cx="687.9" cy="503.8" rx="3.0" ry="5.0" fill="#94714b"/><ellipse cx="700.6" cy="503.4" rx="3.0" ry="5.2" fill="#6b4e33"/><ellipse cx="692.5" cy="497.6" rx="4.2" ry="2.6" fill="#9a7750"/><polygon points="685.5,516.5 688.8,511.6 692.4,510.4 696.4,510.4 699.8,511.6 703,516.5" fill="#2f6fc8" /><rect x="692.3" y="508" width="3.8" height="3.6" fill="#dcae8e" /><ellipse cx="694.3" cy="504.6" rx="4.7" ry="5.7" fill="#efc6a6"/><ellipse cx="694.4" cy="499.3" rx="5.0" ry="2.2" fill="#86643f"/><rect x="690.0" y="502.8" width="3.7" height="2.2" fill="#e6dcd6" stroke="#1d1d2b" stroke-width="0.7" rx="0.6"/><rect x="694.9" y="502.8" width="3.7" height="2.2" fill="#e6dcd6" stroke="#1d1d2b" stroke-width="0.7" rx="0.6"/><circle cx="691.9" cy="503.9" r="0.5" fill="#3a2a20" /><circle cx="696.7" cy="503.9" r="0.5" fill="#3a2a20" /><line x1="692.7" y1="508.2" x2="695.9" y2="508.2" stroke="#b0584c" stroke-width="0.55" /></g>
<line x1="91.9" y1="522.9" x2="91.9" y2="531.3000000000001" stroke="#c9c9c9" stroke-width="0.55" />
<g transform="translate(97.9,527.1) scale(1.3)" ><rect x="-1.6" y="-1.6" width="3.6" height="3.6" fill="#f4f4f8" stroke="#445" stroke-width="0.4"/><rect x="-1.6" y="-1.6" width="3.6" height="0.9" fill="#2d3f9e" /><line x1="-1.6" y1="1.6" x2="-2.9" y2="2.9" stroke="#2f62d0" stroke-width="0.7" /><polygon points="-2.9,2.9 -2.59,1.84 -1.84,2.59" fill="#2f62d0" /><line x1="2.0" y1="1.6" x2="2.9" y2="2.9" stroke="#2f62d0" stroke-width="0.7" /><polygon points="2.9,2.9 1.92,2.41 2.78,1.81" fill="#2f62d0" /><line x1="2.0" y1="-1.6" x2="2.9" y2="-2.9" stroke="#2f62d0" stroke-width="0.7" /><polygon points="2.9,-2.9 2.78,-1.81 1.92,-2.41" fill="#2f62d0" /><polygon points="-1.80,-3.30 -1.53,-2.55 -0.81,-2.89 -1.15,-2.17 -0.40,-1.90 -1.15,-1.63 -0.81,-0.91 -1.53,-1.25 -1.80,-0.50 -2.07,-1.25 -2.79,-0.91 -2.45,-1.63 -3.20,-1.90 -2.45,-2.17 -2.79,-2.89 -2.07,-2.55" fill="#f6ea1e" stroke="#b8a820" stroke-width="0.25"/></g>
<g transform="translate(108.1,527.1) scale(1.3)" ><rect x="-1.4" y="-0.6" width="2.8" height="2.6" fill="#334" /><line x1="0" y1="-0.6" x2="0" y2="-2.9" stroke="#2f62d0" stroke-width="0.7" /><polygon points="0,-2.9 0.53,-1.93 -0.53,-1.93" fill="#2f62d0" /><line x1="-1.4" y1="0.6" x2="-2.9" y2="0.6" stroke="#2f62d0" stroke-width="0.7" /><polygon points="-2.9,0.6 -1.93,0.07 -1.93,1.13" fill="#2f62d0" /><line x1="1.4" y1="0.6" x2="2.9" y2="0.6" stroke="#2f62d0" stroke-width="0.7" /><polygon points="2.9,0.6 1.93,1.13 1.93,0.07" fill="#2f62d0" /><line x1="0" y1="2.0" x2="0" y2="2.9" stroke="#2f62d0" stroke-width="0.6" /></g>
<g transform="translate(118.5,527.1) scale(1.3)" ><rect x="-0.8" y="-1.4" width="2.0" height="2.8" fill="#334" /><line x1="-0.8" y1="0" x2="-2.9" y2="0" stroke="#2f62d0" stroke-width="0.9" /><polygon points="-2.9,0 -1.93,-0.53 -1.93,0.53" fill="#2f62d0" /><line x1="1.2" y1="0" x2="2.9" y2="0" stroke="#2f62d0" stroke-width="0.7" /><polygon points="2.9,0 1.93,0.53 1.93,-0.53" fill="#2f62d0" /><line x1="0.2" y1="-2.6" x2="0.2" y2="2.6" stroke="#2f62d0" stroke-width="0.4" /></g>
<g transform="translate(128.75,527.1) scale(1.3)" ><rect x="-1.0" y="-1.0" width="2.0" height="2.0" fill="#334" /><line x1="-1.0" y1="-1.0" x2="-2.8" y2="-2.8" stroke="#2f62d0" stroke-width="0.7" /><polygon points="-2.8,-2.8 -1.74,-2.49 -2.49,-1.74" fill="#2f62d0" /><line x1="1.0" y1="-1.0" x2="2.8" y2="-2.8" stroke="#2f62d0" stroke-width="0.7" /><polygon points="2.8,-2.8 2.49,-1.74 1.74,-2.49" fill="#2f62d0" /><line x1="-1.0" y1="1.0" x2="-2.8" y2="2.8" stroke="#2f62d0" stroke-width="0.7" /><polygon points="-2.8,2.8 -2.49,1.74 -1.74,2.49" fill="#2f62d0" /><line x1="1.0" y1="1.0" x2="2.8" y2="2.8" stroke="#2f62d0" stroke-width="0.7" /><polygon points="2.8,2.8 1.74,2.49 2.49,1.74" fill="#2f62d0" /></g>
<g transform="translate(139,527.1) scale(1.3)" ><rect x="-1.0" y="-2.2" width="3.2" height="4.6" fill="#f4f4f8" stroke="#445" stroke-width="0.4"/><rect x="-1.0" y="-2.2" width="3.2" height="0.9" fill="#2d3f9e" /><line x1="-1.0" y1="1.6" x2="-2.9" y2="2.6" stroke="#2f62d0" stroke-width="0.7" /><polygon points="-2.9,2.6 -2.29,1.68 -1.80,2.62" fill="#2f62d0" /><line x1="2.2" y1="0" x2="2.9" y2="-2.2" stroke="#2f62d0" stroke-width="0.7" /><polygon points="2.9,-2.2 3.11,-1.12 2.10,-1.44" fill="#2f62d0" /><line x1="2.2" y1="2.0" x2="2.9" y2="2.9" stroke="#2f62d0" stroke-width="0.7" /><polygon points="2.9,2.9 1.89,2.46 2.72,1.81" fill="#2f62d0" /><polygon points="-1.90,-3.20 -1.65,-2.50 -0.98,-2.82 -1.30,-2.15 -0.60,-1.90 -1.30,-1.65 -0.98,-0.98 -1.65,-1.30 -1.90,-0.60 -2.15,-1.30 -2.82,-0.98 -2.50,-1.65 -3.20,-1.90 -2.50,-2.15 -2.82,-2.82 -2.15,-2.50" fill="#f6ea1e" stroke="#b8a820" stroke-width="0.25"/></g>
<line x1="145.6" y1="522.9" x2="145.6" y2="531.3000000000001" stroke="#c9c9c9" stroke-width="0.55" />
<g transform="translate(151.9,527.1) scale(1.3)" ><rect x="-2.4" y="-0.6" width="4.8" height="3.4" fill="#6a6a6a" /><line x1="-2.0" y1="0.6" x2="2.0" y2="0.6" stroke="#eee" stroke-width="0.5" /><line x1="-2.0" y1="1.8" x2="2.0" y2="1.8" stroke="#eee" stroke-width="0.5" /><rect x="-0.4" y="0.0" width="1.6" height="2.4" fill="#e8b040" /><rect x="0.4" y="-2.6" width="2.2" height="1.8" fill="#e8e8f4" stroke="#334" stroke-width="0.3"/><polygon points="-1.40,-3.20 -1.09,-2.34 -0.27,-2.73 -0.66,-1.91 0.20,-1.60 -0.66,-1.29 -0.27,-0.47 -1.09,-0.86 -1.40,0.00 -1.71,-0.86 -2.53,-0.47 -2.14,-1.29 -3.00,-1.60 -2.14,-1.91 -2.53,-2.73 -1.71,-2.34" fill="#f6ea1e" stroke="#b8a820" stroke-width="0.25"/></g>
<g transform="translate(161.9,527.1) scale(1.3)" ><rect x="-2.4" y="-0.6" width="4.8" height="3.4" fill="#6a6a6a" /><line x1="-2.0" y1="0.6" x2="2.0" y2="0.6" stroke="#eee" stroke-width="0.5" /><line x1="-2.0" y1="1.8" x2="2.0" y2="1.8" stroke="#eee" stroke-width="0.5" /><rect x="0.2" y="-0.2" width="2.0" height="2.6" fill="#f0b030" /><polygon points="-1.40,-3.20 -1.09,-2.34 -0.27,-2.73 -0.66,-1.91 0.20,-1.60 -0.66,-1.29 -0.27,-0.47 -1.09,-0.86 -1.40,0.00 -1.71,-0.86 -2.53,-0.47 -2.14,-1.29 -3.00,-1.60 -2.14,-1.91 -2.53,-2.73 -1.71,-2.34" fill="#f6ea1e" stroke="#b8a820" stroke-width="0.25"/></g>
<g transform="translate(171.9,527.1) scale(1.3)" ><polyline points="-2.8,2.8 -2.8,1.0 2.8,1.0 2.8,2.8" fill="none" stroke="#222" stroke-width="0.7" /><line x1="0" y1="1.0" x2="0" y2="-0.6" stroke="#222" stroke-width="0.7" /><polygon points="-0.60,-3.30 -0.27,-2.39 0.60,-2.80 0.19,-1.93 1.10,-1.60 0.19,-1.27 0.60,-0.40 -0.27,-0.81 -0.60,0.10 -0.93,-0.81 -1.80,-0.40 -1.39,-1.27 -2.30,-1.60 -1.39,-1.93 -1.80,-2.80 -0.93,-2.39" fill="#f6ea1e" stroke="#b8a820" stroke-width="0.25"/></g>
<g transform="translate(179.75,527.1) scale(1.15)" ><polygon points="-1.35,-0.7 1.35,-0.7 0,0.9" fill="#1a1a1a" /></g>
<g transform="translate(187.25,527.1) scale(1.3)" ><polyline points="-2.6,-0.4 -2.6,2.4 2.8,2.4" fill="none" stroke="#222" stroke-width="0.7" /><rect x="-1.4" y="0.2" width="3.6" height="1.2" fill="#444" /><polygon points="-0.80,-3.30 -0.49,-2.44 0.33,-2.83 -0.06,-2.01 0.80,-1.70 -0.06,-1.39 0.33,-0.57 -0.49,-0.96 -0.80,-0.10 -1.11,-0.96 -1.93,-0.57 -1.54,-1.39 -2.40,-1.70 -1.54,-2.01 -1.93,-2.83 -1.11,-2.44" fill="#f6ea1e" stroke="#b8a820" stroke-width="0.25"/></g>
<g transform="translate(197.25,527.1) scale(1.3)" ><line x1="-0.6" y1="-0.6" x2="-0.6" y2="2.8" stroke="#333" stroke-width="0.7" /><line x1="-0.6" y1="0.8" x2="-2.4" y2="2.8" stroke="#333" stroke-width="0.6" /><line x1="-0.6" y1="0.8" x2="1.4" y2="2.8" stroke="#333" stroke-width="0.6" /><rect x="0.2" y="-2.6" width="2.6" height="2.0" fill="#2f62d0" /><polygon points="-1.60,-3.10 -1.31,-2.29 -0.54,-2.66 -0.91,-1.89 -0.10,-1.60 -0.91,-1.31 -0.54,-0.54 -1.31,-0.91 -1.60,-0.10 -1.89,-0.91 -2.66,-0.54 -2.29,-1.31 -3.10,-1.60 -2.29,-1.89 -2.66,-2.66 -1.89,-2.29" fill="#f6ea1e" stroke="#b8a820" stroke-width="0.25"/></g>
<g transform="translate(207.5,527.1) scale(1.3)" ><rect x="-2.4" y="-1.0" width="4.8" height="3.8" fill="#fff" stroke="#333" stroke-width="0.6"/><rect x="0.2" y="-2.6" width="2.4" height="1.8" fill="#2d3f9e" /><line x1="-2.4" y1="0.4" x2="2.4" y2="0.4" stroke="#333" stroke-width="0.4" /><polygon points="-1.40,-3.10 -1.11,-2.29 -0.34,-2.66 -0.71,-1.89 0.10,-1.60 -0.71,-1.31 -0.34,-0.54 -1.11,-0.91 -1.40,-0.10 -1.69,-0.91 -2.46,-0.54 -2.09,-1.31 -2.90,-1.60 -2.09,-1.89 -2.46,-2.66 -1.69,-2.29" fill="#f6ea1e" stroke="#b8a820" stroke-width="0.25"/></g>
<line x1="214" y1="522.9" x2="214" y2="531.3000000000001" stroke="#c9c9c9" stroke-width="0.55" />
<g transform="translate(220.6,527.1) scale(1.3)" ><path d="M-2.6,2.4 Q-2.0,-1.6 1.2,-2.2" fill="none" stroke="#222" stroke-width="0.9" /><circle cx="1.6" cy="-2.2" r="0.8" fill="#e02020" /><circle cx="-2.2" cy="2.0" r="0.8" fill="#e02020" /><line x1="-0.6" y1="2.6" x2="1.2" y2="2.6" stroke="#e02020" stroke-width="0.5" /></g>
<g transform="translate(228.5,527.1) scale(1.15)" ><polygon points="-1.35,-0.7 1.35,-0.7 0,0.9" fill="#1a1a1a" /></g>
<g transform="translate(235.6,527.1) scale(1.3)" ><line x1="-1.2" y1="0.4" x2="-1.2" y2="-2.9" stroke="#2f62d0" stroke-width="0.8" /><polygon points="-1.2,-2.9 -0.67,-1.93 -1.73,-1.93" fill="#2f62d0" /><line x1="1.4" y1="-0.4" x2="1.4" y2="2.9" stroke="#2f62d0" stroke-width="0.8" /><polygon points="1.4,2.9 0.87,1.93 1.93,1.93" fill="#2f62d0" /><line x1="-1.2" y1="1.0" x2="-1.2" y2="2.8" stroke="#2f62d0" stroke-width="0.7" stroke-dasharray="0.7 0.5"/><line x1="1.4" y1="-2.8" x2="1.4" y2="-1.0" stroke="#555" stroke-width="0.7" stroke-dasharray="0.7 0.5"/></g>
<g transform="translate(243.75,527.1) scale(1.15)" ><polygon points="-1.35,-0.7 1.35,-0.7 0,0.9" fill="#1a1a1a" /></g>
<line x1="248.3" y1="522.9" x2="248.3" y2="531.3000000000001" stroke="#c9c9c9" stroke-width="0.55" />
<line x1="250.9" y1="522.9" x2="250.9" y2="531.3000000000001" stroke="#c9c9c9" stroke-width="0.55" />
<g transform="translate(254,527.1) scale(1.3)" ><line x1="-1.4" y1="-2.8" x2="-1.4" y2="2.8" stroke="#8a8a8a" stroke-width="0.5" /><line x1="1.4" y1="-2.8" x2="1.4" y2="2.8" stroke="#8a8a8a" stroke-width="0.5" /><line x1="0" y1="-2.4" x2="0" y2="2.4" stroke="#b0b0b0" stroke-width="0.9" /><circle cx="0" cy="-2.6" r="0.6" fill="#e21d1d" /><circle cx="0" cy="2.6" r="0.6" fill="#e21d1d" /></g>
<g transform="translate(264,527.1) scale(1.3)" ><line x1="-2.2" y1="-2.6" x2="-0.4" y2="2.6" stroke="#8a8a8a" stroke-width="0.5" /><line x1="2.2" y1="-2.6" x2="0.6" y2="2.6" stroke="#8a8a8a" stroke-width="0.5" /><line x1="0" y1="-2.4" x2="0" y2="2.4" stroke="#b0b0b0" stroke-width="0.7" /><circle cx="0.1" cy="2.6" r="0.6" fill="#e21d1d" /><circle cx="0" cy="-2.6" r="0.5" fill="#e21d1d" /></g>
<g transform="translate(274,527.1) scale(1.3)" ><polyline points="-2.6,2.6 0.6,-0.6 -0.8,-2.6" fill="none" stroke="#333" stroke-width="0.6" /><line x1="0.6" y1="-0.6" x2="2.8" y2="-1.4" stroke="#333" stroke-width="0.6" /><circle cx="-2.6" cy="2.6" r="0.6" fill="#e21d1d" /><circle cx="2.8" cy="-1.4" r="0.6" fill="#e21d1d" /><circle cx="-0.8" cy="-2.6" r="0.5" fill="#e21d1d" /></g>
<g transform="translate(282,527.1) scale(1.15)" ><polygon points="-1.35,-0.7 1.35,-0.7 0,0.9" fill="#1a1a1a" /></g>
<g transform="translate(290,527.1) scale(1.3)" ><line x1="-2.4" y1="2.4" x2="2.4" y2="-2.4" stroke="#333" stroke-width="0.6" /><circle cx="-2.4" cy="2.4" r="0.65" fill="#e21d1d" /><circle cx="2.4" cy="-2.4" r="0.65" fill="#e21d1d" /></g>
<g transform="translate(300,527.1) scale(1.3)" ><path d="M-2.4,2.6 Q-2.2,-2.2 2.4,-2.4" fill="none" stroke="#333" stroke-width="0.6" /><circle cx="-2.4" cy="2.6" r="0.65" fill="#e21d1d" /><circle cx="2.4" cy="-2.4" r="0.65" fill="#e21d1d" /></g>
<g transform="translate(310,527.1) scale(1.3)" ><line x1="-2.6" y1="1.4" x2="1.6" y2="-2.6" stroke="#333" stroke-width="0.6" /><line x1="-1.4" y1="2.6" x2="2.8" y2="-1.4" stroke="#333" stroke-width="0.6" /><circle cx="-2.6" cy="1.4" r="0.6" fill="#e21d1d" /><circle cx="2.8" cy="-1.4" r="0.6" fill="#e21d1d" /></g>
<g transform="translate(320.4,527.1) scale(1.3)" ><line x1="-2.6" y1="2.6" x2="2.6" y2="-2.6" stroke="#333" stroke-width="0.6" /><line x1="-1.4" y1="-2.2" x2="1.6" y2="2.4" stroke="#3a66e8" stroke-width="0.8" /><circle cx="-2.6" cy="2.6" r="0.6" fill="#e21d1d" /><circle cx="2.6" cy="-2.6" r="0.6" fill="#e21d1d" /></g>
<g transform="translate(330.25,527.1) scale(1.3)" ><line x1="-2.6" y1="2.6" x2="2.6" y2="-2.6" stroke="#333" stroke-width="0.6" /><line x1="-0.8" y1="-0.8" x2="0.8" y2="0.8" stroke="#555" stroke-width="0.5" /><circle cx="-2.6" cy="2.6" r="0.65" fill="#e21d1d" /><circle cx="2.6" cy="-2.6" r="0.65" fill="#e21d1d" /></g>
<g transform="translate(340.25,527.1) scale(1.3)" ><line x1="-2.6" y1="2.2" x2="2.2" y2="-2.6" stroke="#333" stroke-width="0.55" /><line x1="-2.0" y1="2.8" x2="2.8" y2="-2.0" stroke="#333" stroke-width="0.55" /><circle cx="-2.4" cy="2.6" r="0.65" fill="#e21d1d" /><circle cx="2.6" cy="-2.4" r="0.65" fill="#e21d1d" /></g>
<g transform="translate(350.4,527.1) scale(1.3)" ><polygon points="-2.6,-0.6 -0.8,-1.2 0.2,-2.8 1.2,-0.8 2.8,-0.4 1.4,0.8 2.0,2.6 0,1.6 -1.8,2.6 -1.2,0.6" fill="none" stroke="#777" stroke-width="0.5"/></g>
<g transform="translate(360.4,527.1) scale(1.3)" ><polygon points="-2.4,-1.6 0.4,-1.0 2.4,-2.4 1.6,0.2 2.6,2.2 -0.2,1.4 -2.4,2.4 -1.4,0.4" fill="none" stroke="#d82020" stroke-width="0.6"/><circle cx="-2.4" cy="-1.6" r="0.6" fill="#e21d1d" /><circle cx="2.4" cy="-2.4" r="0.6" fill="#e21d1d" /><circle cx="2.6" cy="2.2" r="0.6" fill="#e21d1d" /><circle cx="-2.4" cy="2.4" r="0.6" fill="#e21d1d" /><circle cx="0.4" cy="-1.0" r="0.5" fill="#e21d1d" /><circle cx="-0.2" cy="1.4" r="0.5" fill="#e21d1d" /></g>
<g transform="translate(370.25,527.1) scale(1.3)" ><line x1="-2.6" y1="2.6" x2="0.4" y2="-0.8" stroke="#333" stroke-width="0.6" /><line x1="0.4" y1="-0.8" x2="2.8" y2="0.6" stroke="#888" stroke-width="0.5" /><line x1="0.4" y1="-0.8" x2="1.4" y2="-2.8" stroke="#888" stroke-width="0.5" /><circle cx="-2.6" cy="2.6" r="0.6" fill="#e21d1d" /><circle cx="1.6" cy="-1.6" r="0.7" fill="#e21d1d" /></g>
<line x1="377.25" y1="522.9" x2="377.25" y2="531.3000000000001" stroke="#c9c9c9" stroke-width="0.55" />
<g transform="translate(383.75,527.1) scale(1.3)" ><polyline points="-2.8,1.6 0,-2.4 2.6,0.6" fill="none" stroke="#222" stroke-width="0.7" /><line x1="-2.8" y1="1.6" x2="0.6" y2="2.4" stroke="#222" stroke-width="0.6" /><circle cx="-1.8" cy="2.2" r="0.7" fill="#3a66e8" /><circle cx="1.4" cy="2.4" r="0.7" fill="#3a66e8" /><text x="1.0" y="1.4" font-size="2.8" font-weight="bold" fill="#222">Σ</text></g>
<g transform="translate(391.25,527.1) scale(1.15)" ><polygon points="-1.35,-0.7 1.35,-0.7 0,0.9" fill="#1a1a1a" /></g>
<g transform="translate(398.75,527.1) scale(1.3)" ><line x1="-2.6" y1="1.2" x2="1.4" y2="-2.6" stroke="#5a7ee8" stroke-width="0.8" /><line x1="-1.2" y1="2.6" x2="2.8" y2="-1.2" stroke="#5a7ee8" stroke-width="0.8" /><circle cx="-2.6" cy="1.2" r="0.6" fill="#e21d1d" /><circle cx="2.8" cy="-1.2" r="0.6" fill="#e21d1d" /><circle cx="-1.2" cy="2.6" r="0.5" fill="#e21d1d" /></g>
<g transform="translate(409,527.1) scale(1.3)" ><line x1="-2.6" y1="2.6" x2="2.6" y2="-2.6" stroke="#333" stroke-width="0.5" /><line x1="-1.6" y1="-2.4" x2="1.8" y2="2.6" stroke="#3a66e8" stroke-width="0.9" /><circle cx="-2.6" cy="2.6" r="0.6" fill="#e21d1d" /><circle cx="2.6" cy="-2.6" r="0.6" fill="#e21d1d" /></g>
<g transform="translate(419,527.1) scale(1.3)" ><line x1="-2.6" y1="2.6" x2="2.6" y2="-2.6" stroke="#445" stroke-width="0.6" stroke-dasharray="1 0.5"/><circle cx="-2.6" cy="2.6" r="0.65" fill="#e21d1d" /><circle cx="2.6" cy="-2.6" r="0.65" fill="#e21d1d" /></g>
<g transform="translate(429.1,527.1) scale(1.3)" ><line x1="-2.6" y1="2.6" x2="2.6" y2="-2.6" stroke="#778" stroke-width="0.9" /><line x1="-1.0" y1="0.2" x2="0.4" y2="-1.2" stroke="#dde" stroke-width="0.5" /><circle cx="-2.6" cy="2.6" r="0.65" fill="#e21d1d" /><circle cx="2.6" cy="-2.6" r="0.65" fill="#e21d1d" /></g>
<g transform="translate(439.4,527.1) scale(1.3)" ><polygon points="-2.4,-1.6 0.4,-1.0 2.4,-2.4 1.6,0.2 2.6,2.2 -0.2,1.4 -2.4,2.4 -1.4,0.4" fill="none" stroke="#d82020" stroke-width="0.6"/><circle cx="-2.4" cy="-1.6" r="0.6" fill="#e21d1d" /><circle cx="2.4" cy="-2.4" r="0.6" fill="#e21d1d" /><circle cx="2.6" cy="2.2" r="0.6" fill="#e21d1d" /><circle cx="-2.4" cy="2.4" r="0.6" fill="#e21d1d" /><circle cx="0.4" cy="-1.0" r="0.5" fill="#e21d1d" /><circle cx="1.6" cy="0.2" r="0.5" fill="#e21d1d" /></g>
<g transform="translate(458.5,527.1) scale(1.3)" ><rect x="-2.8" y="-2.0" width="5.2" height="4.8" fill="#d8d8d8" stroke="#a4a4a4" stroke-width="0.4"/><line x1="-2.8" y1="-0.4" x2="2.4" y2="-0.4" stroke="#a4a4a4" stroke-width="0.35" /><line x1="-2.8" y1="1.2" x2="2.4" y2="1.2" stroke="#a4a4a4" stroke-width="0.35" /><line x1="-1.0" y1="-2.0" x2="-1.0" y2="2.8" stroke="#a4a4a4" stroke-width="0.35" /><line x1="0.8" y1="-2.0" x2="0.8" y2="2.8" stroke="#a4a4a4" stroke-width="0.35" /><circle cx="1.4" cy="-1.8" r="1.35" fill="#2d3f9e" /><circle cx="0.9999999999999999" cy="-2.2" r="0.45" fill="#8fa0e0" /></g>
<g transform="translate(471.6,527.1) scale(1.3)" ><rect x="-2.8" y="-2.0" width="5.2" height="4.8" fill="#e4e4e4" stroke="#a4a4a4" stroke-width="0.4"/><line x1="-2.8" y1="-0.4" x2="2.4" y2="-0.4" stroke="#a4a4a4" stroke-width="0.35" /><line x1="-2.8" y1="1.2" x2="2.4" y2="1.2" stroke="#a4a4a4" stroke-width="0.35" /><line x1="-1.0" y1="-2.0" x2="-1.0" y2="2.8" stroke="#a4a4a4" stroke-width="0.35" /><line x1="0.8" y1="-2.0" x2="0.8" y2="2.8" stroke="#a4a4a4" stroke-width="0.35" /><rect x="0.4" y="-3.0" width="2.6" height="2.2" fill="#eef0fa" stroke="#2d3f9e" stroke-width="0.4"/><rect x="0.4" y="-3.0" width="2.6" height="0.9" fill="#2d55b8" /><rect x="-2.4" y="-2.4" width="1.9" height="1.9" fill="#f0e020" stroke="#a8a020" stroke-width="0.3"/></g>
<rect x="477.5" y="522.3" width="9.399999999999977" height="9.2" fill="#cce4fa" rx="0.8"/>
<g transform="translate(482.1,527.1) scale(1.3)" ><rect x="-2.8" y="-2.0" width="5.2" height="4.8" fill="#c4d8f4" stroke="#a4a4a4" stroke-width="0.4"/><line x1="-2.8" y1="-0.4" x2="2.4" y2="-0.4" stroke="#a4a4a4" stroke-width="0.35" /><line x1="-2.8" y1="1.2" x2="2.4" y2="1.2" stroke="#a4a4a4" stroke-width="0.35" /><line x1="-1.0" y1="-2.0" x2="-1.0" y2="2.8" stroke="#a4a4a4" stroke-width="0.35" /><line x1="0.8" y1="-2.0" x2="0.8" y2="2.8" stroke="#a4a4a4" stroke-width="0.35" /><circle cx="1.4" cy="-1.8" r="1.35" fill="#2d3f9e" /><circle cx="0.9999999999999999" cy="-2.2" r="0.45" fill="#8fa0e0" /></g>
<g transform="translate(495,527.1) scale(1.3)" ><line x1="-1.8" y1="-2.8" x2="-1.8" y2="2.8" stroke="#777" stroke-width="0.5" /><line x1="1.8" y1="-2.8" x2="1.8" y2="2.8" stroke="#777" stroke-width="0.5" /><line x1="-2.8" y1="-1.2" x2="2.8" y2="-1.2" stroke="#777" stroke-width="0.5" /><line x1="-2.8" y1="1.8" x2="2.8" y2="1.8" stroke="#777" stroke-width="0.5" /><rect x="-2.6" y="-2.9" width="2.2" height="2.2" fill="#f0e020" stroke="#a8a020" stroke-width="0.3"/></g>
<rect x="500.6" y="522.3" width="10.0" height="9.2" fill="#cce4fa" rx="0.8"/>
<g transform="translate(505.6,527.1) scale(1.3)" ><line x1="-1.8" y1="-2.0" x2="-1.8" y2="2.8" stroke="#4a70b0" stroke-width="0.5" /><line x1="1.8" y1="-0.6" x2="1.8" y2="2.8" stroke="#4a70b0" stroke-width="0.5" /><line x1="-2.8" y1="-0.2" x2="2.8" y2="-0.2" stroke="#4a70b0" stroke-width="0.5" /><line x1="-2.8" y1="2.0" x2="2.8" y2="2.0" stroke="#4a70b0" stroke-width="0.5" /><circle cx="0.8" cy="-1.6" r="1.35" fill="#2d3f9e" /><circle cx="0.4" cy="-2.0" r="0.45" fill="#8fa0e0" /></g>
<g transform="translate(520,527.1) scale(1.3)" ><polyline points="-1.8,-2.6 -1.8,2.0 2.6,2.0" fill="none" stroke="#8a8a8a" stroke-width="0.6" /><line x1="-0.4" y1="2.0" x2="-0.4" y2="1.0" stroke="#aaa" stroke-width="0.4" /><line x1="1.0" y1="2.0" x2="1.0" y2="1.0" stroke="#aaa" stroke-width="0.4" /></g>
<rect x="529.75" y="522.3" width="40.25" height="9.2" fill="#cce4fa" rx="0.8"/>
<g transform="translate(534.75,527.1) scale(1.3)" ><rect x="-2.8" y="-2.4" width="4.2" height="5.0" fill="#a8a8a8" /><line x1="-1.4" y1="-2.4" x2="-1.4" y2="2.6" stroke="#c8c8c8" stroke-width="0.4" /><line x1="0" y1="-2.4" x2="0" y2="2.6" stroke="#c8c8c8" stroke-width="0.4" /><circle cx="1.2" cy="-1.4" r="0.9" fill="#e03020" /><circle cx="2.2" cy="0.2" r="0.9" fill="#2050d0" /><rect x="0.6" y="-0.6" width="1.0" height="1.4" fill="#eee" /></g>
<g transform="translate(544.75,527.1) scale(1.05)" ><path d="M-2.0,2.4 L-2.0,0 Q-2.0,-2.2 0,-2.2 Q2.0,-2.2 2.0,0 L2.0,2.4" fill="none" stroke="#666" stroke-width="1.3" /><rect x="-2.65" y="1.0" width="1.3" height="1.5" fill="#e03020" /><rect x="1.35" y="1.0" width="1.3" height="1.5" fill="#2050d0" /></g>
<g transform="translate(554.4,527.1) scale(1.3)" ><rect x="-1.9" y="-1.9" width="3.8" height="3.8" fill="#eef4fc" stroke="#555" stroke-width="0.55" rx="0.5"/></g>
<g transform="translate(564.75,527.1) scale(1.3)" ><circle cx="0" cy="0" r="2.4" fill="#eef4fc" stroke="#555" stroke-width="0.5"/><line x1="-2.4" y1="0" x2="2.4" y2="0" stroke="#555" stroke-width="0.4" /><line x1="0" y1="-2.4" x2="0" y2="2.4" stroke="#555" stroke-width="0.4" /><rect x="-1.0" y="-1.0" width="2.0" height="2.0" fill="none" stroke="#555" stroke-width="0.4"/></g>
<g transform="translate(574.4,527.1) scale(1.2)" ><rect x="-2.2" y="-2.2" width="1.7" height="1.7" fill="#555" /><rect x="0.5" y="-2.2" width="1.7" height="1.7" fill="#555" /><rect x="-2.2" y="0.5" width="1.7" height="1.7" fill="#555" /><rect x="0.5" y="0.5" width="1.7" height="1.7" fill="#555" /><line x1="-1.4" y1="-1.4" x2="1.4" y2="1.4" stroke="#888" stroke-width="0.4" /><line x1="1.4" y1="-1.4" x2="-1.4" y2="1.4" stroke="#888" stroke-width="0.4" /></g>
<rect x="580" y="522.3" width="9.75" height="9.2" fill="#cce4fa" rx="0.8"/>
<g transform="translate(585,527.1) scale(1.3)" ><polyline points="-1.8,-2.4 -1.8,2.0 2.4,2.0" fill="none" stroke="#445" stroke-width="0.6" /><polyline points="-1.8,-0.4 0.6,-0.4 0.6,2.0" fill="none" stroke="#2a50a8" stroke-width="0.6" /></g>
<g transform="translate(594.75,527.1) scale(1.3)" ><line x1="-2.2" y1="2.2" x2="2.2" y2="-2.2" stroke="#8c8c8c" stroke-width="0.6" /><circle cx="-2.2" cy="2.2" r="0.4" fill="#555" /></g>
<g transform="translate(604.75,527.1) scale(1.3)" ><polygon points="-2.6,0.8 0.6,-2.2 2.6,-0.6 -0.6,2.4" fill="#f4f4f4" stroke="#7c7c7c" stroke-width="0.55"/></g>
<g transform="translate(614.75,527.1) scale(1.3)" ><path d="M-2.0,-1.4 L-2.0,0.4 Q-2.0,2.4 0,2.4 Q2.0,2.4 2.0,0.4 L2.0,-1.4" fill="#f4f4f4" stroke="#666" stroke-width="0.6" /><line x1="-2.6" y1="-1.6" x2="2.6" y2="-1.6" stroke="#666" stroke-width="0.6" /></g>
<g transform="translate(624.75,527.1) scale(1.3)" ><circle cx="0" cy="0" r="2.1" fill="#f6f6f6" stroke="#666" stroke-width="0.7"/></g>
<g transform="translate(635,527.1) scale(1.2)" ><polygon points="-2.4,1.0 0.6,-1.8 2.0,-0.6 -1.0,2.2" fill="#888" /><line x1="0.6" y1="-1.8" x2="2.4" y2="-2.4" stroke="#999" stroke-width="0.5" /></g>
<g transform="translate(645,527.1) scale(1.2)" ><polygon points="-2.4,0.4 1.0,-1.6 2.2,-0.6 -1.2,1.6" fill="#999" /><line x1="-1.2" y1="1.6" x2="-0.6" y2="2.6" stroke="#aaa" stroke-width="0.5" /><line x1="1.0" y1="-1.6" x2="2.6" y2="-1.8" stroke="#aaa" stroke-width="0.4" /></g>
<g transform="translate(655,527.1) scale(1.2)" ><polygon points="-2.4,0.4 1.0,-1.6 2.2,-0.6 -1.2,1.6" fill="#c4c4c4" /><line x1="-1.2" y1="1.6" x2="-0.6" y2="2.6" stroke="#ccc" stroke-width="0.5" /><line x1="0.4" y1="-2.6" x2="0.4" y2="-1.2" stroke="#ccc" stroke-width="0.4" /></g>
<g transform="translate(665,527.1) scale(1.2)" ><line x1="-2.2" y1="-2.2" x2="2.2" y2="2.2" stroke="#dcdcdc" stroke-width="0.5" /><line x1="2.2" y1="-2.2" x2="-2.2" y2="2.2" stroke="#dcdcdc" stroke-width="0.5" /><line x1="0" y1="-2.8" x2="0" y2="2.8" stroke="#dcdcdc" stroke-width="0.5" /><line x1="-2.8" y1="0" x2="2.8" y2="0" stroke="#dcdcdc" stroke-width="0.5" /></g>
<rect x="671" y="522.3" width="49" height="9.2" fill="#cce4fa" rx="0.8"/>
<g transform="translate(675.8,527.1) scale(1.3)" ><rect x="-2.7" y="-2.7" width="5.4" height="5.4" fill="#c4d8f2" stroke="#8aa2c8" stroke-width="0.4"/><line x1="-2.7" y1="-0.9" x2="2.7" y2="-0.9" stroke="#8aa2c8" stroke-width="0.35" /><line x1="-2.7" y1="0.9" x2="2.7" y2="0.9" stroke="#8aa2c8" stroke-width="0.35" /><line x1="-0.9" y1="-2.7" x2="-0.9" y2="2.7" stroke="#8aa2c8" stroke-width="0.35" /><line x1="0.9" y1="-2.7" x2="0.9" y2="2.7" stroke="#8aa2c8" stroke-width="0.35" /></g>
<g transform="translate(685.5,527.1) scale(1.3)" ><line x1="-1.8" y1="-2.9" x2="-1.8" y2="2.9" stroke="#4a6a9a" stroke-width="0.5" /><line x1="1.8" y1="-2.9" x2="1.8" y2="2.9" stroke="#4a6a9a" stroke-width="0.5" /><line x1="-2.9" y1="-1.8" x2="2.9" y2="-1.8" stroke="#4a6a9a" stroke-width="0.5" /><line x1="-2.9" y1="1.8" x2="2.9" y2="1.8" stroke="#4a6a9a" stroke-width="0.5" /></g>
<g transform="translate(695.5,527.1) scale(1.25)" ><polygon points="-2.6,0.2 0.4,-1.8 2.6,-1.0 2.6,0.8 -0.4,2.4 -2.6,1.8" fill="#f4f4f8" stroke="#555" stroke-width="0.5"/><polyline points="-2.6,0.2 -0.4,0.8 2.6,-1.0" fill="none" stroke="#555" stroke-width="0.4" /><line x1="-0.4" y1="0.8" x2="-0.4" y2="2.4" stroke="#555" stroke-width="0.4" /></g>
<g transform="translate(706,527.1) scale(1.3)" ><line x1="-2.2" y1="0" x2="2.2" y2="0" stroke="#b83030" stroke-width="0.9" /><line x1="-2.6" y1="-1.4" x2="-2.6" y2="1.4" stroke="#334" stroke-width="0.7" /><line x1="2.6" y1="-1.4" x2="2.6" y2="1.4" stroke="#334" stroke-width="0.7" /><line x1="-2.8" y1="-0.2" x2="-1.8" y2="-0.2" stroke="#334" stroke-width="0.5" /></g>
<g transform="translate(716.2,527.1) scale(1.3)" ><line x1="0" y1="-2.4" x2="0" y2="1.2" stroke="#888" stroke-width="0.6" /><circle cx="0" cy="1.8" r="1.0" fill="#aaa" /><line x1="-1.6" y1="2.8" x2="1.6" y2="2.8" stroke="#888" stroke-width="0.5" /></g>
</svg>
</body></html>
